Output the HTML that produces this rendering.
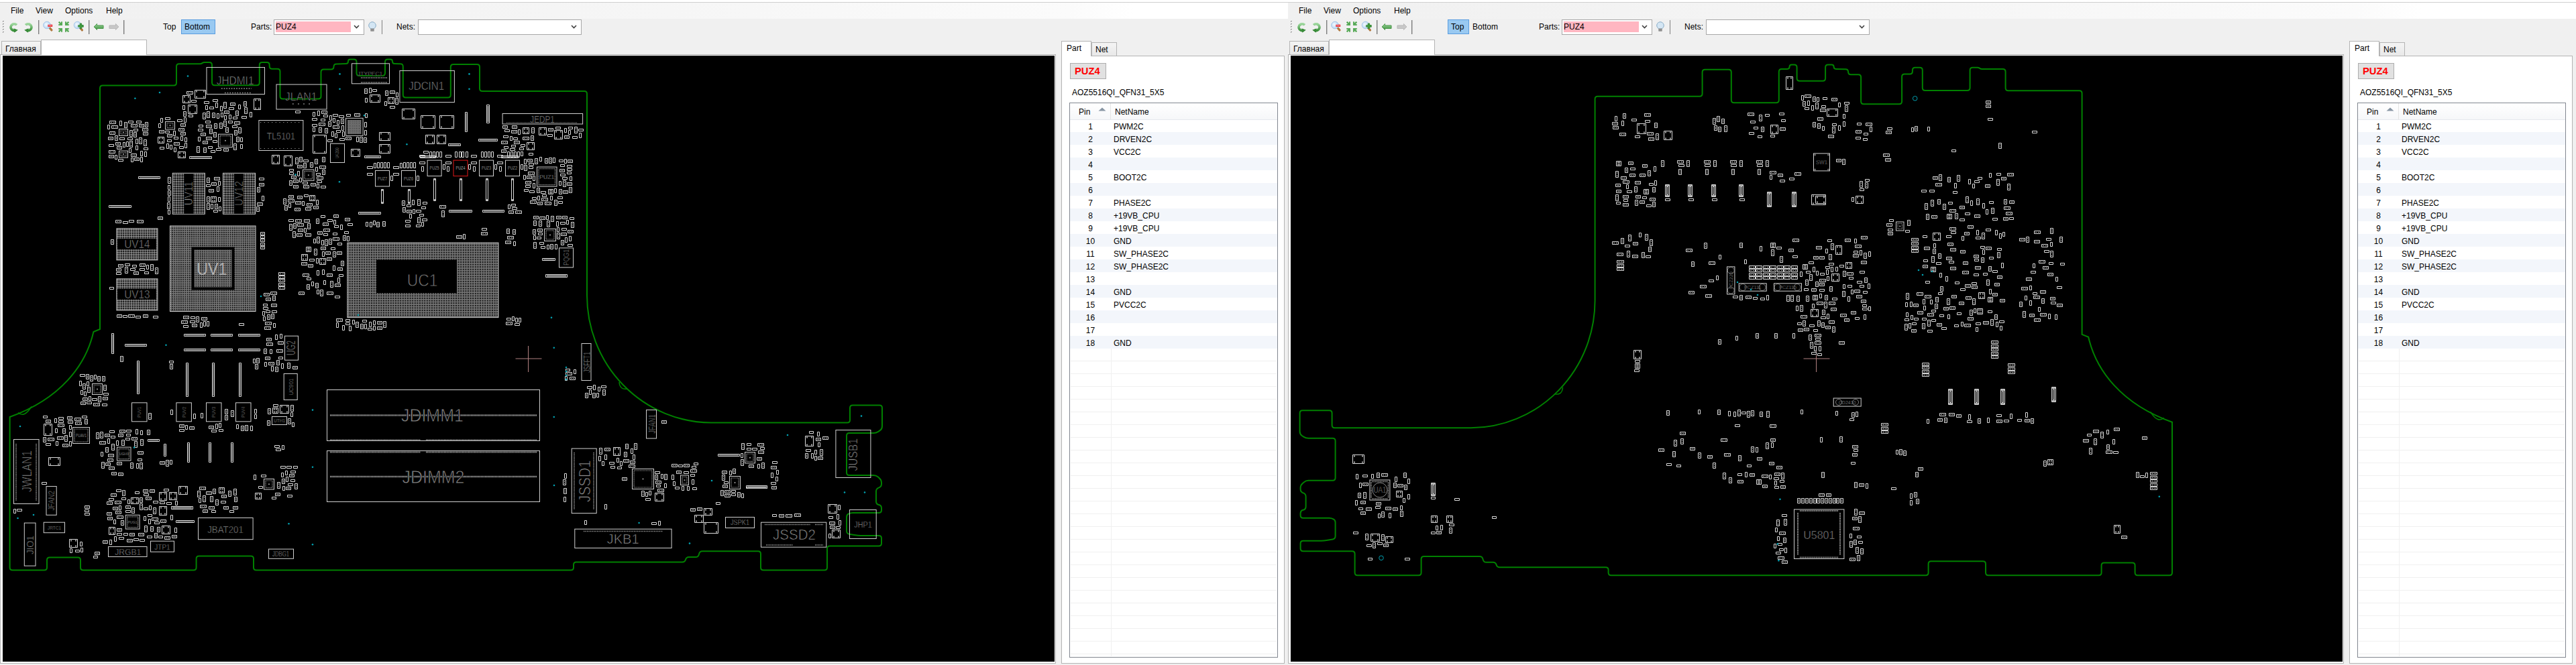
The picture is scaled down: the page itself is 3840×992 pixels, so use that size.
<!DOCTYPE html><html><head><meta charset="utf-8"><style>
html,body{margin:0;padding:0}
body{width:3840px;height:992px;overflow:hidden;background:#f0f0f0;font-family:"Liberation Sans",sans-serif;font-size:12px;color:#000;position:relative}
.win{position:absolute;top:0;width:1920px;height:992px;overflow:hidden;background:#f0f0f0}
.abs{position:absolute}
.lbl{position:absolute;white-space:nowrap;line-height:14px}
.num{text-align:center}
.topstrip{position:absolute;left:0;top:0;width:1920px;height:3px;background:#fff;border-bottom:1px solid #cfcfcf}
.menubar{position:absolute;left:0;top:4px;width:1920px;height:24px;background:linear-gradient(90deg,#f0f0f0 0,#f6f6f6 52%,#fbfbfb 83%,#fff 88%,#fff 100%)}
.menubar span{position:absolute;top:5px;line-height:14px}
.toolbar{position:absolute;left:0;top:28px;width:1920px;height:25px;background:#f0f0f0}
.btnact{background:#99c9f1;border:1px solid #5a9de0;box-sizing:border-box}
.combo{background:#fff;border:1px solid #a8a8a8;box-sizing:border-box}
.tab{background:linear-gradient(#f4f4f4,#e8e8e8);border:1px solid #b4b4b4;border-bottom:none;box-sizing:border-box}
.tabsel{background:#fff;border:1px solid #b4b4b4;border-bottom:none;box-sizing:border-box}
.tabsel2{background:#fff;border:1px solid #b4b4b4;border-bottom:none;box-sizing:border-box}
.panel{background:#fff;border:1px solid #b4b4b4;box-sizing:border-box}
.pbtn{background:#e1e1e1;border:1px solid #adadad;box-sizing:border-box}
.tbl{background:#fff;border:1px solid #828790;box-sizing:border-box}
.thead{background:linear-gradient(#fff,#f6f7f9);border-bottom:1px solid #e5e8ee}
</style></head><body><div class="win" style="left:0"><div class="topstrip"></div><div class="menubar"><span style="left:16px">File</span><span style="left:53px">View</span><span style="left:97px">Options</span><span style="left:158px">Help</span></div><div class="toolbar"></div><svg class="abs" style="left:0;top:0" width="900" height="60"><rect x="4" y="31" width="2" height="2" fill="#9a9a9a"/><rect x="5" y="32" width="1" height="1" fill="#fff"/><rect x="4" y="35" width="2" height="2" fill="#9a9a9a"/><rect x="5" y="36" width="1" height="1" fill="#fff"/><rect x="4" y="39" width="2" height="2" fill="#9a9a9a"/><rect x="5" y="40" width="1" height="1" fill="#fff"/><rect x="4" y="43" width="2" height="2" fill="#9a9a9a"/><rect x="5" y="44" width="1" height="1" fill="#fff"/><rect x="4" y="47" width="2" height="2" fill="#9a9a9a"/><rect x="5" y="48" width="1" height="1" fill="#fff"/><defs><linearGradient id="gg" x1="0" y1="0" x2="0" y2="1"><stop offset="0" stop-color="#9fd89f"/><stop offset="1" stop-color="#3c913c"/></linearGradient><radialGradient id="lens" cx="0.4" cy="0.4" r="0.6"><stop offset="0" stop-color="#f4f9ff"/><stop offset="1" stop-color="#b9d6f2"/></radialGradient></defs><path d="M24.8,37.2 A5,5 0 1 0 23.2,45.2" fill="none" stroke="url(#gg)" stroke-width="3.4"/><path d="M20.5,42.5 L26.5,44.8 L21.5,48.5 Z" fill="#3a8a3a"/><path d="M38.2,37.2 A5,5 0 1 1 39.8,45.2" fill="none" stroke="url(#gg)" stroke-width="3.4"/><path d="M42.5,42.5 L36.5,44.8 L41.5,48.5 Z" fill="#3a8a3a"/><rect x="57.0" y="30" width="1.2" height="21" fill="#7a7a7a"/><rect x="132.0" y="30" width="1.2" height="21" fill="#7a7a7a"/><rect x="184.0" y="30" width="1.2" height="21" fill="#7a7a7a"/><path d="M74,41.5 L77,45" stroke="#b07a40" stroke-width="2.8" stroke-linecap="round"/><circle cx="70" cy="37.5" r="5.2" fill="url(#lens)" stroke="#a9c9ea" stroke-width="1"/><rect x="71.3" y="36.8" width="6.8" height="3.2" fill="#e8303a"/><rect x="72.3" y="37.8" width="4.8" height="1" fill="#ff9a9a"/><g fill="#58aa58"><path d="M87,33.5 L88.5,32 L91,34.5 L91,32.5 L93,32.5 L93,38 L87.5,38 L87.5,36 L89.5,36 Z"/><path d="M103,33.5 L101.5,32 L99,34.5 L99,32.5 L97,32.5 L97,38 L102.5,38 L102.5,36 L100.5,36 Z"/><path d="M87,46.5 L88.5,48 L91,45.5 L91,47.5 L93,47.5 L93,42 L87.5,42 L87.5,44 L89.5,44 Z"/><path d="M103,46.5 L101.5,48 L99,45.5 L99,47.5 L97,47.5 L97,42 L102.5,42 L102.5,44 L100.5,44 Z"/></g><path d="M119.5,41.5 L122.5,45" stroke="#b07a40" stroke-width="2.8" stroke-linecap="round"/><circle cx="115.5" cy="37.5" r="5.2" fill="url(#lens)" stroke="#a9c9ea" stroke-width="1"/><path d="M119,35 h2.6 v2.6 h2.6 v2.6 h-2.6 v2.6 h-2.6 v-2.6 h-2.6 v-2.6 h2.6 z" fill="#3f9a3f" stroke="#2f7f2f" stroke-width="0.5"/><path d="M140,40 L144.5,35.5 L144.5,38 L154,38 L154,42.5 L144.5,42.5 L144.5,44.5 Z" fill="url(#gg)" stroke="#3e8e3e" stroke-width="0.6"/><path d="M177,40 L172.5,35.5 L172.5,38 L163,38 L163,42.5 L172.5,42.5 L172.5,44.5 Z" fill="#c8c8c8" stroke="#b4b4b4" stroke-width="0.6"/><circle cx="555" cy="38" r="5.2" fill="#d4e6f4" stroke="#9ab8cf" stroke-width="1"/><rect x="552.5" y="42.5" width="5" height="4" fill="#909090"/><rect x="569" y="30" width="1" height="21" fill="#808080"/><path d="M528,38 L531.5,41.5 L535,38" fill="none" stroke="#404040" stroke-width="1.6"/><path d="M852,38 L855.5,41.5 L859,38" fill="none" stroke="#404040" stroke-width="1.6"/></svg><div class="abs lbl" style="left:243px;top:33px">Top</div><div class="abs btnact" style="left:270px;top:29px;width:51px;height:22px"></div><div class="abs lbl" style="left:275px;top:33px">Bottom</div><div class="abs lbl" style="left:374px;top:33px">Parts:</div><div class="abs combo" style="left:408px;top:29px;width:135px;height:23px"></div><div class="abs" style="left:411px;top:32px;width:112px;height:16px;background:#ffb6c1"></div><div class="abs lbl" style="left:411px;top:33px">PUZ4</div><div class="abs lbl" style="left:591px;top:33px">Nets:</div><div class="abs combo" style="left:623px;top:29px;width:244px;height:23px"></div><svg class="abs" style="left:0;top:0" width="900" height="60"><rect x="4" y="31" width="2" height="2" fill="#9a9a9a"/><rect x="5" y="32" width="1" height="1" fill="#fff"/><rect x="4" y="35" width="2" height="2" fill="#9a9a9a"/><rect x="5" y="36" width="1" height="1" fill="#fff"/><rect x="4" y="39" width="2" height="2" fill="#9a9a9a"/><rect x="5" y="40" width="1" height="1" fill="#fff"/><rect x="4" y="43" width="2" height="2" fill="#9a9a9a"/><rect x="5" y="44" width="1" height="1" fill="#fff"/><rect x="4" y="47" width="2" height="2" fill="#9a9a9a"/><rect x="5" y="48" width="1" height="1" fill="#fff"/><defs><linearGradient id="gg" x1="0" y1="0" x2="0" y2="1"><stop offset="0" stop-color="#9fd89f"/><stop offset="1" stop-color="#3c913c"/></linearGradient><radialGradient id="lens" cx="0.4" cy="0.4" r="0.6"><stop offset="0" stop-color="#f4f9ff"/><stop offset="1" stop-color="#b9d6f2"/></radialGradient></defs><path d="M24.8,37.2 A5,5 0 1 0 23.2,45.2" fill="none" stroke="url(#gg)" stroke-width="3.4"/><path d="M20.5,42.5 L26.5,44.8 L21.5,48.5 Z" fill="#3a8a3a"/><path d="M38.2,37.2 A5,5 0 1 1 39.8,45.2" fill="none" stroke="url(#gg)" stroke-width="3.4"/><path d="M42.5,42.5 L36.5,44.8 L41.5,48.5 Z" fill="#3a8a3a"/><rect x="57.0" y="30" width="1.2" height="21" fill="#7a7a7a"/><rect x="132.0" y="30" width="1.2" height="21" fill="#7a7a7a"/><rect x="184.0" y="30" width="1.2" height="21" fill="#7a7a7a"/><path d="M74,41.5 L77,45" stroke="#b07a40" stroke-width="2.8" stroke-linecap="round"/><circle cx="70" cy="37.5" r="5.2" fill="url(#lens)" stroke="#a9c9ea" stroke-width="1"/><rect x="71.3" y="36.8" width="6.8" height="3.2" fill="#e8303a"/><rect x="72.3" y="37.8" width="4.8" height="1" fill="#ff9a9a"/><g fill="#58aa58"><path d="M87,33.5 L88.5,32 L91,34.5 L91,32.5 L93,32.5 L93,38 L87.5,38 L87.5,36 L89.5,36 Z"/><path d="M103,33.5 L101.5,32 L99,34.5 L99,32.5 L97,32.5 L97,38 L102.5,38 L102.5,36 L100.5,36 Z"/><path d="M87,46.5 L88.5,48 L91,45.5 L91,47.5 L93,47.5 L93,42 L87.5,42 L87.5,44 L89.5,44 Z"/><path d="M103,46.5 L101.5,48 L99,45.5 L99,47.5 L97,47.5 L97,42 L102.5,42 L102.5,44 L100.5,44 Z"/></g><path d="M119.5,41.5 L122.5,45" stroke="#b07a40" stroke-width="2.8" stroke-linecap="round"/><circle cx="115.5" cy="37.5" r="5.2" fill="url(#lens)" stroke="#a9c9ea" stroke-width="1"/><path d="M119,35 h2.6 v2.6 h2.6 v2.6 h-2.6 v2.6 h-2.6 v-2.6 h-2.6 v-2.6 h2.6 z" fill="#3f9a3f" stroke="#2f7f2f" stroke-width="0.5"/><path d="M140,40 L144.5,35.5 L144.5,38 L154,38 L154,42.5 L144.5,42.5 L144.5,44.5 Z" fill="url(#gg)" stroke="#3e8e3e" stroke-width="0.6"/><path d="M177,40 L172.5,35.5 L172.5,38 L163,38 L163,42.5 L172.5,42.5 L172.5,44.5 Z" fill="#c8c8c8" stroke="#b4b4b4" stroke-width="0.6"/><circle cx="555" cy="38" r="5.2" fill="#d4e6f4" stroke="#9ab8cf" stroke-width="1"/><rect x="552.5" y="42.5" width="5" height="4" fill="#909090"/><rect x="569" y="30" width="1" height="21" fill="#808080"/><path d="M528,38 L531.5,41.5 L535,38" fill="none" stroke="#404040" stroke-width="1.6"/><path d="M852,38 L855.5,41.5 L859,38" fill="none" stroke="#404040" stroke-width="1.6"/></svg><div class="abs tab" style="left:2px;top:61px;width:59px;height:20px"></div><div class="abs lbl" style="left:8px;top:66px">Главная</div><div class="abs" style="left:0;top:81px;width:1574px;height:1px;background:#b0b0b0"></div><div class="abs" style="left:0;top:82px;width:1574px;height:908px;background:#fff;border-right:1px solid #b4b4b4;border-bottom:1px solid #b4b4b4;box-sizing:border-box"></div><div class="abs" style="left:0;top:82px;width:1px;height:908px;background:#b4b4b4"></div><div class="abs tabsel" style="left:61px;top:59px;width:158px;height:23px"></div><svg class="abs" style="left:4px;top:83px;background:#000" width="1568" height="904" viewBox="4 83 1568 904"><path d="M149.0,300.0 L149.0,131.5 Q149.0,127.5 153.0,127.5 L259.0,127.5 Q263.0,127.5 263.0,123.5 L263.0,99.3 Q263.0,95.3 267.0,95.3 L298.1,95.3 Q300.0,95.3 301.5,94.1 L301.5,94.1 Q303.0,92.9 304.9,92.9 L312.0,92.9 Q316.0,92.9 316.0,96.9 L316.0,123.3 Q316.0,127.3 320.0,127.3 L382.8,127.3 Q386.8,127.3 386.8,123.3 L386.8,96.9 Q386.8,92.9 390.8,92.9 L397.7,92.9 Q401.7,92.9 401.7,96.9 L401.7,98.8 Q401.7,102.8 405.7,102.8 L413.5,102.8 Q417.5,102.8 417.5,106.8 L417.5,143.5 Q417.5,147.5 421.5,147.5 L474.5,147.5 Q478.5,147.5 478.5,143.5 L478.5,107.5 Q478.5,103.5 482.5,103.5 L493.5,103.5 Q497.5,103.5 497.5,99.5 L497.5,99.5 Q497.5,95.5 501.5,95.4 L515.8,95.1 Q519.0,95.0 519.0,91.8 L519.0,91.8 Q519.0,88.6 522.2,88.6 L527.5,88.6 Q531.5,88.6 531.5,92.6 L531.5,108.9 Q531.5,112.9 535.5,112.9 L570.0,112.9 Q574.0,112.9 574.0,108.9 L574.0,92.6 Q574.0,88.6 578.0,88.6 L581.8,88.6 Q585.0,88.6 585.0,91.8 L585.0,91.8 Q585.0,95.0 588.2,95.1 L596.8,95.3 Q600.8,95.4 600.8,99.4 L600.8,141.5 Q600.8,145.5 604.8,145.5 L667.8,145.5 Q671.8,145.5 671.8,141.5 L671.8,100.0 Q671.8,96.0 675.8,96.0 L711.0,96.0 Q715.0,96.0 715.0,100.0 L715.0,132.0 Q715.0,136.0 719.0,136.0 L871.0,136.0 Q875.0,136.0 875.0,140.0 L875.0,440.0  A186,190 0 0 0 1060,630.5 L1060.0,630.5 L1263.0,630.5 Q1267.0,630.5 1267.0,626.5 L1267.0,608.5 Q1267.0,604.5 1271.0,604.5 L1311.0,604.5 Q1315.0,604.5 1315.0,608.5 L1315.0,636.0 Q1315.0,640.0 1311.7,642.2 L1309.3,643.8 Q1306.0,646.0 1302.0,646.0 L1266.0,646.0 Q1262.0,646.0 1262.0,650.0 L1262.0,705.0 Q1262.0,709.0 1266.0,709.0 L1302.0,709.0 Q1306.0,709.0 1309.0,711.6 L1311.0,713.4 Q1314.0,716.0 1314.0,720.0 L1314.0,722.0 Q1314.0,726.0 1310.3,727.4 L1309.7,727.6 Q1306.0,729.0 1306.0,733.0 L1306.0,748.0 Q1306.0,752.0 1309.9,753.0 L1310.1,753.0 Q1314.0,754.0 1314.0,758.0 L1314.0,761.0 Q1314.0,765.0 1310.0,765.0 L1271.4,765.0 Q1268.0,765.0 1265.0,766.5 L1265.0,766.5 Q1262.0,768.0 1262.0,771.4 L1262.0,792.0 Q1262.0,796.0 1265.9,796.7 L1275.1,798.3 Q1279.0,799.0 1283.0,799.0 L1310.0,799.0 Q1314.0,799.0 1314.0,803.0 L1314.0,810.5 Q1314.0,814.5 1310.0,814.5 L1237.0,814.5 Q1233.0,814.5 1233.0,818.5 L1233.0,846.5 Q1233.0,850.5 1229.0,850.5 L1138.0,850.5 Q1134.0,850.5 1134.0,846.5 L1134.0,826.3 Q1134.0,822.3 1130.0,822.3 L1047.0,822.3 Q1043.0,822.3 1042.1,826.2 L1041.9,827.1 Q1041.0,831.0 1037.0,831.0 L1026.9,831.0 Q1023.0,831.0 1022.0,834.8 L1022.0,834.8 Q1021.0,838.5 1017.1,838.5 L859.0,838.5 Q855.0,838.5 855.0,842.5 L855.0,846.5 Q855.0,850.5 851.0,850.5 L382.0,850.5 Q378.0,850.5 378.0,846.5 L378.0,833.5 Q378.0,829.5 374.0,829.5 L296.6,829.5 Q292.6,829.5 292.6,833.5 L292.6,846.5 Q292.6,850.5 288.6,850.5 L124.0,850.5 Q120.0,850.5 120.0,846.5 L120.0,835.6 Q120.0,831.6 116.0,831.6 L74.0,831.6 Q70.0,831.6 70.0,835.6 L70.0,846.5 Q70.0,850.5 66.0,850.5 L18.6,850.5 Q14.6,850.5 14.6,846.5 L14.6,622.0  C90,595 128,545 139.4,495 L149,491 Z" fill="none" stroke="#008000" stroke-width="2"/><path d="M27,615.5 Q36,624 47,606.5" fill="none" stroke="#008000" stroke-width="1.5"/><path d="M923,570 Q924,582 935,580" fill="none" stroke="#008000" stroke-width="1.5"/><path d="M768.5,535H807.5M787.5,516V555" stroke="#b08080" stroke-width="1"/><rect x="308" y="100.5" width="86.5" height="40" fill="none" stroke="#cfcfcf" stroke-width="1"/><text x="350.6" y="125.8" font-size="16.3" fill="#8e8e8e" stroke="#000" stroke-width="0.52" text-anchor="middle" textLength="55.8" lengthAdjust="spacingAndGlyphs">JHDMI1</text><path d="M330,132h45M335,138.5h40" stroke="#9a9a9a" stroke-width="1.6" stroke-dasharray="1.6 2.1"/><rect x="412" y="126" width="75" height="37" fill="none" stroke="#cfcfcf" stroke-width="1"/><text x="448.8" y="149.8" font-size="16.5" fill="#8e8e8e" stroke="#000" stroke-width="0.53" text-anchor="middle" textLength="47.9" lengthAdjust="spacingAndGlyphs">JLAN1</text><path d="M436,155h32" stroke="#9a9a9a" stroke-width="1.6" stroke-dasharray="1.6 6.5"/><rect x="524.5" y="94.8" width="56" height="30" fill="none" stroke="#cfcfcf" stroke-width="1"/><text x="551.7" y="112.9" font-size="9.5" fill="#8e8e8e" stroke="#000" stroke-width="0.30" text-anchor="middle" textLength="37.2" lengthAdjust="spacingAndGlyphs">JTYPEC1</text><path d="M538,116h40M538,123h40" stroke="#9a9a9a" stroke-width="1.5" stroke-dasharray="1.5 1"/><rect x="595.9" y="105.5" width="81.5" height="47" fill="none" stroke="#cfcfcf" stroke-width="1"/><text x="635.7" y="134.3" font-size="17.3" fill="#8e8e8e" stroke="#000" stroke-width="0.55" text-anchor="middle" textLength="53" lengthAdjust="spacingAndGlyphs">JDCIN1</text><rect x="385.9" y="179.5" width="66" height="45" fill="none" stroke="#cfcfcf" stroke-width="1"/><text x="418.8" y="207.5" font-size="14.4" fill="#8e8e8e" stroke="#000" stroke-width="0.46" text-anchor="middle" textLength="42" lengthAdjust="spacingAndGlyphs">TL5101</text><path d="M388,182.5h62M388,221.5h62" stroke="#9a9a9a" stroke-width="1.2" stroke-dasharray="1.2 4.5"/><rect x="749.1" y="169.5" width="119.5" height="15.5" fill="none" stroke="#cfcfcf" stroke-width="1"/><text x="808.5" y="182.6" font-size="14.0" fill="#8e8e8e" stroke="#000" stroke-width="0.45" text-anchor="middle" textLength="36.4" lengthAdjust="spacingAndGlyphs">JEDP1</text><path d="M755,183h105" stroke="#9a9a9a" stroke-width="1.2" stroke-dasharray="1 1"/><pattern id="uv1" x="254" y="337.2" width="3.2" height="3.2" patternUnits="userSpaceOnUse"><circle cx="1.6" cy="1.6" r="0.95" fill="none" stroke="#b4b4b4" stroke-width="0.9"/></pattern><rect x="254" y="337.2" width="126.5" height="126.5" fill="url(#uv1)"/><rect x="253.5" y="337" width="127.5" height="127.5" fill="none" stroke="#cfcfcf" stroke-width="1"/><rect x="287.5" y="370.5" width="60" height="60" fill="none" stroke="#000" stroke-width="4"/><text x="315.8" y="410" font-size="26.5" fill="#b0b0b0" stroke="#000" stroke-width="0.00" text-anchor="middle" textLength="45" lengthAdjust="spacingAndGlyphs">UV1</text><pattern id="pUV14" x="174" y="341" width="3.4" height="3.4" patternUnits="userSpaceOnUse"><circle cx="1.7" cy="1.7" r="0.95" fill="none" stroke="#b4b4b4" stroke-width="0.9"/></pattern><rect x="174" y="341" width="60.5" height="46.5" fill="url(#pUV14)"/><rect x="173.9" y="340.9" width="61" height="47" fill="none" stroke="#cfcfcf" stroke-width="1"/><rect x="175" y="356.1" width="58" height="16" fill="#000"/><text x="204.4" y="370.3" font-size="17.3" fill="#8e8e8e" stroke="#000" stroke-width="0.55" text-anchor="middle" textLength="38.3" lengthAdjust="spacingAndGlyphs">UV14</text><pattern id="pUV13" x="174" y="416" width="3.4" height="3.4" patternUnits="userSpaceOnUse"><circle cx="1.7" cy="1.7" r="0.95" fill="none" stroke="#b4b4b4" stroke-width="0.9"/></pattern><rect x="174" y="416" width="60.5" height="46.5" fill="url(#pUV13)"/><rect x="173.9" y="415.9" width="61" height="47" fill="none" stroke="#cfcfcf" stroke-width="1"/><rect x="175" y="430.8" width="58" height="16" fill="#000"/><text x="204.4" y="445" font-size="17.3" fill="#8e8e8e" stroke="#000" stroke-width="0.55" text-anchor="middle" textLength="38.3" lengthAdjust="spacingAndGlyphs">UV13</text><pattern id="pUV11" x="257.8" y="258.8" width="3.5" height="3.5" patternUnits="userSpaceOnUse"><circle cx="1.75" cy="1.75" r="0.95" fill="none" stroke="#b4b4b4" stroke-width="0.9"/></pattern><rect x="257.8" y="258.8" width="47" height="60" fill="url(#pUV11)"/><rect x="257.3" y="258.3" width="48" height="61" fill="none" stroke="#cfcfcf" stroke-width="1"/><rect x="274.3" y="259" width="14" height="60" fill="#000"/><text x="281.3" y="294.5" font-size="16.8" fill="#8e8e8e" stroke="#000" stroke-width="0.54" text-anchor="middle" textLength="35.5" lengthAdjust="spacingAndGlyphs" transform="rotate(-90 281.3 288.5)">UV11</text><pattern id="pUV12" x="333" y="258.8" width="3.5" height="3.5" patternUnits="userSpaceOnUse"><circle cx="1.75" cy="1.75" r="0.95" fill="none" stroke="#b4b4b4" stroke-width="0.9"/></pattern><rect x="333" y="258.8" width="47" height="60" fill="url(#pUV12)"/><rect x="332.5" y="258.3" width="48" height="61" fill="none" stroke="#cfcfcf" stroke-width="1"/><rect x="348.9" y="259" width="14" height="60" fill="#000"/><text x="355.9" y="294.5" font-size="16.8" fill="#8e8e8e" stroke="#000" stroke-width="0.54" text-anchor="middle" textLength="37" lengthAdjust="spacingAndGlyphs" transform="rotate(-90 355.9 288.5)">UV12</text><pattern id="uc1" x="518" y="362.2" width="3.6" height="3.6" patternUnits="userSpaceOnUse"><circle cx="1.8" cy="1.8" r="1.1" fill="none" stroke="#b4b4b4" stroke-width="1.0"/></pattern><rect x="518" y="362.2" width="225" height="111" fill="url(#uc1)"/><rect x="517.9" y="362.1" width="225" height="111.5" fill="none" stroke="#cfcfcf" stroke-width="1"/><path d="M561,387.5 H681 V437 H561 Z" fill="#000"/><text x="629.6" y="427.1" font-size="26.7" fill="#7a7a7a" stroke="#000" stroke-width="0.80" text-anchor="middle" textLength="45.6" lengthAdjust="spacingAndGlyphs">UC1</text><rect x="637.1" y="239.1" width="21" height="23.5" fill="none" stroke="#cfcfcf" stroke-width="1"/><text x="647.6" y="253.3" font-size="6.3" fill="#b8b8b8" stroke="#000" stroke-width="0.20" text-anchor="middle" textLength="14" lengthAdjust="spacingAndGlyphs">PUZ5</text><rect x="714.5" y="239.1" width="21" height="23.5" fill="none" stroke="#cfcfcf" stroke-width="1"/><text x="725" y="253.3" font-size="6.3" fill="#b8b8b8" stroke="#000" stroke-width="0.20" text-anchor="middle" textLength="14" lengthAdjust="spacingAndGlyphs">PUZ3</text><rect x="753.5" y="239.1" width="21" height="23.5" fill="none" stroke="#cfcfcf" stroke-width="1"/><text x="764" y="253.3" font-size="6.3" fill="#b8b8b8" stroke="#000" stroke-width="0.20" text-anchor="middle" textLength="14" lengthAdjust="spacingAndGlyphs">PUZ2</text><rect x="559.5" y="254.5" width="21" height="23.5" fill="none" stroke="#cfcfcf" stroke-width="1"/><text x="570" y="268.8" font-size="6.3" fill="#b8b8b8" stroke="#000" stroke-width="0.20" text-anchor="middle" textLength="14" lengthAdjust="spacingAndGlyphs">PUZ7</text><rect x="598.5" y="254.5" width="21" height="23.5" fill="none" stroke="#cfcfcf" stroke-width="1"/><text x="609" y="268.8" font-size="6.3" fill="#b8b8b8" stroke="#000" stroke-width="0.20" text-anchor="middle" textLength="14" lengthAdjust="spacingAndGlyphs">PUZ6</text><rect x="676" y="239.1" width="21" height="23.5" fill="none" stroke="#e01818" stroke-width="1"/><text x="686.5" y="253.2" font-size="6.3" fill="#d0d0d0" stroke="#000" stroke-width="0.20" text-anchor="middle" textLength="14" lengthAdjust="spacingAndGlyphs">PUZ4</text><rect x="800.5" y="249.1" width="29.5" height="29" fill="none" stroke="#cfcfcf" stroke-width="1"/><rect x="803" y="251.6" width="24.5" height="24" fill="none" stroke="#a0a0a0" stroke-width="1.2" stroke-dasharray="1 0.8"/><text x="815.2" y="267.1" font-size="9.8" fill="#a8a8a8" stroke="#000" stroke-width="0.31" text-anchor="middle" textLength="22" lengthAdjust="spacingAndGlyphs">PUZ1</text><rect x="492.5" y="214.2" width="21" height="28.3" fill="none" stroke="#cfcfcf" stroke-width="1"/><text x="503" y="230.6" font-size="6.3" fill="#8e8e8e" stroke="#000" stroke-width="0.20" text-anchor="middle" textLength="16" lengthAdjust="spacingAndGlyphs" transform="rotate(-90 503 228.3)">U4200</text><rect x="833.5" y="369.9" width="21" height="29" fill="none" stroke="#cfcfcf" stroke-width="1"/><text x="844" y="388" font-size="11.2" fill="#8e8e8e" stroke="#000" stroke-width="0.36" text-anchor="middle" textLength="24" lengthAdjust="spacingAndGlyphs" transform="rotate(-90 844 384)">PQG1</text><rect x="487.5" y="581.5" width="317" height="76" fill="none" stroke="#cfcfcf" stroke-width="1"/><path d="M492,619.5h308" stroke="#9a9a9a" stroke-width="2.4" stroke-dasharray="1.4 0.7"/><text x="644.4" y="629.4" font-size="27.7" fill="#8a8a8a" stroke="#000" stroke-width="0.80" text-anchor="middle" textLength="93" lengthAdjust="spacingAndGlyphs">JDIMM1</text><rect x="487.5" y="672.5" width="317" height="76" fill="none" stroke="#cfcfcf" stroke-width="1"/><path d="M492,711h308" stroke="#9a9a9a" stroke-width="2.4" stroke-dasharray="1.4 0.7"/><text x="646" y="720.9" font-size="27.7" fill="#8a8a8a" stroke="#000" stroke-width="0.80" text-anchor="middle" textLength="93" lengthAdjust="spacingAndGlyphs">JDIMM2</text><path d="M492,656.5h135M635,656.5h165M492,674.5h135M635,674.5h165" stroke="#a0a0a0" stroke-width="2" stroke-dasharray="1.2 0.6"/><rect x="852.2" y="669.1" width="37" height="96.5" fill="none" stroke="#cfcfcf" stroke-width="1"/><text x="871.3" y="726" font-size="23.0" fill="#8e8e8e" stroke="#000" stroke-width="0.74" text-anchor="middle" textLength="62.3" lengthAdjust="spacingAndGlyphs" transform="rotate(-90 871.3 717.8)">JSSD1</text><path d="M856,675v85M885,675v85" stroke="#a0a0a0" stroke-width="1.5" stroke-dasharray="1 0.8"/><rect x="856.8" y="789.2" width="144.3" height="28.3" fill="none" stroke="#cfcfcf" stroke-width="1"/><text x="928.7" y="811.4" font-size="19.6" fill="#8e8e8e" stroke="#000" stroke-width="0.63" text-anchor="middle" textLength="48.3" lengthAdjust="spacingAndGlyphs">JKB1</text><path d="M870,792.5h118" stroke="#a0a0a0" stroke-width="1.5" stroke-dasharray="1.3 1.2"/><rect x="1134.5" y="779.2" width="97.3" height="37" fill="none" stroke="#cfcfcf" stroke-width="1"/><text x="1184" y="805.2" font-size="21.8" fill="#8e8e8e" stroke="#000" stroke-width="0.70" text-anchor="middle" textLength="63.8" lengthAdjust="spacingAndGlyphs">JSSD2</text><path d="M1140,782.5h68M1215,782.5h12M1142,813h40M1215,813h12" stroke="#a0a0a0" stroke-width="1.5" stroke-dasharray="1 0.8"/><rect x="1081.5" y="771.5" width="43" height="16" fill="none" stroke="#cfcfcf" stroke-width="1"/><text x="1103" y="783.4" font-size="10.1" fill="#8e8e8e" stroke="#000" stroke-width="0.32" text-anchor="middle" textLength="28" lengthAdjust="spacingAndGlyphs">JSPK1</text><rect x="1266.5" y="760.5" width="39.7" height="43" fill="none" stroke="#cfcfcf" stroke-width="1"/><text x="1286.6" y="786.5" font-size="13.0" fill="#8e8e8e" stroke="#000" stroke-width="0.42" text-anchor="middle" textLength="26.5" lengthAdjust="spacingAndGlyphs">JHP1</text><rect x="1245.9" y="641.5" width="52" height="71" fill="none" stroke="#cfcfcf" stroke-width="1"/><text x="1272" y="684.5" font-size="17.5" fill="#8e8e8e" stroke="#000" stroke-width="0.56" text-anchor="middle" textLength="48.5" lengthAdjust="spacingAndGlyphs" transform="rotate(-90 1272 678.3)">JUSB1</text><rect x="963.5" y="611.5" width="15" height="42.5" fill="none" stroke="#cfcfcf" stroke-width="1"/><text x="972" y="637.9" font-size="15.4" fill="#8e8e8e" stroke="#000" stroke-width="0.49" text-anchor="middle" textLength="28" lengthAdjust="spacingAndGlyphs" transform="rotate(-90 972 632.4)">JFAN1</text><rect x="867" y="512.5" width="14" height="55" fill="none" stroke="#cfcfcf" stroke-width="1"/><text x="874.5" y="545.5" font-size="14.0" fill="#8e8e8e" stroke="#000" stroke-width="0.45" text-anchor="middle" textLength="31" lengthAdjust="spacingAndGlyphs" transform="rotate(-90 874.5 540.5)">JSFFT1</text><rect x="295.5" y="772.5" width="81.6" height="32.2" fill="none" stroke="#cfcfcf" stroke-width="1"/><text x="336" y="795" font-size="15.4" fill="#8e8e8e" stroke="#000" stroke-width="0.49" text-anchor="middle" textLength="53.6" lengthAdjust="spacingAndGlyphs">JBAT201</text><rect x="161.5" y="815.5" width="57.5" height="15" fill="none" stroke="#cfcfcf" stroke-width="1"/><text x="190.7" y="827.7" font-size="13.1" fill="#8e8e8e" stroke="#000" stroke-width="0.42" text-anchor="middle" textLength="39" lengthAdjust="spacingAndGlyphs">JRGB1</text><rect x="224.5" y="807.2" width="35" height="16" fill="none" stroke="#cfcfcf" stroke-width="1"/><text x="242" y="819.8" font-size="11.7" fill="#8e8e8e" stroke="#000" stroke-width="0.38" text-anchor="middle" textLength="23.3" lengthAdjust="spacingAndGlyphs">JTP1</text><rect x="36.3" y="780.1" width="16.7" height="64" fill="none" stroke="#cfcfcf" stroke-width="1"/><text x="44.4" y="818.5" font-size="15.4" fill="#8e8e8e" stroke="#000" stroke-width="0.49" text-anchor="middle" textLength="28" lengthAdjust="spacingAndGlyphs" transform="rotate(-90 44.4 813)">JIO1</text><rect x="65.2" y="779.2" width="31.3" height="15.5" fill="none" stroke="#cfcfcf" stroke-width="1"/><text x="81" y="790.2" font-size="7.4" fill="#8e8e8e" stroke="#000" stroke-width="0.24" text-anchor="middle" textLength="20" lengthAdjust="spacingAndGlyphs">JRTC1</text><rect x="69" y="725.5" width="15.2" height="42.8" fill="none" stroke="#cfcfcf" stroke-width="1"/><text x="76.7" y="751.4" font-size="13.0" fill="#8e8e8e" stroke="#000" stroke-width="0.42" text-anchor="middle" textLength="29.6" lengthAdjust="spacingAndGlyphs" transform="rotate(-90 76.7 746.8)">JFAN2</text><rect x="400.5" y="819.1" width="37" height="14.2" fill="none" stroke="#cfcfcf" stroke-width="1"/><text x="418.6" y="829.6" font-size="10.1" fill="#8e8e8e" stroke="#000" stroke-width="0.32" text-anchor="middle" textLength="25" lengthAdjust="spacingAndGlyphs">JDBG1</text><rect x="20.5" y="655.5" width="37.5" height="96" fill="none" stroke="#cfcfcf" stroke-width="1"/><text x="39.5" y="710" font-size="19.6" fill="#8e8e8e" stroke="#000" stroke-width="0.63" text-anchor="middle" textLength="62" lengthAdjust="spacingAndGlyphs" transform="rotate(-90 39.5 703)">JWLAN1</text><path d="M24,662v85M54,662v85" stroke="#a0a0a0" stroke-width="1.5" stroke-dasharray="1 0.8"/><rect x="424.5" y="501.2" width="20" height="36" fill="none" stroke="#cfcfcf" stroke-width="1"/><text x="434" y="525.2" font-size="17.5" fill="#8e8e8e" stroke="#000" stroke-width="0.56" text-anchor="middle" textLength="21.8" lengthAdjust="spacingAndGlyphs" transform="rotate(-90 434 519)">UG2</text><rect x="423.2" y="557.5" width="20" height="39" fill="none" stroke="#cfcfcf" stroke-width="1"/><text x="433" y="580.5" font-size="9.8" fill="#8e8e8e" stroke="#000" stroke-width="0.31" text-anchor="middle" textLength="25" lengthAdjust="spacingAndGlyphs" transform="rotate(-90 433 577)">UC901</text><rect x="405.5" y="621.5" width="22" height="12" fill="none" stroke="#cfcfcf" stroke-width="1"/><text x="416.5" y="630" font-size="7.0" fill="#8e8e8e" stroke="#000" stroke-width="0.22" text-anchor="middle" textLength="17" lengthAdjust="spacingAndGlyphs">UTH1</text><rect x="196.5" y="600.8" width="22.5" height="28" fill="none" stroke="#cfcfcf" stroke-width="1"/><text x="207.7" y="617.5" font-size="7.7" fill="#8e8e8e" stroke="#000" stroke-width="0.25" text-anchor="middle" textLength="16" lengthAdjust="spacingAndGlyphs" transform="rotate(-90 207.7 614.8)">PUV1</text><rect x="262.9" y="600.8" width="22.5" height="28" fill="none" stroke="#cfcfcf" stroke-width="1"/><text x="274.1" y="617.5" font-size="7.7" fill="#8e8e8e" stroke="#000" stroke-width="0.25" text-anchor="middle" textLength="16" lengthAdjust="spacingAndGlyphs" transform="rotate(-90 274.1 614.8)">PUV2</text><rect x="307.5" y="600.8" width="22.5" height="28" fill="none" stroke="#cfcfcf" stroke-width="1"/><text x="318.7" y="617.5" font-size="7.7" fill="#8e8e8e" stroke="#000" stroke-width="0.25" text-anchor="middle" textLength="16" lengthAdjust="spacingAndGlyphs" transform="rotate(-90 318.7 614.8)">PUV3</text><rect x="351.5" y="600.8" width="22.5" height="28" fill="none" stroke="#cfcfcf" stroke-width="1"/><text x="362.7" y="617.5" font-size="7.7" fill="#8e8e8e" stroke="#000" stroke-width="0.25" text-anchor="middle" textLength="16" lengthAdjust="spacingAndGlyphs" transform="rotate(-90 362.7 614.8)">PUV4</text><rect x="108.5" y="637.5" width="25" height="24" fill="none" stroke="#cfcfcf" stroke-width="1"/><rect x="111" y="640" width="20" height="19" fill="none" stroke="#a0a0a0" stroke-width="1.2" stroke-dasharray="1 0.8"/><text x="121" y="651.8" font-size="6.3" fill="#a8a8a8" stroke="#000" stroke-width="0.20" text-anchor="middle" textLength="16" lengthAdjust="spacingAndGlyphs">PUAV1</text><rect x="174.5" y="667.1" width="20.5" height="20" fill="none" stroke="#cfcfcf" stroke-width="1"/><rect x="177" y="669.6" width="15.5" height="15" fill="none" stroke="#a0a0a0" stroke-width="1.2" stroke-dasharray="1 0.8"/><text x="184.8" y="679.1" font-size="5.6" fill="#a8a8a8" stroke="#000" stroke-width="0.18" text-anchor="middle" textLength="14" lengthAdjust="spacingAndGlyphs">UGH9</text><rect x="187.3" y="768.3" width="20.8" height="20.8" fill="none" stroke="#cfcfcf" stroke-width="1"/><rect x="189.8" y="770.8" width="15.8" height="15.8" fill="none" stroke="#a0a0a0" stroke-width="1.2" stroke-dasharray="1 0.8"/><text x="197.7" y="780.7" font-size="5.6" fill="#a8a8a8" stroke="#000" stroke-width="0.18" text-anchor="middle" textLength="14" lengthAdjust="spacingAndGlyphs">PUG1</text><rect x="137.5" y="572.5" width="15" height="16" fill="none" stroke="#cfcfcf" stroke-width="1"/><rect x="140" y="575" width="10" height="11" fill="none" stroke="#a0a0a0" stroke-width="1.2" stroke-dasharray="1 0.8"/><circle cx="145" cy="580.5" r="1" fill="#aaa"/><rect x="325.5" y="200.2" width="21" height="19.3" fill="none" stroke="#cfcfcf" stroke-width="1"/><rect x="328" y="202.7" width="16" height="14.3" fill="none" stroke="#a0a0a0" stroke-width="1.2" stroke-dasharray="1 0.8"/><circle cx="336" cy="209.8" r="1" fill="#aaa"/><rect x="451.5" y="253.1" width="16.5" height="16.2" fill="none" stroke="#cfcfcf" stroke-width="1"/><rect x="454" y="255.6" width="11.5" height="11.2" fill="none" stroke="#a0a0a0" stroke-width="1.2" stroke-dasharray="1 0.8"/><circle cx="459.8" cy="261.2" r="1" fill="#aaa"/><rect x="515.5" y="176.3" width="25.6" height="26" fill="none" stroke="#cfcfcf" stroke-width="1"/><pattern id="u41" x="518" y="179" width="2.6" height="2.6" patternUnits="userSpaceOnUse"><circle cx="1.3" cy="1.3" r="0.8" fill="none" stroke="#9a9a9a" stroke-width="0.9"/></pattern><rect x="518" y="179" width="20.5" height="21" fill="url(#u41)"/><rect x="942.5" y="699.5" width="32" height="30" fill="none" stroke="#cfcfcf" stroke-width="1"/><rect x="945" y="702" width="27" height="25" fill="none" stroke="#a0a0a0" stroke-width="1.2" stroke-dasharray="1 0.8"/><circle cx="958.5" cy="714.5" r="1" fill="#aaa"/><rect x="1014.5" y="709" width="12" height="14.5" fill="none" stroke="#cfcfcf" stroke-width="1"/><rect x="1017" y="711.5" width="7" height="9.5" fill="none" stroke="#a0a0a0" stroke-width="1.2" stroke-dasharray="1 0.8"/><circle cx="1020.5" cy="716.2" r="1" fill="#aaa"/><rect x="1087.5" y="710.5" width="16" height="19" fill="none" stroke="#cfcfcf" stroke-width="1"/><rect x="1090" y="713" width="11" height="14" fill="none" stroke="#a0a0a0" stroke-width="1.2" stroke-dasharray="1 0.8"/><circle cx="1095.5" cy="720" r="1" fill="#aaa"/><rect x="1110.5" y="674.5" width="15" height="16.4" fill="none" stroke="#cfcfcf" stroke-width="1"/><rect x="1113" y="677" width="10" height="11.4" fill="none" stroke="#a0a0a0" stroke-width="1.2" stroke-dasharray="1 0.8"/><circle cx="1118" cy="682.7" r="1" fill="#aaa"/><rect x="811.5" y="341.5" width="17" height="18" fill="none" stroke="#cfcfcf" stroke-width="1"/><rect x="814" y="344" width="12" height="13" fill="none" stroke="#a0a0a0" stroke-width="1.2" stroke-dasharray="1 0.8"/><circle cx="820" cy="350.5" r="1" fill="#aaa"/><rect x="246.5" y="181.5" width="14" height="11.5" fill="none" stroke="#cfcfcf" stroke-width="1"/><rect x="249" y="184" width="9" height="6.5" fill="none" stroke="#a0a0a0" stroke-width="1.2" stroke-dasharray="1 0.8"/><circle cx="253.5" cy="187.2" r="1" fill="#aaa"/><rect x="393.5" y="714.5" width="15" height="15.5" fill="none" stroke="#cfcfcf" stroke-width="1"/><rect x="396" y="717" width="10" height="10.5" fill="none" stroke="#a0a0a0" stroke-width="1.2" stroke-dasharray="1 0.8"/><circle cx="401" cy="722.2" r="1" fill="#aaa"/><rect x="177.5" y="192.5" width="13" height="10" fill="none" stroke="#cfcfcf" stroke-width="1"/><rect x="180" y="195" width="8" height="5" fill="none" stroke="#a0a0a0" stroke-width="1.2" stroke-dasharray="1 0.8"/><circle cx="184" cy="197.5" r="1" fill="#aaa"/><rect x="177.5" y="225.1" width="13" height="10" fill="none" stroke="#cfcfcf" stroke-width="1"/><rect x="180" y="227.6" width="8" height="5" fill="none" stroke="#a0a0a0" stroke-width="1.2" stroke-dasharray="1 0.8"/><circle cx="184" cy="230.1" r="1" fill="#aaa"/><path d="M405.5,231.5h11v13h-11zM423.5,232.5h12v15h-12zM466.5,201.5h20v27h-20zM523.5,222.5h13v11h-13zM551.5,141.5h15v11h-15zM565.5,197.5h16v12h-16zM565.5,215.5h16v13h-16zM599.5,162.5h19v15h-19zM627.5,172.5h21v19h-21zM655.5,172.5h21v19h-21zM634.5,201.5h13v13h-13zM651.5,201.5h13v13h-13zM826.5,194.5h12v13h-12zM280.5,156.5h13v13h-13zM290.5,134.5h16v12h-16zM265.5,226.5h11v9h-11zM378.5,147.5h10v16h-10zM417.5,604.5h13v12h-13zM65.5,632.5h12v17h-12zM72.5,682.5h17v12h-17zM103.5,804.5h12v12h-12zM195.5,742.5h11v9h-11zM237.5,734.5h11v12h-11zM237.5,755.5h11v13h-11zM162.5,786.5h9v11h-9zM241.5,784.5h12v12h-12zM266.5,725.5h13v12h-13zM914.5,667.5h10v12h-10zM976.5,735.5h13v12h-13zM1049.5,758.5h12v10h-12zM1035.5,768.5h13v11h-13zM1049.5,779.5h21v16h-21zM1200.5,650.5h12v15h-12zM1234.5,752.5h13v13h-13zM1240.5,790.5h12v12h-12zM204.5,538.5h3v49h-3zM277.5,541.5h3v50h-3zM316.5,541.5h3v50h-3zM356.5,541.5h3v50h-3zM279.5,660.5h3v29h-3zM311.5,660.5h3v29h-3zM344.5,660.5h3v29h-3zM274.5,498.5h32v3h-32zM314.5,498.5h32v3h-32zM355.5,498.5h32v3h-32zM274.5,520.5h32v3h-32zM314.5,520.5h32v3h-32zM355.5,520.5h32v3h-32zM186.5,513.5h32v3h-32zM166.5,497.5h3v30h-3zM244.5,662.5h3v18h-3zM220.5,655.5h17v3h-17zM282.5,233.5h33v3h-33zM206.5,263.5h32v3h-32zM162.5,306.5h33v3h-33zM543.5,232.5h24v3h-24zM713.5,207.5h28v3h-28zM668.5,214.5h18v3h-18zM693.5,167.5h3v29h-3zM725.5,156.5h4v27h-4zM534.5,316.5h33v3h-33zM669.5,313.5h34v3h-34zM719.5,313.5h32v3h-32zM808.5,385.5h19v3h-19zM813.5,409.5h32v4h-32zM255.5,755.5h32v4h-32zM262.5,776.5h27v3h-27zM1070.5,677.5h32v3h-32zM1113.5,726.5h30v2h-30zM1112.5,724.5h31v4h-31zM626.5,232.5h23v3h-23zM747.5,232.5h25v3h-25zM415.5,406.5h9v4h-9zM388.5,346.5h6v4h-6zM415.5,411.5h9v4h-9zM388.5,351.5h6v4h-6zM415.5,416.5h9v4h-9zM388.5,356.5h6v4h-6zM415.5,422.5h9v4h-9zM388.5,362.5h6v4h-6zM415.5,427.5h9v4h-9zM388.5,367.5h6v4h-6zM640.5,226.5h3v8h-3zM645.5,226.5h3v8h-3zM650.5,226.5h3v8h-3zM655.5,226.5h3v8h-3zM625.5,231.5h8v3h-8zM625.5,241.5h8v3h-8zM628.5,248.5h3v7h-3zM660.5,245.5h3v7h-3zM646.5,266.5h3v33h-3zM678.5,226.5h3v8h-3zM684.5,226.5h3v8h-3zM688.5,226.5h3v8h-3zM694.5,226.5h3v8h-3zM664.5,231.5h8v3h-8zM664.5,241.5h8v3h-8zM666.5,248.5h3v7h-3zM698.5,245.5h3v7h-3zM685.5,266.5h3v33h-3zM717.5,226.5h3v8h-3zM722.5,226.5h3v8h-3zM727.5,226.5h3v8h-3zM732.5,226.5h3v8h-3zM702.5,231.5h8v3h-8zM702.5,241.5h8v3h-8zM705.5,248.5h3v7h-3zM737.5,245.5h3v7h-3zM724.5,266.5h3v33h-3zM756.5,226.5h3v8h-3zM761.5,226.5h3v8h-3zM766.5,226.5h3v8h-3zM771.5,226.5h3v8h-3zM741.5,231.5h8v3h-8zM741.5,241.5h8v3h-8zM744.5,248.5h3v7h-3zM776.5,245.5h3v7h-3zM762.5,266.5h3v33h-3zM562.5,242.5h3v8h-3zM567.5,242.5h3v8h-3zM572.5,242.5h3v8h-3zM577.5,242.5h3v8h-3zM547.5,248.5h8v3h-8zM547.5,258.5h8v3h-8zM582.5,262.5h3v7h-3zM568.5,282.5h3v21h-3zM601.5,242.5h3v8h-3zM606.5,242.5h3v8h-3zM611.5,242.5h3v8h-3zM616.5,242.5h3v8h-3zM586.5,248.5h8v3h-8zM586.5,258.5h8v3h-8zM621.5,262.5h3v7h-3zM608.5,282.5h3v21h-3zM163.5,180.5h9v4h-9zM207.5,205.5h4v9h-4zM202.5,217.5h3v6h-3zM162.5,224.5h9v4h-9zM207.5,185.5h7v4h-7zM174.5,218.5h7v4h-7zM193.5,210.5h4v9h-4zM209.5,234.5h3v7h-3zM199.5,197.5h4v7h-4zM161.5,204.5h7v4h-7zM162.5,215.5h7v3h-7zM213.5,197.5h7v4h-7zM195.5,185.5h9v4h-9zM214.5,208.5h4v9h-4zM162.5,231.5h7v4h-7zM166.5,187.5h9v4h-9zM188.5,211.5h3v7h-3zM195.5,229.5h8v4h-8zM193.5,194.5h4v9h-4zM215.5,226.5h3v7h-3zM178.5,205.5h7v3h-7zM163.5,196.5h8v4h-8zM212.5,191.5h8v4h-8zM191.5,180.5h7v3h-7zM172.5,212.5h7v4h-7zM171.5,231.5h3v6h-3zM214.5,220.5h6v3h-6zM185.5,182.5h4v8h-4zM216.5,182.5h4v7h-4zM190.5,205.5h7v3h-7zM209.5,225.5h3v7h-3zM199.5,192.5h6v3h-6zM202.5,207.5h3v7h-3zM200.5,235.5h7v4h-7zM192.5,221.5h3v6h-3zM178.5,180.5h3v7h-3zM171.5,202.5h4v7h-4zM203.5,180.5h7v3h-7zM195.5,235.5h3v6h-3zM183.5,212.5h3v7h-3zM176.5,237.5h7v3h-7zM160.5,186.5h3v6h-3zM253.5,216.5h3v6h-3zM235.5,204.5h9v9h-9zM269.5,184.5h7v4h-7zM266.5,191.5h8v4h-8zM267.5,218.5h6v3h-6zM249.5,200.5h7v4h-7zM236.5,184.5h3v6h-3zM259.5,204.5h6v3h-6zM269.5,197.5h7v4h-7zM269.5,203.5h3v6h-3zM259.5,212.5h8v4h-8zM246.5,175.5h7v3h-7zM264.5,178.5h7v3h-7zM238.5,219.5h6v3h-6zM237.5,194.5h7v4h-7zM275.5,205.5h3v6h-3zM274.5,175.5h3v7h-3zM249.5,208.5h6v3h-6zM246.5,195.5h6v3h-6zM258.5,195.5h3v7h-3zM275.5,213.5h3v7h-3zM239.5,176.5h3v6h-3zM248.5,214.5h3v7h-3zM259.5,220.5h3v6h-3zM272.5,142.5h11v11h-11zM273.5,166.5h4v7h-4zM278.5,136.5h9v4h-9zM281.5,171.5h6v3h-6zM272.5,157.5h3v6h-3zM285.5,149.5h7v3h-7zM341.5,160.5h7v3h-7zM321.5,153.5h3v7h-3zM323.5,169.5h3v7h-3zM306.5,157.5h3v6h-3zM312.5,159.5h6v3h-6zM302.5,168.5h4v9h-4zM334.5,172.5h3v6h-3zM343.5,153.5h7v4h-7zM316.5,168.5h4v7h-4zM329.5,168.5h3v6h-3zM341.5,171.5h3v6h-3zM364.5,160.5h4v9h-4zM304.5,151.5h7v3h-7zM333.5,152.5h4v9h-4zM351.5,165.5h4v7h-4zM317.5,148.5h7v3h-7zM347.5,174.5h6v3h-6zM355.5,156.5h3v6h-3zM363.5,151.5h4v7h-4zM360.5,173.5h7v3h-7zM372.5,167.5h3v7h-3zM334.5,165.5h7v4h-7zM308.5,166.5h4v9h-4zM328.5,158.5h3v7h-3zM352.5,204.5h4v7h-4zM299.5,198.5h7v4h-7zM302.5,210.5h7v4h-7zM317.5,209.5h6v3h-6zM327.5,183.5h4v8h-4zM312.5,192.5h4v7h-4zM293.5,218.5h4v9h-4zM295.5,192.5h7v3h-7zM349.5,194.5h4v7h-4zM307.5,186.5h8v4h-8zM303.5,220.5h4v7h-4zM296.5,186.5h6v3h-6zM355.5,190.5h4v8h-4zM319.5,184.5h4v7h-4zM349.5,181.5h8v4h-8zM358.5,215.5h3v6h-3zM348.5,214.5h4v9h-4zM295.5,204.5h3v6h-3zM310.5,218.5h6v3h-6zM322.5,221.5h7v3h-7zM306.5,180.5h7v3h-7zM346.5,187.5h7v3h-7zM340.5,180.5h6v3h-6zM318.5,197.5h4v7h-4zM307.5,204.5h8v4h-8zM333.5,221.5h7v4h-7zM336.5,190.5h4v7h-4zM314.5,224.5h6v3h-6zM358.5,205.5h3v6h-3zM333.5,180.5h4v8h-4zM452.5,243.5h4v7h-4zM437.5,276.5h7v4h-7zM434.5,262.5h7v4h-7zM469.5,237.5h4v7h-4zM437.5,268.5h7v4h-7zM472.5,263.5h9v4h-9zM440.5,235.5h4v9h-4zM463.5,273.5h7v4h-7zM443.5,246.5h7v4h-7zM462.5,242.5h4v7h-4zM446.5,265.5h3v6h-3zM431.5,269.5h4v7h-4zM431.5,252.5h6v3h-6zM472.5,269.5h7v3h-7zM476.5,247.5h9v4h-9zM452.5,238.5h7v3h-7zM443.5,255.5h3v7h-3zM472.5,274.5h3v6h-3zM480.5,234.5h4v7h-4zM471.5,258.5h6v3h-6zM452.5,276.5h8v4h-8zM478.5,277.5h7v3h-7zM446.5,234.5h4v7h-4zM431.5,257.5h6v3h-6zM470.5,249.5h3v6h-3zM480.5,253.5h4v7h-4zM451.5,271.5h7v3h-7zM473.5,165.5h3v7h-3zM466.5,190.5h3v6h-3zM475.5,183.5h9v4h-9zM478.5,177.5h6v3h-6zM475.5,190.5h4v7h-4zM465.5,176.5h7v3h-7zM484.5,191.5h4v7h-4zM482.5,171.5h6v3h-6zM465.5,185.5h7v3h-7zM466.5,167.5h3v6h-3zM479.5,165.5h8v4h-8zM496.5,176.5h3v6h-3zM499.5,199.5h3v6h-3zM508.5,177.5h4v7h-4zM536.5,204.5h4v8h-4zM509.5,187.5h3v7h-3zM510.5,196.5h3v7h-3zM496.5,187.5h9v4h-9zM496.5,170.5h7v3h-7zM494.5,196.5h3v7h-3zM515.5,204.5h8v4h-8zM528.5,169.5h8v4h-8zM531.5,204.5h3v7h-3zM488.5,208.5h7v3h-7zM506.5,206.5h7v3h-7zM489.5,181.5h4v7h-4zM543.5,182.5h3v7h-3zM502.5,179.5h3v6h-3zM544.5,169.5h3v6h-3zM516.5,170.5h6v3h-6zM491.5,172.5h3v7h-3zM542.5,205.5h4v7h-4zM543.5,194.5h3v7h-3zM505.5,172.5h7v3h-7zM501.5,194.5h6v3h-6zM543.5,132.5h4v7h-4zM550.5,131.5h3v7h-3zM544.5,146.5h3v6h-3zM555.5,133.5h6v3h-6zM578.5,145.5h9v9h-9zM581.5,158.5h7v3h-7zM581.5,135.5h7v4h-7zM589.5,146.5h4v9h-4zM574.5,135.5h4v7h-4zM590.5,138.5h3v6h-3zM573.5,151.5h3v6h-3zM631.5,225.5h7v3h-7zM776.5,226.5h3v6h-3zM557.5,243.5h3v7h-3zM596.5,243.5h3v7h-3zM785.5,212.5h11v11h-11zM762.5,194.5h8v4h-8zM747.5,210.5h9v4h-9zM776.5,215.5h6v3h-6zM766.5,210.5h8v4h-8zM779.5,190.5h9v9h-9zM772.5,193.5h3v7h-3zM792.5,190.5h4v8h-4zM750.5,202.5h7v3h-7zM779.5,204.5h9v4h-9zM752.5,193.5h7v3h-7zM788.5,228.5h6v3h-6zM751.5,218.5h6v3h-6zM774.5,220.5h6v3h-6zM765.5,205.5h6v3h-6zM749.5,187.5h7v4h-7zM760.5,203.5h3v6h-3zM762.5,216.5h6v3h-6zM791.5,202.5h4v7h-4zM760.5,221.5h7v3h-7zM747.5,223.5h7v4h-7zM763.5,187.5h7v4h-7zM440.5,165.5h7v3h-7zM249.5,302.5h4v9h-4zM250.5,284.5h4v7h-4zM250.5,264.5h4v9h-4zM250.5,276.5h3v6h-3zM250.5,293.5h3v7h-3zM250.5,313.5h3v6h-3zM314.5,293.5h8v8h-8zM308.5,303.5h4v9h-4zM311.5,282.5h7v4h-7zM323.5,278.5h3v7h-3zM308.5,265.5h4v7h-4zM318.5,313.5h6v3h-6zM319.5,264.5h8v4h-8zM307.5,275.5h6v3h-6zM308.5,293.5h4v8h-4zM315.5,272.5h7v4h-7zM325.5,294.5h3v6h-3zM320.5,304.5h4v7h-4zM326.5,308.5h3v6h-3zM314.5,304.5h3v7h-3zM325.5,270.5h3v6h-3zM390.5,292.5h3v7h-3zM386.5,265.5h7v3h-7zM386.5,273.5h7v4h-7zM382.5,308.5h4v7h-4zM383.5,279.5h4v7h-4zM383.5,302.5h8v4h-8zM856.5,189.5h4v9h-4zM803.5,190.5h11v11h-11zM816.5,200.5h7v3h-7zM847.5,194.5h3v6h-3zM853.5,203.5h7v3h-7zM841.5,202.5h7v4h-7zM817.5,191.5h7v4h-7zM863.5,198.5h3v7h-3zM841.5,191.5h3v6h-3zM862.5,192.5h7v3h-7zM828.5,189.5h7v3h-7zM847.5,189.5h6v3h-6zM835.5,259.5h7v3h-7zM833.5,282.5h4v7h-4zM845.5,256.5h6v3h-6zM788.5,248.5h6v3h-6zM848.5,279.5h4v8h-4zM835.5,245.5h6v3h-6zM833.5,270.5h3v6h-3zM786.5,237.5h7v4h-7zM797.5,236.5h4v8h-4zM785.5,262.5h7v4h-7zM817.5,282.5h7v7h-7zM839.5,269.5h4v9h-4zM845.5,251.5h7v3h-7zM783.5,270.5h8v4h-8zM824.5,235.5h3v7h-3zM812.5,236.5h4v7h-4zM845.5,272.5h7v4h-7zM800.5,280.5h4v7h-4zM849.5,263.5h3v6h-3zM789.5,284.5h7v3h-7zM834.5,252.5h7v4h-7zM781.5,246.5h4v8h-4zM833.5,238.5h6v3h-6zM806.5,285.5h7v3h-7zM794.5,273.5h3v7h-3zM841.5,237.5h3v6h-3zM804.5,234.5h3v6h-3zM781.5,282.5h6v3h-6zM846.5,238.5h7v4h-7zM787.5,256.5h9v4h-9zM845.5,246.5h7v3h-7zM838.5,264.5h7v3h-7zM839.5,284.5h7v4h-7zM783.5,276.5h7v3h-7zM818.5,235.5h4v8h-4zM826.5,281.5h3v6h-3zM794.5,262.5h3v7h-3zM788.5,243.5h7v3h-7zM781.5,237.5h3v7h-3zM780.5,261.5h3v6h-3zM204.5,328.5h9v4h-9zM192.5,328.5h7v3h-7zM172.5,328.5h8v4h-8zM183.5,330.5h7v3h-7zM235.5,323.5h7v4h-7zM165.5,357.5h4v7h-4zM197.5,395.5h6v3h-6zM231.5,399.5h4v9h-4zM208.5,400.5h7v3h-7zM199.5,405.5h7v4h-7zM218.5,395.5h3v6h-3zM173.5,400.5h7v4h-7zM186.5,398.5h4v9h-4zM215.5,405.5h6v3h-6zM194.5,400.5h7v3h-7zM173.5,406.5h7v3h-7zM224.5,394.5h4v9h-4zM176.5,394.5h7v4h-7zM208.5,393.5h8v4h-8zM186.5,393.5h7v3h-7zM163.5,428.5h6v3h-6zM202.5,471.5h7v3h-7zM213.5,469.5h7v4h-7zM183.5,470.5h6v3h-6zM228.5,471.5h7v3h-7zM174.5,469.5h7v4h-7zM191.5,469.5h9v4h-9zM273.5,471.5h8v4h-8zM300.5,473.5h8v4h-8zM283.5,478.5h7v3h-7zM303.5,479.5h3v7h-3zM292.5,472.5h4v8h-4zM286.5,483.5h7v4h-7zM273.5,485.5h7v3h-7zM270.5,478.5h9v4h-9zM284.5,472.5h6v3h-6zM308.5,479.5h3v7h-3zM298.5,481.5h3v7h-3zM356.5,482.5h7v3h-7zM392.5,453.5h6v3h-6zM404.5,468.5h4v7h-4zM395.5,480.5h9v4h-9zM404.5,453.5h8v4h-8zM403.5,435.5h9v4h-9zM406.5,441.5h4v7h-4zM396.5,463.5h6v3h-6zM392.5,472.5h3v6h-3zM393.5,437.5h8v4h-8zM396.5,444.5h7v4h-7zM398.5,469.5h4v7h-4zM405.5,463.5h7v3h-7zM407.5,482.5h3v6h-3zM394.5,487.5h9v4h-9zM391.5,464.5h3v6h-3zM392.5,458.5h7v3h-7zM422.5,296.5h4v8h-4zM457.5,303.5h8v4h-8zM461.5,291.5h8v8h-8zM429.5,297.5h9v4h-9zM455.5,309.5h8v4h-8zM439.5,310.5h8v4h-8zM443.5,292.5h7v4h-7zM430.5,303.5h3v6h-3zM467.5,307.5h7v4h-7zM440.5,300.5h8v4h-8zM453.5,290.5h6v3h-6zM450.5,300.5h3v6h-3zM471.5,298.5h3v7h-3zM430.5,291.5h7v4h-7zM424.5,306.5h4v7h-4zM458.5,333.5h4v8h-4zM444.5,341.5h7v4h-7zM455.5,348.5h8v4h-8zM436.5,345.5h4v9h-4zM440.5,327.5h9v4h-9zM443.5,333.5h9v4h-9zM442.5,348.5h8v4h-8zM431.5,334.5h4v9h-4zM453.5,327.5h8v4h-8zM430.5,327.5h7v3h-7zM437.5,333.5h4v7h-4zM453.5,340.5h3v6h-3zM481.5,332.5h8v4h-8zM471.5,326.5h4v7h-4zM514.5,325.5h7v4h-7zM468.5,371.5h4v9h-4zM513.5,345.5h6v3h-6zM502.5,375.5h7v4h-7zM472.5,353.5h4v9h-4zM482.5,341.5h9v4h-9zM485.5,375.5h7v4h-7zM488.5,327.5h7v3h-7zM496.5,354.5h9v4h-9zM518.5,333.5h7v3h-7zM490.5,356.5h4v8h-4zM511.5,351.5h4v7h-4zM503.5,362.5h6v3h-6zM507.5,335.5h3v7h-3zM517.5,352.5h3v7h-3zM497.5,328.5h3v6h-3zM478.5,368.5h7v4h-7zM478.5,321.5h6v3h-6zM473.5,345.5h7v4h-7zM496.5,347.5h6v3h-6zM482.5,348.5h6v3h-6zM493.5,369.5h6v3h-6zM479.5,358.5h3v7h-3zM498.5,336.5h6v3h-6zM467.5,356.5h3v6h-3zM484.5,357.5h4v9h-4zM497.5,320.5h7v4h-7zM480.5,375.5h3v7h-3zM476.5,385.5h9v9h-9zM449.5,379.5h9v9h-9zM464.5,420.5h3v6h-3zM472.5,403.5h3v7h-3zM487.5,384.5h7v4h-7zM477.5,432.5h4v9h-4zM471.5,385.5h3v7h-3zM492.5,419.5h4v9h-4zM482.5,418.5h3v6h-3zM445.5,435.5h8v4h-8zM503.5,414.5h3v7h-3zM449.5,391.5h8v4h-8zM472.5,432.5h3v6h-3zM457.5,424.5h4v7h-4zM503.5,399.5h7v4h-7zM451.5,408.5h9v4h-9zM457.5,414.5h6v3h-6zM461.5,386.5h7v3h-7zM480.5,402.5h3v7h-3zM499.5,423.5h8v4h-8zM487.5,408.5h8v4h-8zM499.5,441.5h7v3h-7zM508.5,389.5h4v7h-4zM505.5,409.5h6v3h-6zM496.5,396.5h3v7h-3zM496.5,375.5h4v8h-4zM487.5,435.5h9v4h-9zM459.5,394.5h7v4h-7zM470.5,422.5h4v7h-4zM456.5,368.5h7v7h-7zM548.5,489.5h6v3h-6zM562.5,487.5h7v4h-7zM550.5,480.5h3v7h-3zM510.5,485.5h3v7h-3zM520.5,486.5h3v7h-3zM530.5,480.5h4v8h-4zM571.5,479.5h4v9h-4zM562.5,479.5h7v4h-7zM537.5,483.5h4v7h-4zM501.5,475.5h9v4h-9zM501.5,481.5h3v7h-3zM556.5,478.5h3v6h-3zM515.5,476.5h6v3h-6zM540.5,477.5h6v3h-6zM556.5,486.5h3v6h-3zM525.5,477.5h3v6h-3zM515.5,481.5h6v3h-6zM543.5,483.5h3v7h-3zM561.5,331.5h4v7h-4zM570.5,330.5h4v7h-4zM545.5,331.5h3v6h-3zM551.5,331.5h3v7h-3zM556.5,329.5h3v6h-3zM630.5,301.5h6v3h-6zM606.5,305.5h6v3h-6zM606.5,313.5h7v4h-7zM622.5,324.5h4v8h-4zM622.5,297.5h4v9h-4zM628.5,308.5h6v3h-6zM604.5,328.5h7v3h-7zM610.5,319.5h3v6h-3zM625.5,319.5h6v3h-6zM599.5,299.5h4v7h-4zM604.5,335.5h7v3h-7zM600.5,309.5h4v7h-4zM620.5,313.5h7v3h-7zM614.5,298.5h3v7h-3zM620.5,335.5h6v3h-6zM629.5,326.5h7v3h-7zM615.5,312.5h3v6h-3zM628.5,331.5h3v6h-3zM658.5,314.5h4v9h-4zM655.5,306.5h9v4h-9zM763.5,309.5h7v3h-7zM758.5,314.5h7v4h-7zM762.5,304.5h6v3h-6zM768.5,314.5h9v4h-9zM757.5,305.5h3v6h-3zM680.5,351.5h8v4h-8zM690.5,349.5h3v7h-3zM718.5,340.5h7v3h-7zM717.5,346.5h9v4h-9zM753.5,359.5h8v4h-8zM756.5,352.5h9v4h-9zM755.5,341.5h4v7h-4zM764.5,342.5h4v7h-4zM765.5,360.5h3v6h-3zM754.5,480.5h9v4h-9zM768.5,474.5h3v6h-3zM755.5,474.5h6v3h-6zM767.5,482.5h7v3h-7zM773.5,474.5h3v6h-3zM763.5,472.5h3v6h-3zM795.5,361.5h4v9h-4zM795.5,329.5h4v7h-4zM795.5,351.5h3v6h-3zM794.5,342.5h4v7h-4zM790.5,299.5h9v4h-9zM826.5,298.5h4v8h-4zM820.5,292.5h3v6h-3zM807.5,295.5h9v4h-9zM793.5,294.5h6v3h-6zM831.5,293.5h7v3h-7zM832.5,300.5h6v3h-6zM801.5,292.5h3v6h-3zM812.5,301.5h9v4h-9zM801.5,301.5h7v4h-7zM808.5,290.5h6v3h-6zM835.5,331.5h7v3h-7zM846.5,343.5h8v4h-8zM815.5,329.5h4v9h-4zM836.5,347.5h8v4h-8zM829.5,322.5h7v4h-7zM803.5,329.5h4v8h-4zM848.5,352.5h3v7h-3zM821.5,322.5h4v8h-4zM801.5,341.5h7v4h-7zM820.5,364.5h4v7h-4zM844.5,328.5h3v6h-3zM836.5,358.5h4v7h-4zM838.5,322.5h7v4h-7zM802.5,347.5h6v3h-6zM851.5,331.5h4v8h-4zM846.5,364.5h7v3h-7zM806.5,367.5h6v3h-6zM804.5,361.5h6v3h-6zM829.5,330.5h3v7h-3zM849.5,324.5h6v3h-6zM837.5,340.5h7v3h-7zM804.5,323.5h8v4h-8zM830.5,347.5h4v9h-4zM827.5,364.5h3v7h-3zM800.5,353.5h6v3h-6zM830.5,339.5h3v6h-3zM842.5,354.5h3v7h-3zM795.5,322.5h7v4h-7zM815.5,365.5h3v6h-3zM814.5,321.5h3v6h-3zM152.5,561.5h4v7h-4zM129.5,569.5h3v6h-3zM120.5,582.5h3v6h-3zM130.5,577.5h4v8h-4zM118.5,568.5h3v7h-3zM123.5,593.5h7v4h-7zM134.5,560.5h4v8h-4zM145.5,561.5h4v7h-4zM129.5,599.5h7v3h-7zM137.5,594.5h7v3h-7zM119.5,558.5h7v3h-7zM153.5,592.5h7v4h-7zM152.5,602.5h7v3h-7zM123.5,572.5h4v8h-4zM120.5,599.5h7v4h-7zM146.5,591.5h4v8h-4zM154.5,574.5h4v8h-4zM139.5,601.5h9v4h-9zM128.5,558.5h4v7h-4zM125.5,584.5h3v6h-3zM132.5,591.5h3v6h-3zM140.5,559.5h3v6h-3zM154.5,586.5h7v3h-7zM179.5,531.5h4v8h-4zM253.5,543.5h4v7h-4zM252.5,538.5h6v3h-6zM380.5,543.5h4v7h-4zM382.5,534.5h4v7h-4zM377.5,535.5h3v6h-3zM400.5,540.5h8v4h-8zM436.5,546.5h7v4h-7zM402.5,521.5h3v6h-3zM415.5,532.5h6v3h-6zM414.5,509.5h8v4h-8zM395.5,532.5h7v4h-7zM410.5,547.5h4v7h-4zM428.5,541.5h4v8h-4zM412.5,521.5h9v4h-9zM394.5,540.5h3v6h-3zM404.5,546.5h3v7h-3zM397.5,511.5h9v4h-9zM417.5,498.5h3v6h-3zM419.5,542.5h3v7h-3zM410.5,499.5h3v7h-3zM412.5,537.5h4v7h-4zM393.5,520.5h4v7h-4zM397.5,504.5h7v4h-7zM221.5,616.5h4v9h-4zM254.5,611.5h3v7h-3zM288.5,617.5h3v7h-3zM299.5,616.5h3v7h-3zM335.5,610.5h4v7h-4zM335.5,619.5h4v7h-4zM344.5,612.5h4v9h-4zM379.5,618.5h3v6h-3zM379.5,610.5h3v6h-3zM267.5,640.5h7v3h-7zM282.5,636.5h7v4h-7zM267.5,633.5h7v4h-7zM276.5,634.5h3v6h-3zM311.5,635.5h7v4h-7zM321.5,632.5h3v7h-3zM326.5,631.5h3v6h-3zM315.5,641.5h7v3h-7zM326.5,640.5h6v3h-6zM359.5,635.5h4v7h-4zM373.5,635.5h3v7h-3zM365.5,634.5h4v8h-4zM352.5,633.5h3v6h-3zM219.5,641.5h4v7h-4zM247.5,686.5h4v9h-4zM238.5,688.5h7v4h-7zM253.5,686.5h3v6h-3zM406.5,608.5h8v8h-8zM399.5,609.5h4v8h-4zM398.5,627.5h4v7h-4zM433.5,615.5h3v6h-3zM429.5,624.5h4v8h-4zM435.5,630.5h3v6h-3zM433.5,604.5h4v9h-4zM407.5,603.5h7v3h-7zM409.5,664.5h7v3h-7zM420.5,664.5h3v6h-3zM418.5,695.5h7v3h-7zM427.5,695.5h7v3h-7zM101.5,627.5h7v4h-7zM68.5,661.5h7v3h-7zM85.5,651.5h9v4h-9zM126.5,625.5h4v7h-4zM64.5,620.5h6v3h-6zM93.5,639.5h4v7h-4zM81.5,624.5h3v6h-3zM103.5,634.5h3v6h-3zM96.5,649.5h4v9h-4zM111.5,623.5h9v4h-9zM86.5,632.5h9v4h-9zM83.5,658.5h3v6h-3zM93.5,662.5h8v4h-8zM87.5,627.5h7v3h-7zM71.5,653.5h9v4h-9zM87.5,622.5h7v3h-7zM82.5,639.5h3v6h-3zM68.5,626.5h7v4h-7zM112.5,629.5h9v4h-9zM100.5,621.5h7v4h-7zM103.5,644.5h3v7h-3zM103.5,658.5h3v7h-3zM122.5,620.5h7v3h-7zM64.5,652.5h4v7h-4zM173.5,657.5h3v7h-3zM160.5,684.5h8v4h-8zM188.5,641.5h7v3h-7zM205.5,684.5h6v3h-6zM156.5,647.5h7v4h-7zM148.5,658.5h9v4h-9zM187.5,653.5h6v3h-6zM162.5,696.5h8v4h-8zM205.5,673.5h8v4h-8zM165.5,650.5h6v3h-6zM166.5,662.5h4v9h-4zM157.5,667.5h4v7h-4zM208.5,690.5h4v9h-4zM150.5,674.5h3v6h-3zM176.5,647.5h7v4h-7zM200.5,658.5h4v9h-4zM202.5,640.5h3v7h-3zM163.5,642.5h7v3h-7zM149.5,644.5h4v9h-4zM174.5,689.5h7v4h-7zM203.5,691.5h3v7h-3zM160.5,654.5h3v7h-3zM161.5,677.5h8v4h-8zM194.5,690.5h4v8h-4zM157.5,690.5h7v4h-7zM151.5,689.5h4v9h-4zM181.5,656.5h4v8h-4zM209.5,642.5h3v6h-3zM178.5,641.5h8v4h-8zM143.5,645.5h4v9h-4zM209.5,655.5h4v9h-4zM196.5,652.5h8v4h-8zM188.5,647.5h6v3h-6zM166.5,704.5h7v4h-7zM176.5,705.5h7v4h-7zM62.5,719.5h7v3h-7zM25.5,759.5h7v3h-7zM20.5,759.5h3v6h-3zM126.5,765.5h7v3h-7zM126.5,754.5h7v4h-7zM126.5,760.5h6v3h-6zM112.5,820.5h6v3h-6zM119.5,808.5h3v6h-3zM120.5,817.5h3v6h-3zM104.5,818.5h3v6h-3zM141.5,823.5h7v4h-7zM139.5,829.5h6v3h-6zM153.5,806.5h7v4h-7zM163.5,805.5h3v7h-3zM196.5,757.5h4v8h-4zM206.5,795.5h8v4h-8zM177.5,754.5h3v6h-3zM217.5,741.5h8v4h-8zM201.5,733.5h6v3h-6zM215.5,784.5h4v9h-4zM226.5,772.5h9v4h-9zM180.5,776.5h4v7h-4zM182.5,731.5h4v8h-4zM230.5,795.5h4v7h-4zM187.5,761.5h7v3h-7zM173.5,730.5h7v3h-7zM177.5,801.5h7v3h-7zM230.5,778.5h7v3h-7zM252.5,734.5h11v11h-11zM199.5,803.5h7v3h-7zM223.5,730.5h7v4h-7zM184.5,795.5h6v3h-6zM159.5,748.5h8v4h-8zM254.5,768.5h3v7h-3zM208.5,751.5h4v9h-4zM159.5,764.5h7v4h-7zM169.5,775.5h3v6h-3zM219.5,799.5h7v3h-7zM171.5,747.5h9v4h-9zM174.5,769.5h9v4h-9zM234.5,786.5h4v7h-4zM168.5,756.5h7v4h-7zM239.5,775.5h8v4h-8zM214.5,736.5h7v3h-7zM228.5,757.5h4v9h-4zM214.5,770.5h3v6h-3zM187.5,754.5h7v4h-7zM189.5,804.5h8v4h-8zM193.5,795.5h7v4h-7zM190.5,745.5h3v6h-3zM170.5,800.5h3v7h-3zM181.5,742.5h6v3h-6zM165.5,736.5h8v4h-8zM260.5,787.5h3v7h-3zM160.5,771.5h7v4h-7zM174.5,788.5h7v4h-7zM238.5,748.5h7v3h-7zM214.5,757.5h6v3h-6zM245.5,800.5h8v4h-8zM248.5,749.5h7v3h-7zM244.5,729.5h7v3h-7zM256.5,798.5h7v4h-7zM221.5,774.5h3v7h-3zM208.5,804.5h7v3h-7zM261.5,747.5h3v6h-3zM228.5,747.5h7v3h-7zM224.5,785.5h4v7h-4zM236.5,799.5h6v3h-6zM222.5,754.5h3v6h-3zM174.5,795.5h7v3h-7zM220.5,767.5h6v3h-6zM172.5,762.5h8v4h-8zM208.5,742.5h4v7h-4zM162.5,743.5h7v3h-7zM213.5,730.5h7v4h-7zM296.5,743.5h3v6h-3zM329.5,747.5h7v3h-7zM313.5,740.5h4v8h-4zM311.5,755.5h8v4h-8zM294.5,732.5h4v9h-4zM347.5,755.5h7v4h-7zM321.5,745.5h4v8h-4zM333.5,755.5h7v4h-7zM302.5,739.5h4v9h-4zM330.5,738.5h7v4h-7zM302.5,760.5h7v4h-7zM340.5,732.5h4v8h-4zM348.5,729.5h4v9h-4zM298.5,753.5h9v4h-9zM326.5,727.5h8v8h-8zM307.5,733.5h8v4h-8zM349.5,741.5h4v7h-4zM317.5,729.5h4v7h-4zM342.5,761.5h6v3h-6zM315.5,761.5h6v3h-6zM297.5,726.5h9v4h-9zM428.5,738.5h7v3h-7zM378.5,708.5h3v7h-3zM413.5,719.5h4v9h-4zM420.5,714.5h4v7h-4zM405.5,741.5h6v3h-6zM380.5,735.5h9v9h-9zM426.5,726.5h7v4h-7zM389.5,708.5h7v3h-7zM419.5,705.5h3v6h-3zM439.5,721.5h4v8h-4zM410.5,735.5h7v4h-7zM385.5,725.5h6v3h-6zM411.5,669.5h7v3h-7zM433.5,702.5h7v3h-7zM425.5,702.5h3v6h-3zM433.5,715.5h6v3h-6zM431.5,707.5h7v4h-7zM429.5,721.5h7v3h-7zM437.5,695.5h6v3h-6zM421.5,725.5h3v6h-3zM426.5,711.5h3v7h-3zM840.5,728.5h4v8h-4zM841.5,706.5h3v7h-3zM840.5,741.5h3v7h-3zM839.5,715.5h4v8h-4zM901.5,752.5h3v7h-3zM871.5,776.5h3v6h-3zM940.5,669.5h3v7h-3zM897.5,688.5h3v6h-3zM943.5,678.5h3v7h-3zM924.5,688.5h3v6h-3zM901.5,668.5h8v4h-8zM932.5,662.5h4v7h-4zM910.5,695.5h6v3h-6zM908.5,689.5h7v3h-7zM930.5,674.5h4v7h-4zM893.5,668.5h4v9h-4zM929.5,685.5h8v4h-8zM937.5,693.5h9v4h-9zM901.5,678.5h3v7h-3zM892.5,680.5h3v7h-3zM920.5,696.5h6v3h-6zM945.5,661.5h4v9h-4zM919.5,683.5h3v6h-3zM939.5,687.5h7v4h-7zM977.5,717.5h8v4h-8zM962.5,743.5h7v3h-7zM990.5,721.5h3v6h-3zM967.5,732.5h3v6h-3zM978.5,723.5h6v3h-6zM956.5,732.5h4v8h-4zM985.5,707.5h3v6h-3zM962.5,734.5h3v6h-3zM990.5,707.5h4v8h-4zM980.5,729.5h9v4h-9zM976.5,703.5h7v3h-7zM976.5,708.5h4v7h-4zM1011.5,693.5h6v3h-6zM1031.5,695.5h6v3h-6zM1008.5,702.5h7v4h-7zM1029.5,707.5h6v3h-6zM1032.5,727.5h6v3h-6zM1001.5,708.5h3v7h-3zM1019.5,692.5h8v4h-8zM1031.5,715.5h3v7h-3zM1001.5,692.5h8v4h-8zM1006.5,726.5h6v3h-6zM1003.5,718.5h3v6h-3zM1019.5,703.5h7v3h-7zM1016.5,725.5h3v6h-3zM1029.5,700.5h9v4h-9zM1024.5,725.5h3v6h-3zM1034.5,690.5h6v3h-6zM1076.5,708.5h4v8h-4zM1087.5,702.5h3v6h-3zM1077.5,723.5h7v4h-7zM1080.5,731.5h8v4h-8zM1074.5,731.5h4v8h-4zM1092.5,699.5h4v7h-4zM1076.5,702.5h7v4h-7zM1079.5,718.5h6v3h-6zM1090.5,736.5h6v3h-6zM1090.5,731.5h6v3h-6zM1130.5,672.5h8v4h-8zM1113.5,661.5h6v3h-6zM1129.5,661.5h9v4h-9zM1105.5,661.5h4v9h-4zM1116.5,693.5h7v4h-7zM1104.5,685.5h4v9h-4zM1128.5,682.5h7v4h-7zM1121.5,668.5h7v3h-7zM1129.5,692.5h3v6h-3zM1135.5,690.5h4v8h-4zM1113.5,668.5h6v3h-6zM1133.5,667.5h6v3h-6zM1104.5,676.5h3v6h-3zM1156.5,711.5h3v6h-3zM1150.5,725.5h7v4h-7zM1149.5,695.5h8v4h-8zM1149.5,705.5h3v7h-3zM1157.5,701.5h3v6h-3zM1151.5,688.5h7v3h-7zM1149.5,719.5h7v3h-7zM1039.5,757.5h7v4h-7zM1029.5,758.5h7v4h-7zM971.5,779.5h7v3h-7zM981.5,777.5h3v6h-3zM1171.5,767.5h9v4h-9zM1151.5,767.5h6v3h-6zM1184.5,766.5h9v4h-9zM1161.5,767.5h7v4h-7zM855.5,551.5h3v6h-3zM849.5,562.5h8v4h-8zM843.5,550.5h6v3h-6zM843.5,555.5h9v4h-9zM842.5,561.5h3v6h-3zM891.5,577.5h3v6h-3zM889.5,586.5h3v6h-3zM875.5,576.5h7v3h-7zM898.5,581.5h4v8h-4zM872.5,586.5h4v7h-4zM878.5,581.5h3v7h-3zM883.5,586.5h4v7h-4zM884.5,574.5h3v7h-3zM896.5,575.5h7v3h-7zM986.5,627.5h7v4h-7zM1222.5,670.5h4v9h-4zM1214.5,680.5h3v6h-3zM1201.5,670.5h7v3h-7zM1218.5,644.5h3v6h-3zM1226.5,651.5h8v4h-8zM1206.5,643.5h6v3h-6zM1209.5,676.5h3v7h-3zM1214.5,671.5h3v6h-3zM1219.5,660.5h3v6h-3zM1219.5,681.5h7v4h-7zM1200.5,676.5h4v7h-4zM1216.5,653.5h7v4h-7zM927.5,712.5h7v4h-7zM1105.5,736.5h3v6h-3zM1080.5,737.5h8v4h-8zM1099.5,734.5h4v7h-4zM1237.5,784.5h7v4h-7zM1236.5,778.5h8v4h-8zM1235.5,770.5h6v3h-6zM1247.5,767.5h3v7h-3zM1250.5,776.5h3v7h-3zM1235.5,796.5h3v6h-3zM1249.5,753.5h3v7h-3zM1246.5,785.5h6v3h-6zM1067.5,749.5h6v3h-6z" fill="none" stroke="#dadada" stroke-width="1"/><path d="M407,232.5h2v2h-2zM413,232.5h2v2h-2zM407,241.5h2v2h-2zM413,241.5h2v2h-2zM425,233.5h2v2h-2zM432,233.5h2v2h-2zM425,244.5h2v2h-2zM432,244.5h2v2h-2zM468,202.5h2v2h-2zM483,202.5h2v2h-2zM468,225.5h2v2h-2zM483,225.5h2v2h-2zM525,223.5h2v2h-2zM533,223.5h2v2h-2zM525,230.5h2v2h-2zM533,230.5h2v2h-2zM553,142.5h2v2h-2zM563,142.5h2v2h-2zM553,149.5h2v2h-2zM563,149.5h2v2h-2zM567,198.5h2v2h-2zM578,198.5h2v2h-2zM567,206.5h2v2h-2zM578,206.5h2v2h-2zM567,216.5h2v2h-2zM578,216.5h2v2h-2zM567,225.5h2v2h-2zM578,225.5h2v2h-2zM601,163.5h2v2h-2zM615,163.5h2v2h-2zM601,174.5h2v2h-2zM615,174.5h2v2h-2zM629,173.5h2v2h-2zM645,173.5h2v2h-2zM629,188.5h2v2h-2zM645,188.5h2v2h-2zM657,173.5h2v2h-2zM673,173.5h2v2h-2zM657,188.5h2v2h-2zM673,188.5h2v2h-2zM636,202.5h2v2h-2zM644,202.5h2v2h-2zM636,211.5h2v2h-2zM644,211.5h2v2h-2zM653,202.5h2v2h-2zM661,202.5h2v2h-2zM653,211.5h2v2h-2zM661,211.5h2v2h-2zM828,195.5h2v2h-2zM835,195.5h2v2h-2zM828,204.5h2v2h-2zM835,204.5h2v2h-2zM282,157.5h2v2h-2zM290,157.5h2v2h-2zM282,166.5h2v2h-2zM290,166.5h2v2h-2zM292,135.5h2v2h-2zM303,135.5h2v2h-2zM292,143.5h2v2h-2zM303,143.5h2v2h-2zM267,227.5h2v2h-2zM273,227.5h2v2h-2zM267,232.5h2v2h-2zM273,232.5h2v2h-2zM380,148.5h2v2h-2zM385,148.5h2v2h-2zM380,160.5h2v2h-2zM385,160.5h2v2h-2zM419,605.5h2v2h-2zM427,605.5h2v2h-2zM419,613.5h2v2h-2zM427,613.5h2v2h-2zM67,633.5h2v2h-2zM74,633.5h2v2h-2zM67,646.5h2v2h-2zM74,646.5h2v2h-2zM74,683.5h2v2h-2zM86,683.5h2v2h-2zM74,691.5h2v2h-2zM86,691.5h2v2h-2zM105,805.5h2v2h-2zM112,805.5h2v2h-2zM105,813.5h2v2h-2zM112,813.5h2v2h-2zM197,743.5h2v2h-2zM203,743.5h2v2h-2zM197,748.5h2v2h-2zM203,748.5h2v2h-2zM239,735.5h2v2h-2zM245,735.5h2v2h-2zM239,743.5h2v2h-2zM245,743.5h2v2h-2zM239,756.5h2v2h-2zM245,756.5h2v2h-2zM239,765.5h2v2h-2zM245,765.5h2v2h-2zM164,787.5h2v2h-2zM168,787.5h2v2h-2zM164,794.5h2v2h-2zM168,794.5h2v2h-2zM243,785.5h2v2h-2zM250,785.5h2v2h-2zM243,793.5h2v2h-2zM250,793.5h2v2h-2zM268,726.5h2v2h-2zM276,726.5h2v2h-2zM268,734.5h2v2h-2zM276,734.5h2v2h-2zM916,668.5h2v2h-2zM921,668.5h2v2h-2zM916,676.5h2v2h-2zM921,676.5h2v2h-2zM978,736.5h2v2h-2zM986,736.5h2v2h-2zM978,744.5h2v2h-2zM986,744.5h2v2h-2zM1051,759.5h2v2h-2zM1058,759.5h2v2h-2zM1051,765.5h2v2h-2zM1058,765.5h2v2h-2zM1037,769.5h2v2h-2zM1045,769.5h2v2h-2zM1037,776.5h2v2h-2zM1045,776.5h2v2h-2zM1051,780.5h2v2h-2zM1067,780.5h2v2h-2zM1051,792.5h2v2h-2zM1067,792.5h2v2h-2zM1202,651.5h2v2h-2zM1209,651.5h2v2h-2zM1202,662.5h2v2h-2zM1209,662.5h2v2h-2zM1236,753.5h2v2h-2zM1244,753.5h2v2h-2zM1236,762.5h2v2h-2zM1244,762.5h2v2h-2zM1242,791.5h2v2h-2zM1249,791.5h2v2h-2zM1242,799.5h2v2h-2zM1249,799.5h2v2h-2zM205.5,540h1v46h-1zM278.5,543h1v47h-1zM317.5,543h1v47h-1zM357.5,543h1v47h-1zM280.5,662h1v26h-1zM312.5,662h1v26h-1zM345.5,662h1v26h-1zM276,499.5h29v1h-29zM316,499.5h29v1h-29zM357,499.5h29v1h-29zM276,521.5h29v1h-29zM316,521.5h29v1h-29zM357,521.5h29v1h-29zM188,514.5h29v1h-29zM167.5,499h1v27h-1zM245.5,664h1v15h-1zM222,656.5h14v1h-14zM284,234.5h30v1h-30zM208,264.5h29v1h-29zM164,307.5h30v1h-30zM545,233.5h21v1h-21zM715,208.5h25v1h-25zM670,215.5h15v1h-15zM694.5,169h1v26h-1zM726.5,158h2v24h-2zM536,317.5h30v1h-30zM671,314.5h31v1h-31zM721,314.5h29v1h-29zM810,386.5h16v1h-16zM815,410.5h29v2h-29zM257,756.5h29v2h-29zM264,777.5h24v1h-24zM1072,678.5h29v1h-29zM1115,727.5h27v1h-27zM1114,725.5h28v2h-28zM628,233.5h20v1h-20zM749,233.5h22v1h-22zM417,408h2v1h-2zM421,408h2v1h-2zM390,348h2v1h-2zM391,348h2v1h-2zM417,413h2v1h-2zM421,413h2v1h-2zM390,353h2v1h-2zM391,353h2v1h-2zM417,418h2v1h-2zM421,418h2v1h-2zM390,358h2v1h-2zM391,358h2v1h-2zM417,424h2v1h-2zM421,424h2v1h-2zM390,364h2v1h-2zM391,364h2v1h-2zM417,429h2v1h-2zM421,429h2v1h-2zM390,369h2v1h-2zM391,369h2v1h-2zM642,228h0v2h0zM642,231h0v2h0zM647,228h0v2h0zM647,231h0v2h0zM652,228h0v2h0zM652,231h0v2h0zM657,228h0v2h0zM657,231h0v2h0zM627,233h2v0h-2zM630,233h2v0h-2zM627,243h2v0h-2zM630,243h2v0h-2zM630,250h0v2h0zM630,252h0v2h0zM662,247h0v2h0zM662,249h0v2h0zM647,267h2v2h-2zM647,297h2v2h-2zM680,228h0v2h0zM680,231h0v2h0zM686,228h0v2h0zM686,231h0v2h0zM690,228h0v2h0zM690,231h0v2h0zM696,228h0v2h0zM696,231h0v2h0zM666,233h2v0h-2zM669,233h2v0h-2zM666,243h2v0h-2zM669,243h2v0h-2zM668,250h0v2h0zM668,252h0v2h0zM700,247h0v2h0zM700,249h0v2h0zM686,267h2v2h-2zM686,297h2v2h-2zM719,228h0v2h0zM719,231h0v2h0zM724,228h0v2h0zM724,231h0v2h0zM729,228h0v2h0zM729,231h0v2h0zM734,228h0v2h0zM734,231h0v2h0zM704,233h2v0h-2zM707,233h2v0h-2zM704,243h2v0h-2zM707,243h2v0h-2zM707,250h0v2h0zM707,252h0v2h0zM739,247h0v2h0zM739,249h0v2h0zM725,267h2v2h-2zM725,297h2v2h-2zM758,228h0v2h0zM758,231h0v2h0zM763,228h0v2h0zM763,231h0v2h0zM768,228h0v2h0zM768,231h0v2h0zM773,228h0v2h0zM773,231h0v2h0zM743,233h2v0h-2zM746,233h2v0h-2zM743,243h2v0h-2zM746,243h2v0h-2zM746,250h0v2h0zM746,252h0v2h0zM778,247h0v2h0zM778,249h0v2h0zM763,267h2v2h-2zM763,297h2v2h-2zM564,244h0v2h0zM564,247h0v2h0zM569,244h0v2h0zM569,247h0v2h0zM574,244h0v2h0zM574,247h0v2h0zM579,244h0v2h0zM579,247h0v2h0zM549,250h2v0h-2zM552,250h2v0h-2zM549,260h2v0h-2zM552,260h2v0h-2zM584,264h0v2h0zM584,266h0v2h0zM569,283h2v2h-2zM569,301h2v2h-2zM603,244h0v2h0zM603,247h0v2h0zM608,244h0v2h0zM608,247h0v2h0zM613,244h0v2h0zM613,247h0v2h0zM618,244h0v2h0zM618,247h0v2h0zM588,250h2v0h-2zM591,250h2v0h-2zM588,260h2v0h-2zM591,260h2v0h-2zM623,264h0v2h0zM623,266h0v2h0zM609,283h2v2h-2zM609,301h2v2h-2zM165,182h2v1h-2zM169,182h2v1h-2zM209,207h1v2h-1zM209,211h1v2h-1zM204,219h0v2h0zM204,220h0v2h0zM164,226h2v1h-2zM168,226h2v1h-2zM209,187h2v1h-2zM211,187h2v1h-2zM176,220h2v1h-2zM178,220h2v1h-2zM195,212h1v2h-1zM195,216h1v2h-1zM211,236h0v2h0zM211,238h0v2h0zM201,199h1v2h-1zM201,201h1v2h-1zM163,206h2v1h-2zM165,206h2v1h-2zM164,217h2v0h-2zM166,217h2v0h-2zM215,199h2v1h-2zM217,199h2v1h-2zM197,187h2v1h-2zM201,187h2v1h-2zM216,210h1v2h-1zM216,214h1v2h-1zM164,233h2v1h-2zM166,233h2v1h-2zM168,189h2v1h-2zM172,189h2v1h-2zM190,213h0v2h0zM190,215h0v2h0zM197,231h2v1h-2zM200,231h2v1h-2zM195,196h1v2h-1zM195,200h1v2h-1zM217,228h0v2h0zM217,230h0v2h0zM180,207h2v0h-2zM182,207h2v0h-2zM165,198h2v1h-2zM168,198h2v1h-2zM214,193h2v1h-2zM217,193h2v1h-2zM193,182h2v0h-2zM195,182h2v0h-2zM174,214h2v1h-2zM176,214h2v1h-2zM173,233h0v2h0zM173,234h0v2h0zM216,222h2v0h-2zM217,222h2v0h-2zM187,184h1v2h-1zM187,187h1v2h-1zM218,184h1v2h-1zM218,186h1v2h-1zM192,207h2v0h-2zM194,207h2v0h-2zM211,227h0v2h0zM211,229h0v2h0zM201,194h2v0h-2zM202,194h2v0h-2zM204,209h0v2h0zM204,211h0v2h0zM202,237h2v1h-2zM204,237h2v1h-2zM194,223h0v2h0zM194,224h0v2h0zM180,182h0v2h0zM180,184h0v2h0zM173,204h1v2h-1zM173,206h1v2h-1zM205,182h2v0h-2zM207,182h2v0h-2zM197,237h0v2h0zM197,238h0v2h0zM185,214h0v2h0zM185,216h0v2h0zM178,239h2v0h-2zM180,239h2v0h-2zM162,188h0v2h0zM162,189h0v2h0zM255,218h0v2h0zM255,219h0v2h0zM237,205.5h2v2h-2zM241,205.5h2v2h-2zM237,210.5h2v2h-2zM241,210.5h2v2h-2zM271,186h2v1h-2zM273,186h2v1h-2zM268,193h2v1h-2zM271,193h2v1h-2zM269,220h2v0h-2zM270,220h2v0h-2zM251,202h2v1h-2zM253,202h2v1h-2zM238,186h0v2h0zM238,187h0v2h0zM261,206h2v0h-2zM262,206h2v0h-2zM271,199h2v1h-2zM273,199h2v1h-2zM271,205h0v2h0zM271,206h0v2h0zM261,214h2v1h-2zM264,214h2v1h-2zM248,177h2v0h-2zM250,177h2v0h-2zM266,180h2v0h-2zM268,180h2v0h-2zM240,221h2v0h-2zM241,221h2v0h-2zM239,196h2v1h-2zM241,196h2v1h-2zM277,207h0v2h0zM277,208h0v2h0zM276,177h0v2h0zM276,179h0v2h0zM251,210h2v0h-2zM252,210h2v0h-2zM248,197h2v0h-2zM249,197h2v0h-2zM260,197h0v2h0zM260,199h0v2h0zM277,215h0v2h0zM277,217h0v2h0zM241,178h0v2h0zM241,179h0v2h0zM250,216h0v2h0zM250,218h0v2h0zM261,222h0v2h0zM261,223h0v2h0zM274,143.5h2v2h-2zM280,143.5h2v2h-2zM274,150.5h2v2h-2zM280,150.5h2v2h-2zM275,168h1v2h-1zM275,170h1v2h-1zM280,138h2v1h-2zM284,138h2v1h-2zM283,173h2v0h-2zM284,173h2v0h-2zM274,159h0v2h0zM274,160h0v2h0zM287,151h2v0h-2zM289,151h2v0h-2zM343,162h2v0h-2zM345,162h2v0h-2zM323,155h0v2h0zM323,157h0v2h0zM325,171h0v2h0zM325,173h0v2h0zM308,159h0v2h0zM308,160h0v2h0zM314,161h2v0h-2zM315,161h2v0h-2zM304,170h1v2h-1zM304,174h1v2h-1zM336,174h0v2h0zM336,175h0v2h0zM345,155h2v1h-2zM347,155h2v1h-2zM318,170h1v2h-1zM318,172h1v2h-1zM331,170h0v2h0zM331,171h0v2h0zM343,173h0v2h0zM343,174h0v2h0zM366,162h1v2h-1zM366,166h1v2h-1zM306,153h2v0h-2zM308,153h2v0h-2zM335,154h1v2h-1zM335,158h1v2h-1zM353,167h1v2h-1zM353,169h1v2h-1zM319,150h2v0h-2zM321,150h2v0h-2zM349,176h2v0h-2zM350,176h2v0h-2zM357,158h0v2h0zM357,159h0v2h0zM365,153h1v2h-1zM365,155h1v2h-1zM362,175h2v0h-2zM364,175h2v0h-2zM374,169h0v2h0zM374,171h0v2h0zM336,167h2v1h-2zM338,167h2v1h-2zM310,168h1v2h-1zM310,172h1v2h-1zM330,160h0v2h0zM330,162h0v2h0zM354,206h1v2h-1zM354,208h1v2h-1zM301,200h2v1h-2zM303,200h2v1h-2zM304,212h2v1h-2zM306,212h2v1h-2zM319,211h2v0h-2zM320,211h2v0h-2zM329,185h1v2h-1zM329,188h1v2h-1zM314,194h1v2h-1zM314,196h1v2h-1zM295,220h1v2h-1zM295,224h1v2h-1zM297,194h2v0h-2zM299,194h2v0h-2zM351,196h1v2h-1zM351,198h1v2h-1zM309,188h2v1h-2zM312,188h2v1h-2zM305,222h1v2h-1zM305,224h1v2h-1zM298,188h2v0h-2zM299,188h2v0h-2zM357,192h1v2h-1zM357,195h1v2h-1zM321,186h1v2h-1zM321,188h1v2h-1zM351,183h2v1h-2zM354,183h2v1h-2zM360,217h0v2h0zM360,218h0v2h0zM350,216h1v2h-1zM350,220h1v2h-1zM297,206h0v2h0zM297,207h0v2h0zM312,220h2v0h-2zM313,220h2v0h-2zM324,223h2v0h-2zM326,223h2v0h-2zM308,182h2v0h-2zM310,182h2v0h-2zM348,189h2v0h-2zM350,189h2v0h-2zM342,182h2v0h-2zM343,182h2v0h-2zM320,199h1v2h-1zM320,201h1v2h-1zM309,206h2v1h-2zM312,206h2v1h-2zM335,223h2v1h-2zM337,223h2v1h-2zM338,192h1v2h-1zM338,194h1v2h-1zM316,226h2v0h-2zM317,226h2v0h-2zM360,207h0v2h0zM360,208h0v2h0zM335,182h1v2h-1zM335,185h1v2h-1zM454,245h1v2h-1zM454,247h1v2h-1zM439,278h2v1h-2zM441,278h2v1h-2zM436,264h2v1h-2zM438,264h2v1h-2zM471,239h1v2h-1zM471,241h1v2h-1zM439,270h2v1h-2zM441,270h2v1h-2zM474,265h2v1h-2zM478,265h2v1h-2zM442,237h1v2h-1zM442,241h1v2h-1zM465,275h2v1h-2zM467,275h2v1h-2zM445,248h2v1h-2zM447,248h2v1h-2zM464,244h1v2h-1zM464,246h1v2h-1zM448,267h0v2h0zM448,268h0v2h0zM433,271h1v2h-1zM433,273h1v2h-1zM433,254h2v0h-2zM434,254h2v0h-2zM474,271h2v0h-2zM476,271h2v0h-2zM478,249h2v1h-2zM482,249h2v1h-2zM454,240h2v0h-2zM456,240h2v0h-2zM445,257h0v2h0zM445,259h0v2h0zM474,276h0v2h0zM474,277h0v2h0zM482,236h1v2h-1zM482,238h1v2h-1zM473,260h2v0h-2zM474,260h2v0h-2zM454,278h2v1h-2zM457,278h2v1h-2zM480,279h2v0h-2zM482,279h2v0h-2zM448,236h1v2h-1zM448,238h1v2h-1zM433,259h2v0h-2zM434,259h2v0h-2zM472,251h0v2h0zM472,252h0v2h0zM482,255h1v2h-1zM482,257h1v2h-1zM453,273h2v0h-2zM455,273h2v0h-2zM475,167h0v2h0zM475,169h0v2h0zM468,192h0v2h0zM468,193h0v2h0zM477,185h2v1h-2zM481,185h2v1h-2zM480,179h2v0h-2zM481,179h2v0h-2zM477,192h1v2h-1zM477,194h1v2h-1zM467,178h2v0h-2zM469,178h2v0h-2zM486,193h1v2h-1zM486,195h1v2h-1zM484,173h2v0h-2zM485,173h2v0h-2zM467,187h2v0h-2zM469,187h2v0h-2zM468,169h0v2h0zM468,170h0v2h0zM481,167h2v1h-2zM484,167h2v1h-2zM498,178h0v2h0zM498,179h0v2h0zM501,201h0v2h0zM501,202h0v2h0zM510,179h1v2h-1zM510,181h1v2h-1zM538,206h1v2h-1zM538,209h1v2h-1zM511,189h0v2h0zM511,191h0v2h0zM512,198h0v2h0zM512,200h0v2h0zM498,189h2v1h-2zM502,189h2v1h-2zM498,172h2v0h-2zM500,172h2v0h-2zM496,198h0v2h0zM496,200h0v2h0zM517,206h2v1h-2zM520,206h2v1h-2zM530,171h2v1h-2zM533,171h2v1h-2zM533,206h0v2h0zM533,208h0v2h0zM490,210h2v0h-2zM492,210h2v0h-2zM508,208h2v0h-2zM510,208h2v0h-2zM491,183h1v2h-1zM491,185h1v2h-1zM545,184h0v2h0zM545,186h0v2h0zM504,181h0v2h0zM504,182h0v2h0zM546,171h0v2h0zM546,172h0v2h0zM518,172h2v0h-2zM519,172h2v0h-2zM493,174h0v2h0zM493,176h0v2h0zM544,207h1v2h-1zM544,209h1v2h-1zM545,196h0v2h0zM545,198h0v2h0zM507,174h2v0h-2zM509,174h2v0h-2zM503,196h2v0h-2zM504,196h2v0h-2zM545,134h1v2h-1zM545,136h1v2h-1zM552,133h0v2h0zM552,135h0v2h0zM546,148h0v2h0zM546,149h0v2h0zM557,135h2v0h-2zM558,135h2v0h-2zM580,146.5h2v2h-2zM584,146.5h2v2h-2zM580,151.5h2v2h-2zM584,151.5h2v2h-2zM583,160h2v0h-2zM585,160h2v0h-2zM583,137h2v1h-2zM585,137h2v1h-2zM591,148h1v2h-1zM591,152h1v2h-1zM576,137h1v2h-1zM576,139h1v2h-1zM592,140h0v2h0zM592,141h0v2h0zM575,153h0v2h0zM575,154h0v2h0zM633,227h2v0h-2zM635,227h2v0h-2zM778,228h0v2h0zM778,229h0v2h0zM559,245h0v2h0zM559,247h0v2h0zM598,245h0v2h0zM598,247h0v2h0zM787,213.5h2v2h-2zM793,213.5h2v2h-2zM787,220.5h2v2h-2zM793,220.5h2v2h-2zM764,196h2v1h-2zM767,196h2v1h-2zM749,212h2v1h-2zM753,212h2v1h-2zM778,217h2v0h-2zM779,217h2v0h-2zM768,212h2v1h-2zM771,212h2v1h-2zM781,191.5h2v2h-2zM785,191.5h2v2h-2zM781,196.5h2v2h-2zM785,196.5h2v2h-2zM774,195h0v2h0zM774,197h0v2h0zM794,192h1v2h-1zM794,195h1v2h-1zM752,204h2v0h-2zM754,204h2v0h-2zM781,206h2v1h-2zM785,206h2v1h-2zM754,195h2v0h-2zM756,195h2v0h-2zM790,230h2v0h-2zM791,230h2v0h-2zM753,220h2v0h-2zM754,220h2v0h-2zM776,222h2v0h-2zM777,222h2v0h-2zM767,207h2v0h-2zM768,207h2v0h-2zM751,189h2v1h-2zM753,189h2v1h-2zM762,205h0v2h0zM762,206h0v2h0zM764,218h2v0h-2zM765,218h2v0h-2zM793,204h1v2h-1zM793,206h1v2h-1zM762,223h2v0h-2zM764,223h2v0h-2zM749,225h2v1h-2zM751,225h2v1h-2zM765,189h2v1h-2zM767,189h2v1h-2zM442,167h2v0h-2zM444,167h2v0h-2zM251,304h1v2h-1zM251,308h1v2h-1zM252,286h1v2h-1zM252,288h1v2h-1zM252,266h1v2h-1zM252,270h1v2h-1zM252,278h0v2h0zM252,279h0v2h0zM252,295h0v2h0zM252,297h0v2h0zM252,315h0v2h0zM252,316h0v2h0zM316,294.5h2v2h-2zM319,294.5h2v2h-2zM316,298.5h2v2h-2zM319,298.5h2v2h-2zM310,305h1v2h-1zM310,309h1v2h-1zM313,284h2v1h-2zM315,284h2v1h-2zM325,280h0v2h0zM325,282h0v2h0zM310,267h1v2h-1zM310,269h1v2h-1zM320,315h2v0h-2zM321,315h2v0h-2zM321,266h2v1h-2zM324,266h2v1h-2zM309,277h2v0h-2zM310,277h2v0h-2zM310,295h1v2h-1zM310,298h1v2h-1zM317,274h2v1h-2zM319,274h2v1h-2zM327,296h0v2h0zM327,297h0v2h0zM322,306h1v2h-1zM322,308h1v2h-1zM328,310h0v2h0zM328,311h0v2h0zM316,306h0v2h0zM316,308h0v2h0zM327,272h0v2h0zM327,273h0v2h0zM392,294h0v2h0zM392,296h0v2h0zM388,267h2v0h-2zM390,267h2v0h-2zM388,275h2v1h-2zM390,275h2v1h-2zM384,310h1v2h-1zM384,312h1v2h-1zM385,281h1v2h-1zM385,283h1v2h-1zM385,304h2v1h-2zM388,304h2v1h-2zM858,191h1v2h-1zM858,195h1v2h-1zM805,191.5h2v2h-2zM811,191.5h2v2h-2zM805,198.5h2v2h-2zM811,198.5h2v2h-2zM818,202h2v0h-2zM820,202h2v0h-2zM849,196h0v2h0zM849,197h0v2h0zM855,205h2v0h-2zM857,205h2v0h-2zM843,204h2v1h-2zM845,204h2v1h-2zM819,193h2v1h-2zM821,193h2v1h-2zM865,200h0v2h0zM865,202h0v2h0zM843,193h0v2h0zM843,194h0v2h0zM864,194h2v0h-2zM866,194h2v0h-2zM830,191h2v0h-2zM832,191h2v0h-2zM849,191h2v0h-2zM850,191h2v0h-2zM837,261h2v0h-2zM839,261h2v0h-2zM835,284h1v2h-1zM835,286h1v2h-1zM847,258h2v0h-2zM848,258h2v0h-2zM790,250h2v0h-2zM791,250h2v0h-2zM850,281h1v2h-1zM850,284h1v2h-1zM837,247h2v0h-2zM838,247h2v0h-2zM835,272h0v2h0zM835,273h0v2h0zM788,239h2v1h-2zM790,239h2v1h-2zM799,238h1v2h-1zM799,241h1v2h-1zM787,264h2v1h-2zM789,264h2v1h-2zM819,283.5h2v2h-2zM821,283.5h2v2h-2zM819,286.5h2v2h-2zM821,286.5h2v2h-2zM841,271h1v2h-1zM841,275h1v2h-1zM847,253h2v0h-2zM849,253h2v0h-2zM785,272h2v1h-2zM788,272h2v1h-2zM826,237h0v2h0zM826,239h0v2h0zM814,238h1v2h-1zM814,240h1v2h-1zM847,274h2v1h-2zM849,274h2v1h-2zM802,282h1v2h-1zM802,284h1v2h-1zM851,265h0v2h0zM851,266h0v2h0zM791,286h2v0h-2zM793,286h2v0h-2zM836,254h2v1h-2zM838,254h2v1h-2zM783,248h1v2h-1zM783,251h1v2h-1zM835,240h2v0h-2zM836,240h2v0h-2zM808,287h2v0h-2zM810,287h2v0h-2zM796,275h0v2h0zM796,277h0v2h0zM843,239h0v2h0zM843,240h0v2h0zM806,236h0v2h0zM806,237h0v2h0zM783,284h2v0h-2zM784,284h2v0h-2zM848,240h2v1h-2zM850,240h2v1h-2zM789,258h2v1h-2zM793,258h2v1h-2zM847,248h2v0h-2zM849,248h2v0h-2zM840,266h2v0h-2zM842,266h2v0h-2zM841,286h2v1h-2zM843,286h2v1h-2zM785,278h2v0h-2zM787,278h2v0h-2zM820,237h1v2h-1zM820,240h1v2h-1zM828,283h0v2h0zM828,284h0v2h0zM796,264h0v2h0zM796,266h0v2h0zM790,245h2v0h-2zM792,245h2v0h-2zM783,239h0v2h0zM783,241h0v2h0zM782,263h0v2h0zM782,264h0v2h0zM206,330h2v1h-2zM210,330h2v1h-2zM194,330h2v0h-2zM196,330h2v0h-2zM174,330h2v1h-2zM177,330h2v1h-2zM185,332h2v0h-2zM187,332h2v0h-2zM237,325h2v1h-2zM239,325h2v1h-2zM167,359h1v2h-1zM167,361h1v2h-1zM199,397h2v0h-2zM200,397h2v0h-2zM233,401h1v2h-1zM233,405h1v2h-1zM210,402h2v0h-2zM212,402h2v0h-2zM201,407h2v1h-2zM203,407h2v1h-2zM220,397h0v2h0zM220,398h0v2h0zM175,402h2v1h-2zM177,402h2v1h-2zM188,400h1v2h-1zM188,404h1v2h-1zM217,407h2v0h-2zM218,407h2v0h-2zM196,402h2v0h-2zM198,402h2v0h-2zM175,408h2v0h-2zM177,408h2v0h-2zM226,396h1v2h-1zM226,400h1v2h-1zM178,396h2v1h-2zM180,396h2v1h-2zM210,395h2v1h-2zM213,395h2v1h-2zM188,395h2v0h-2zM190,395h2v0h-2zM165,430h2v0h-2zM166,430h2v0h-2zM204,473h2v0h-2zM206,473h2v0h-2zM215,471h2v1h-2zM217,471h2v1h-2zM185,472h2v0h-2zM186,472h2v0h-2zM230,473h2v0h-2zM232,473h2v0h-2zM176,471h2v1h-2zM178,471h2v1h-2zM193,471h2v1h-2zM197,471h2v1h-2zM275,473h2v1h-2zM278,473h2v1h-2zM302,475h2v1h-2zM305,475h2v1h-2zM285,480h2v0h-2zM287,480h2v0h-2zM305,481h0v2h0zM305,483h0v2h0zM294,474h1v2h-1zM294,477h1v2h-1zM288,485h2v1h-2zM290,485h2v1h-2zM275,487h2v0h-2zM277,487h2v0h-2zM272,480h2v1h-2zM276,480h2v1h-2zM286,474h2v0h-2zM287,474h2v0h-2zM310,481h0v2h0zM310,483h0v2h0zM300,483h0v2h0zM300,485h0v2h0zM358,484h2v0h-2zM360,484h2v0h-2zM394,455h2v0h-2zM395,455h2v0h-2zM406,470h1v2h-1zM406,472h1v2h-1zM397,482h2v1h-2zM401,482h2v1h-2zM406,455h2v1h-2zM409,455h2v1h-2zM405,437h2v1h-2zM409,437h2v1h-2zM408,443h1v2h-1zM408,445h1v2h-1zM398,465h2v0h-2zM399,465h2v0h-2zM394,474h0v2h0zM394,475h0v2h0zM395,439h2v1h-2zM398,439h2v1h-2zM398,446h2v1h-2zM400,446h2v1h-2zM400,471h1v2h-1zM400,473h1v2h-1zM407,465h2v0h-2zM409,465h2v0h-2zM409,484h0v2h0zM409,485h0v2h0zM396,489h2v1h-2zM400,489h2v1h-2zM393,466h0v2h0zM393,467h0v2h0zM394,460h2v0h-2zM396,460h2v0h-2zM424,298h1v2h-1zM424,301h1v2h-1zM459,305h2v1h-2zM462,305h2v1h-2zM463,292.5h2v2h-2zM466,292.5h2v2h-2zM463,296.5h2v2h-2zM466,296.5h2v2h-2zM431,299h2v1h-2zM435,299h2v1h-2zM457,311h2v1h-2zM460,311h2v1h-2zM441,312h2v1h-2zM444,312h2v1h-2zM445,294h2v1h-2zM447,294h2v1h-2zM432,305h0v2h0zM432,306h0v2h0zM469,309h2v1h-2zM471,309h2v1h-2zM442,302h2v1h-2zM445,302h2v1h-2zM455,292h2v0h-2zM456,292h2v0h-2zM452,302h0v2h0zM452,303h0v2h0zM473,300h0v2h0zM473,302h0v2h0zM432,293h2v1h-2zM434,293h2v1h-2zM426,308h1v2h-1zM426,310h1v2h-1zM460,335h1v2h-1zM460,338h1v2h-1zM446,343h2v1h-2zM448,343h2v1h-2zM457,350h2v1h-2zM460,350h2v1h-2zM438,347h1v2h-1zM438,351h1v2h-1zM442,329h2v1h-2zM446,329h2v1h-2zM445,335h2v1h-2zM449,335h2v1h-2zM444,350h2v1h-2zM447,350h2v1h-2zM433,336h1v2h-1zM433,340h1v2h-1zM455,329h2v1h-2zM458,329h2v1h-2zM432,329h2v0h-2zM434,329h2v0h-2zM439,335h1v2h-1zM439,337h1v2h-1zM455,342h0v2h0zM455,343h0v2h0zM483,334h2v1h-2zM486,334h2v1h-2zM473,328h1v2h-1zM473,330h1v2h-1zM516,327h2v1h-2zM518,327h2v1h-2zM470,373h1v2h-1zM470,377h1v2h-1zM515,347h2v0h-2zM516,347h2v0h-2zM504,377h2v1h-2zM506,377h2v1h-2zM474,355h1v2h-1zM474,359h1v2h-1zM484,343h2v1h-2zM488,343h2v1h-2zM487,377h2v1h-2zM489,377h2v1h-2zM490,329h2v0h-2zM492,329h2v0h-2zM498,356h2v1h-2zM502,356h2v1h-2zM520,335h2v0h-2zM522,335h2v0h-2zM492,358h1v2h-1zM492,361h1v2h-1zM513,353h1v2h-1zM513,355h1v2h-1zM505,364h2v0h-2zM506,364h2v0h-2zM509,337h0v2h0zM509,339h0v2h0zM519,354h0v2h0zM519,356h0v2h0zM499,330h0v2h0zM499,331h0v2h0zM480,370h2v1h-2zM482,370h2v1h-2zM480,323h2v0h-2zM481,323h2v0h-2zM475,347h2v1h-2zM477,347h2v1h-2zM498,349h2v0h-2zM499,349h2v0h-2zM484,350h2v0h-2zM485,350h2v0h-2zM495,371h2v0h-2zM496,371h2v0h-2zM481,360h0v2h0zM481,362h0v2h0zM500,338h2v0h-2zM501,338h2v0h-2zM469,358h0v2h0zM469,359h0v2h0zM486,359h1v2h-1zM486,363h1v2h-1zM499,322h2v1h-2zM501,322h2v1h-2zM482,377h0v2h0zM482,379h0v2h0zM478,386.5h2v2h-2zM482,386.5h2v2h-2zM478,391.5h2v2h-2zM482,391.5h2v2h-2zM451,380.5h2v2h-2zM455,380.5h2v2h-2zM451,385.5h2v2h-2zM455,385.5h2v2h-2zM466,422h0v2h0zM466,423h0v2h0zM474,405h0v2h0zM474,407h0v2h0zM489,386h2v1h-2zM491,386h2v1h-2zM479,434h1v2h-1zM479,438h1v2h-1zM473,387h0v2h0zM473,389h0v2h0zM494,421h1v2h-1zM494,425h1v2h-1zM484,420h0v2h0zM484,421h0v2h0zM447,437h2v1h-2zM450,437h2v1h-2zM505,416h0v2h0zM505,418h0v2h0zM451,393h2v1h-2zM454,393h2v1h-2zM474,434h0v2h0zM474,435h0v2h0zM459,426h1v2h-1zM459,428h1v2h-1zM505,401h2v1h-2zM507,401h2v1h-2zM453,410h2v1h-2zM457,410h2v1h-2zM459,416h2v0h-2zM460,416h2v0h-2zM463,388h2v0h-2zM465,388h2v0h-2zM482,404h0v2h0zM482,406h0v2h0zM501,425h2v1h-2zM504,425h2v1h-2zM489,410h2v1h-2zM492,410h2v1h-2zM501,443h2v0h-2zM503,443h2v0h-2zM510,391h1v2h-1zM510,393h1v2h-1zM507,411h2v0h-2zM508,411h2v0h-2zM498,398h0v2h0zM498,400h0v2h0zM498,377h1v2h-1zM498,380h1v2h-1zM489,437h2v1h-2zM493,437h2v1h-2zM461,396h2v1h-2zM463,396h2v1h-2zM472,424h1v2h-1zM472,426h1v2h-1zM458,369.5h2v2h-2zM460,369.5h2v2h-2zM458,372.5h2v2h-2zM460,372.5h2v2h-2zM550,491h2v0h-2zM551,491h2v0h-2zM564,489h2v1h-2zM566,489h2v1h-2zM552,482h0v2h0zM552,484h0v2h0zM512,487h0v2h0zM512,489h0v2h0zM522,488h0v2h0zM522,490h0v2h0zM532,482h1v2h-1zM532,485h1v2h-1zM573,481h1v2h-1zM573,485h1v2h-1zM564,481h2v1h-2zM566,481h2v1h-2zM539,485h1v2h-1zM539,487h1v2h-1zM503,477h2v1h-2zM507,477h2v1h-2zM503,483h0v2h0zM503,485h0v2h0zM558,480h0v2h0zM558,481h0v2h0zM517,478h2v0h-2zM518,478h2v0h-2zM542,479h2v0h-2zM543,479h2v0h-2zM558,488h0v2h0zM558,489h0v2h0zM527,479h0v2h0zM527,480h0v2h0zM517,483h2v0h-2zM518,483h2v0h-2zM545,485h0v2h0zM545,487h0v2h0zM563,333h1v2h-1zM563,335h1v2h-1zM572,332h1v2h-1zM572,334h1v2h-1zM547,333h0v2h0zM547,334h0v2h0zM553,333h0v2h0zM553,335h0v2h0zM558,331h0v2h0zM558,332h0v2h0zM632,303h2v0h-2zM633,303h2v0h-2zM608,307h2v0h-2zM609,307h2v0h-2zM608,315h2v1h-2zM610,315h2v1h-2zM624,326h1v2h-1zM624,329h1v2h-1zM624,299h1v2h-1zM624,303h1v2h-1zM630,310h2v0h-2zM631,310h2v0h-2zM606,330h2v0h-2zM608,330h2v0h-2zM612,321h0v2h0zM612,322h0v2h0zM627,321h2v0h-2zM628,321h2v0h-2zM601,301h1v2h-1zM601,303h1v2h-1zM606,337h2v0h-2zM608,337h2v0h-2zM602,311h1v2h-1zM602,313h1v2h-1zM622,315h2v0h-2zM624,315h2v0h-2zM616,300h0v2h0zM616,302h0v2h0zM622,337h2v0h-2zM623,337h2v0h-2zM631,328h2v0h-2zM633,328h2v0h-2zM617,314h0v2h0zM617,315h0v2h0zM630,333h0v2h0zM630,334h0v2h0zM660,316h1v2h-1zM660,320h1v2h-1zM657,308h2v1h-2zM661,308h2v1h-2zM765,311h2v0h-2zM767,311h2v0h-2zM760,316h2v1h-2zM762,316h2v1h-2zM764,306h2v0h-2zM765,306h2v0h-2zM770,316h2v1h-2zM774,316h2v1h-2zM759,307h0v2h0zM759,308h0v2h0zM682,353h2v1h-2zM685,353h2v1h-2zM692,351h0v2h0zM692,353h0v2h0zM720,342h2v0h-2zM722,342h2v0h-2zM719,348h2v1h-2zM723,348h2v1h-2zM755,361h2v1h-2zM758,361h2v1h-2zM758,354h2v1h-2zM762,354h2v1h-2zM757,343h1v2h-1zM757,345h1v2h-1zM766,344h1v2h-1zM766,346h1v2h-1zM767,362h0v2h0zM767,363h0v2h0zM756,482h2v1h-2zM760,482h2v1h-2zM770,476h0v2h0zM770,477h0v2h0zM757,476h2v0h-2zM758,476h2v0h-2zM769,484h2v0h-2zM771,484h2v0h-2zM775,476h0v2h0zM775,477h0v2h0zM765,474h0v2h0zM765,475h0v2h0zM797,363h1v2h-1zM797,367h1v2h-1zM797,331h1v2h-1zM797,333h1v2h-1zM797,353h0v2h0zM797,354h0v2h0zM796,344h1v2h-1zM796,346h1v2h-1zM792,301h2v1h-2zM796,301h2v1h-2zM828,300h1v2h-1zM828,303h1v2h-1zM822,294h0v2h0zM822,295h0v2h0zM809,297h2v1h-2zM813,297h2v1h-2zM795,296h2v0h-2zM796,296h2v0h-2zM833,295h2v0h-2zM835,295h2v0h-2zM834,302h2v0h-2zM835,302h2v0h-2zM803,294h0v2h0zM803,295h0v2h0zM814,303h2v1h-2zM818,303h2v1h-2zM803,303h2v1h-2zM805,303h2v1h-2zM810,292h2v0h-2zM811,292h2v0h-2zM837,333h2v0h-2zM839,333h2v0h-2zM848,345h2v1h-2zM851,345h2v1h-2zM817,331h1v2h-1zM817,335h1v2h-1zM838,349h2v1h-2zM841,349h2v1h-2zM831,324h2v1h-2zM833,324h2v1h-2zM805,331h1v2h-1zM805,334h1v2h-1zM850,354h0v2h0zM850,356h0v2h0zM823,324h1v2h-1zM823,327h1v2h-1zM803,343h2v1h-2zM805,343h2v1h-2zM822,366h1v2h-1zM822,368h1v2h-1zM846,330h0v2h0zM846,331h0v2h0zM838,360h1v2h-1zM838,362h1v2h-1zM840,324h2v1h-2zM842,324h2v1h-2zM804,349h2v0h-2zM805,349h2v0h-2zM853,333h1v2h-1zM853,336h1v2h-1zM848,366h2v0h-2zM850,366h2v0h-2zM808,369h2v0h-2zM809,369h2v0h-2zM806,363h2v0h-2zM807,363h2v0h-2zM831,332h0v2h0zM831,334h0v2h0zM851,326h2v0h-2zM852,326h2v0h-2zM839,342h2v0h-2zM841,342h2v0h-2zM806,325h2v1h-2zM809,325h2v1h-2zM832,349h1v2h-1zM832,353h1v2h-1zM829,366h0v2h0zM829,368h0v2h0zM802,355h2v0h-2zM803,355h2v0h-2zM832,341h0v2h0zM832,342h0v2h0zM844,356h0v2h0zM844,358h0v2h0zM797,324h2v1h-2zM799,324h2v1h-2zM817,367h0v2h0zM817,368h0v2h0zM816,323h0v2h0zM816,324h0v2h0zM154,563h1v2h-1zM154,565h1v2h-1zM131,571h0v2h0zM131,572h0v2h0zM122,584h0v2h0zM122,585h0v2h0zM132,579h1v2h-1zM132,582h1v2h-1zM120,570h0v2h0zM120,572h0v2h0zM125,595h2v1h-2zM127,595h2v1h-2zM136,562h1v2h-1zM136,565h1v2h-1zM147,563h1v2h-1zM147,565h1v2h-1zM131,601h2v0h-2zM133,601h2v0h-2zM139,596h2v0h-2zM141,596h2v0h-2zM121,560h2v0h-2zM123,560h2v0h-2zM155,594h2v1h-2zM157,594h2v1h-2zM154,604h2v0h-2zM156,604h2v0h-2zM125,574h1v2h-1zM125,577h1v2h-1zM122,601h2v1h-2zM124,601h2v1h-2zM148,593h1v2h-1zM148,596h1v2h-1zM156,576h1v2h-1zM156,579h1v2h-1zM141,603h2v1h-2zM145,603h2v1h-2zM130,560h1v2h-1zM130,562h1v2h-1zM127,586h0v2h0zM127,587h0v2h0zM134,593h0v2h0zM134,594h0v2h0zM142,561h0v2h0zM142,562h0v2h0zM156,588h2v0h-2zM158,588h2v0h-2zM181,533h1v2h-1zM181,536h1v2h-1zM255,545h1v2h-1zM255,547h1v2h-1zM254,540h2v0h-2zM255,540h2v0h-2zM382,545h1v2h-1zM382,547h1v2h-1zM384,536h1v2h-1zM384,538h1v2h-1zM379,537h0v2h0zM379,538h0v2h0zM402,542h2v1h-2zM405,542h2v1h-2zM438,548h2v1h-2zM440,548h2v1h-2zM404,523h0v2h0zM404,524h0v2h0zM417,534h2v0h-2zM418,534h2v0h-2zM416,511h2v1h-2zM419,511h2v1h-2zM397,534h2v1h-2zM399,534h2v1h-2zM412,549h1v2h-1zM412,551h1v2h-1zM430,543h1v2h-1zM430,546h1v2h-1zM414,523h2v1h-2zM418,523h2v1h-2zM396,542h0v2h0zM396,543h0v2h0zM406,548h0v2h0zM406,550h0v2h0zM399,513h2v1h-2zM403,513h2v1h-2zM419,500h0v2h0zM419,501h0v2h0zM421,544h0v2h0zM421,546h0v2h0zM412,501h0v2h0zM412,503h0v2h0zM414,539h1v2h-1zM414,541h1v2h-1zM395,522h1v2h-1zM395,524h1v2h-1zM399,506h2v1h-2zM401,506h2v1h-2zM223,618h1v2h-1zM223,622h1v2h-1zM256,613h0v2h0zM256,615h0v2h0zM290,619h0v2h0zM290,621h0v2h0zM301,618h0v2h0zM301,620h0v2h0zM337,612h1v2h-1zM337,614h1v2h-1zM337,621h1v2h-1zM337,623h1v2h-1zM346,614h1v2h-1zM346,618h1v2h-1zM381,620h0v2h0zM381,621h0v2h0zM381,612h0v2h0zM381,613h0v2h0zM269,642h2v0h-2zM271,642h2v0h-2zM284,638h2v1h-2zM286,638h2v1h-2zM269,635h2v1h-2zM271,635h2v1h-2zM278,636h0v2h0zM278,637h0v2h0zM313,637h2v1h-2zM315,637h2v1h-2zM323,634h0v2h0zM323,636h0v2h0zM328,633h0v2h0zM328,634h0v2h0zM317,643h2v0h-2zM319,643h2v0h-2zM328,642h2v0h-2zM329,642h2v0h-2zM361,637h1v2h-1zM361,639h1v2h-1zM375,637h0v2h0zM375,639h0v2h0zM367,636h1v2h-1zM367,639h1v2h-1zM354,635h0v2h0zM354,636h0v2h0zM221,643h1v2h-1zM221,645h1v2h-1zM249,688h1v2h-1zM249,692h1v2h-1zM240,690h2v1h-2zM242,690h2v1h-2zM255,688h0v2h0zM255,689h0v2h0zM408,609.5h2v2h-2zM411,609.5h2v2h-2zM408,613.5h2v2h-2zM411,613.5h2v2h-2zM401,611h1v2h-1zM401,614h1v2h-1zM400,629h1v2h-1zM400,631h1v2h-1zM435,617h0v2h0zM435,618h0v2h0zM431,626h1v2h-1zM431,629h1v2h-1zM437,632h0v2h0zM437,633h0v2h0zM435,606h1v2h-1zM435,610h1v2h-1zM409,605h2v0h-2zM411,605h2v0h-2zM411,666h2v0h-2zM413,666h2v0h-2zM422,666h0v2h0zM422,667h0v2h0zM420,697h2v0h-2zM422,697h2v0h-2zM429,697h2v0h-2zM431,697h2v0h-2zM103,629h2v1h-2zM105,629h2v1h-2zM70,663h2v0h-2zM72,663h2v0h-2zM87,653h2v1h-2zM91,653h2v1h-2zM128,627h1v2h-1zM128,629h1v2h-1zM66,622h2v0h-2zM67,622h2v0h-2zM95,641h1v2h-1zM95,643h1v2h-1zM83,626h0v2h0zM83,627h0v2h0zM105,636h0v2h0zM105,637h0v2h0zM98,651h1v2h-1zM98,655h1v2h-1zM113,625h2v1h-2zM117,625h2v1h-2zM88,634h2v1h-2zM92,634h2v1h-2zM85,660h0v2h0zM85,661h0v2h0zM95,664h2v1h-2zM98,664h2v1h-2zM89,629h2v0h-2zM91,629h2v0h-2zM73,655h2v1h-2zM77,655h2v1h-2zM89,624h2v0h-2zM91,624h2v0h-2zM84,641h0v2h0zM84,642h0v2h0zM70,628h2v1h-2zM72,628h2v1h-2zM114,631h2v1h-2zM118,631h2v1h-2zM102,623h2v1h-2zM104,623h2v1h-2zM105,646h0v2h0zM105,648h0v2h0zM105,660h0v2h0zM105,662h0v2h0zM124,622h2v0h-2zM126,622h2v0h-2zM66,654h1v2h-1zM66,656h1v2h-1zM175,659h0v2h0zM175,661h0v2h0zM162,686h2v1h-2zM165,686h2v1h-2zM190,643h2v0h-2zM192,643h2v0h-2zM207,686h2v0h-2zM208,686h2v0h-2zM158,649h2v1h-2zM160,649h2v1h-2zM150,660h2v1h-2zM154,660h2v1h-2zM189,655h2v0h-2zM190,655h2v0h-2zM164,698h2v1h-2zM167,698h2v1h-2zM207,675h2v1h-2zM210,675h2v1h-2zM167,652h2v0h-2zM168,652h2v0h-2zM168,664h1v2h-1zM168,668h1v2h-1zM159,669h1v2h-1zM159,671h1v2h-1zM210,692h1v2h-1zM210,696h1v2h-1zM152,676h0v2h0zM152,677h0v2h0zM178,649h2v1h-2zM180,649h2v1h-2zM202,660h1v2h-1zM202,664h1v2h-1zM204,642h0v2h0zM204,644h0v2h0zM165,644h2v0h-2zM167,644h2v0h-2zM151,646h1v2h-1zM151,650h1v2h-1zM176,691h2v1h-2zM178,691h2v1h-2zM205,693h0v2h0zM205,695h0v2h0zM162,656h0v2h0zM162,658h0v2h0zM163,679h2v1h-2zM166,679h2v1h-2zM196,692h1v2h-1zM196,695h1v2h-1zM159,692h2v1h-2zM161,692h2v1h-2zM153,691h1v2h-1zM153,695h1v2h-1zM183,658h1v2h-1zM183,661h1v2h-1zM211,644h0v2h0zM211,645h0v2h0zM180,643h2v1h-2zM183,643h2v1h-2zM145,647h1v2h-1zM145,651h1v2h-1zM211,657h1v2h-1zM211,661h1v2h-1zM198,654h2v1h-2zM201,654h2v1h-2zM190,649h2v0h-2zM191,649h2v0h-2zM168,706h2v1h-2zM170,706h2v1h-2zM178,707h2v1h-2zM180,707h2v1h-2zM64,721h2v0h-2zM66,721h2v0h-2zM27,761h2v0h-2zM29,761h2v0h-2zM22,761h0v2h0zM22,762h0v2h0zM128,767h2v0h-2zM130,767h2v0h-2zM128,756h2v1h-2zM130,756h2v1h-2zM128,762h2v0h-2zM129,762h2v0h-2zM114,822h2v0h-2zM115,822h2v0h-2zM121,810h0v2h0zM121,811h0v2h0zM122,819h0v2h0zM122,820h0v2h0zM106,820h0v2h0zM106,821h0v2h0zM143,825h2v1h-2zM145,825h2v1h-2zM141,831h2v0h-2zM142,831h2v0h-2zM155,808h2v1h-2zM157,808h2v1h-2zM165,807h0v2h0zM165,809h0v2h0zM198,759h1v2h-1zM198,762h1v2h-1zM208,797h2v1h-2zM211,797h2v1h-2zM179,756h0v2h0zM179,757h0v2h0zM219,743h2v1h-2zM222,743h2v1h-2zM203,735h2v0h-2zM204,735h2v0h-2zM217,786h1v2h-1zM217,790h1v2h-1zM228,774h2v1h-2zM232,774h2v1h-2zM182,778h1v2h-1zM182,780h1v2h-1zM184,733h1v2h-1zM184,736h1v2h-1zM232,797h1v2h-1zM232,799h1v2h-1zM189,763h2v0h-2zM191,763h2v0h-2zM175,732h2v0h-2zM177,732h2v0h-2zM179,803h2v0h-2zM181,803h2v0h-2zM232,780h2v0h-2zM234,780h2v0h-2zM254,735.5h2v2h-2zM260,735.5h2v2h-2zM254,742.5h2v2h-2zM260,742.5h2v2h-2zM201,805h2v0h-2zM203,805h2v0h-2zM225,732h2v1h-2zM227,732h2v1h-2zM186,797h2v0h-2zM187,797h2v0h-2zM161,750h2v1h-2zM164,750h2v1h-2zM256,770h0v2h0zM256,772h0v2h0zM210,753h1v2h-1zM210,757h1v2h-1zM161,766h2v1h-2zM163,766h2v1h-2zM171,777h0v2h0zM171,778h0v2h0zM221,801h2v0h-2zM223,801h2v0h-2zM173,749h2v1h-2zM177,749h2v1h-2zM176,771h2v1h-2zM180,771h2v1h-2zM236,788h1v2h-1zM236,790h1v2h-1zM170,758h2v1h-2zM172,758h2v1h-2zM241,777h2v1h-2zM244,777h2v1h-2zM216,738h2v0h-2zM218,738h2v0h-2zM230,759h1v2h-1zM230,763h1v2h-1zM216,772h0v2h0zM216,773h0v2h0zM189,756h2v1h-2zM191,756h2v1h-2zM191,806h2v1h-2zM194,806h2v1h-2zM195,797h2v1h-2zM197,797h2v1h-2zM192,747h0v2h0zM192,748h0v2h0zM172,802h0v2h0zM172,804h0v2h0zM183,744h2v0h-2zM184,744h2v0h-2zM167,738h2v1h-2zM170,738h2v1h-2zM262,789h0v2h0zM262,791h0v2h0zM162,773h2v1h-2zM164,773h2v1h-2zM176,790h2v1h-2zM178,790h2v1h-2zM240,750h2v0h-2zM242,750h2v0h-2zM216,759h2v0h-2zM217,759h2v0h-2zM247,802h2v1h-2zM250,802h2v1h-2zM250,751h2v0h-2zM252,751h2v0h-2zM246,731h2v0h-2zM248,731h2v0h-2zM258,800h2v1h-2zM260,800h2v1h-2zM223,776h0v2h0zM223,778h0v2h0zM210,806h2v0h-2zM212,806h2v0h-2zM263,749h0v2h0zM263,750h0v2h0zM230,749h2v0h-2zM232,749h2v0h-2zM226,787h1v2h-1zM226,789h1v2h-1zM238,801h2v0h-2zM239,801h2v0h-2zM224,756h0v2h0zM224,757h0v2h0zM176,797h2v0h-2zM178,797h2v0h-2zM222,769h2v0h-2zM223,769h2v0h-2zM174,764h2v1h-2zM177,764h2v1h-2zM210,744h1v2h-1zM210,746h1v2h-1zM164,745h2v0h-2zM166,745h2v0h-2zM215,732h2v1h-2zM217,732h2v1h-2zM298,745h0v2h0zM298,746h0v2h0zM331,749h2v0h-2zM333,749h2v0h-2zM315,742h1v2h-1zM315,745h1v2h-1zM313,757h2v1h-2zM316,757h2v1h-2zM296,734h1v2h-1zM296,738h1v2h-1zM349,757h2v1h-2zM351,757h2v1h-2zM323,747h1v2h-1zM323,750h1v2h-1zM335,757h2v1h-2zM337,757h2v1h-2zM304,741h1v2h-1zM304,745h1v2h-1zM332,740h2v1h-2zM334,740h2v1h-2zM304,762h2v1h-2zM306,762h2v1h-2zM342,734h1v2h-1zM342,737h1v2h-1zM350,731h1v2h-1zM350,735h1v2h-1zM300,755h2v1h-2zM304,755h2v1h-2zM328,728.5h2v2h-2zM331,728.5h2v2h-2zM328,732.5h2v2h-2zM331,732.5h2v2h-2zM309,735h2v1h-2zM312,735h2v1h-2zM351,743h1v2h-1zM351,745h1v2h-1zM319,731h1v2h-1zM319,733h1v2h-1zM344,763h2v0h-2zM345,763h2v0h-2zM317,763h2v0h-2zM318,763h2v0h-2zM299,728h2v1h-2zM303,728h2v1h-2zM430,740h2v0h-2zM432,740h2v0h-2zM380,710h0v2h0zM380,712h0v2h0zM415,721h1v2h-1zM415,725h1v2h-1zM422,716h1v2h-1zM422,718h1v2h-1zM407,743h2v0h-2zM408,743h2v0h-2zM382,736.5h2v2h-2zM386,736.5h2v2h-2zM382,741.5h2v2h-2zM386,741.5h2v2h-2zM428,728h2v1h-2zM430,728h2v1h-2zM391,710h2v0h-2zM393,710h2v0h-2zM421,707h0v2h0zM421,708h0v2h0zM441,723h1v2h-1zM441,726h1v2h-1zM412,737h2v1h-2zM414,737h2v1h-2zM387,727h2v0h-2zM388,727h2v0h-2zM413,671h2v0h-2zM415,671h2v0h-2zM435,704h2v0h-2zM437,704h2v0h-2zM427,704h0v2h0zM427,705h0v2h0zM435,717h2v0h-2zM436,717h2v0h-2zM433,709h2v1h-2zM435,709h2v1h-2zM431,723h2v0h-2zM433,723h2v0h-2zM439,697h2v0h-2zM440,697h2v0h-2zM423,727h0v2h0zM423,728h0v2h0zM428,713h0v2h0zM428,715h0v2h0zM842,730h1v2h-1zM842,733h1v2h-1zM843,708h0v2h0zM843,710h0v2h0zM842,743h0v2h0zM842,745h0v2h0zM841,717h1v2h-1zM841,720h1v2h-1zM903,754h0v2h0zM903,756h0v2h0zM873,778h0v2h0zM873,779h0v2h0zM942,671h0v2h0zM942,673h0v2h0zM899,690h0v2h0zM899,691h0v2h0zM945,680h0v2h0zM945,682h0v2h0zM926,690h0v2h0zM926,691h0v2h0zM903,670h2v1h-2zM906,670h2v1h-2zM934,664h1v2h-1zM934,666h1v2h-1zM912,697h2v0h-2zM913,697h2v0h-2zM910,691h2v0h-2zM912,691h2v0h-2zM932,676h1v2h-1zM932,678h1v2h-1zM895,670h1v2h-1zM895,674h1v2h-1zM931,687h2v1h-2zM934,687h2v1h-2zM939,695h2v1h-2zM943,695h2v1h-2zM903,680h0v2h0zM903,682h0v2h0zM894,682h0v2h0zM894,684h0v2h0zM922,698h2v0h-2zM923,698h2v0h-2zM947,663h1v2h-1zM947,667h1v2h-1zM921,685h0v2h0zM921,686h0v2h0zM941,689h2v1h-2zM943,689h2v1h-2zM979,719h2v1h-2zM982,719h2v1h-2zM964,745h2v0h-2zM966,745h2v0h-2zM992,723h0v2h0zM992,724h0v2h0zM969,734h0v2h0zM969,735h0v2h0zM980,725h2v0h-2zM981,725h2v0h-2zM958,734h1v2h-1zM958,737h1v2h-1zM987,709h0v2h0zM987,710h0v2h0zM964,736h0v2h0zM964,737h0v2h0zM992,709h1v2h-1zM992,712h1v2h-1zM982,731h2v1h-2zM986,731h2v1h-2zM978,705h2v0h-2zM980,705h2v0h-2zM978,710h1v2h-1zM978,712h1v2h-1zM1013,695h2v0h-2zM1014,695h2v0h-2zM1033,697h2v0h-2zM1034,697h2v0h-2zM1010,704h2v1h-2zM1012,704h2v1h-2zM1031,709h2v0h-2zM1032,709h2v0h-2zM1034,729h2v0h-2zM1035,729h2v0h-2zM1003,710h0v2h0zM1003,712h0v2h0zM1021,694h2v1h-2zM1024,694h2v1h-2zM1033,717h0v2h0zM1033,719h0v2h0zM1003,694h2v1h-2zM1006,694h2v1h-2zM1008,728h2v0h-2zM1009,728h2v0h-2zM1005,720h0v2h0zM1005,721h0v2h0zM1021,705h2v0h-2zM1023,705h2v0h-2zM1018,727h0v2h0zM1018,728h0v2h0zM1031,702h2v1h-2zM1035,702h2v1h-2zM1026,727h0v2h0zM1026,728h0v2h0zM1036,692h2v0h-2zM1037,692h2v0h-2zM1078,710h1v2h-1zM1078,713h1v2h-1zM1089,704h0v2h0zM1089,705h0v2h0zM1079,725h2v1h-2zM1081,725h2v1h-2zM1082,733h2v1h-2zM1085,733h2v1h-2zM1076,733h1v2h-1zM1076,736h1v2h-1zM1094,701h1v2h-1zM1094,703h1v2h-1zM1078,704h2v1h-2zM1080,704h2v1h-2zM1081,720h2v0h-2zM1082,720h2v0h-2zM1092,738h2v0h-2zM1093,738h2v0h-2zM1092,733h2v0h-2zM1093,733h2v0h-2zM1132,674h2v1h-2zM1135,674h2v1h-2zM1115,663h2v0h-2zM1116,663h2v0h-2zM1131,663h2v1h-2zM1135,663h2v1h-2zM1107,663h1v2h-1zM1107,667h1v2h-1zM1118,695h2v1h-2zM1120,695h2v1h-2zM1106,687h1v2h-1zM1106,691h1v2h-1zM1130,684h2v1h-2zM1132,684h2v1h-2zM1123,670h2v0h-2zM1125,670h2v0h-2zM1131,694h0v2h0zM1131,695h0v2h0zM1137,692h1v2h-1zM1137,695h1v2h-1zM1115,670h2v0h-2zM1116,670h2v0h-2zM1135,669h2v0h-2zM1136,669h2v0h-2zM1106,678h0v2h0zM1106,679h0v2h0zM1158,713h0v2h0zM1158,714h0v2h0zM1152,727h2v1h-2zM1154,727h2v1h-2zM1151,697h2v1h-2zM1154,697h2v1h-2zM1151,707h0v2h0zM1151,709h0v2h0zM1159,703h0v2h0zM1159,704h0v2h0zM1153,690h2v0h-2zM1155,690h2v0h-2zM1151,721h2v0h-2zM1153,721h2v0h-2zM1041,759h2v1h-2zM1043,759h2v1h-2zM1031,760h2v1h-2zM1033,760h2v1h-2zM973,781h2v0h-2zM975,781h2v0h-2zM983,779h0v2h0zM983,780h0v2h0zM1173,769h2v1h-2zM1177,769h2v1h-2zM1153,769h2v0h-2zM1154,769h2v0h-2zM1186,768h2v1h-2zM1190,768h2v1h-2zM1163,769h2v1h-2zM1165,769h2v1h-2zM857,553h0v2h0zM857,554h0v2h0zM851,564h2v1h-2zM854,564h2v1h-2zM845,552h2v0h-2zM846,552h2v0h-2zM845,557h2v1h-2zM849,557h2v1h-2zM844,563h0v2h0zM844,564h0v2h0zM893,579h0v2h0zM893,580h0v2h0zM891,588h0v2h0zM891,589h0v2h0zM877,578h2v0h-2zM879,578h2v0h-2zM900,583h1v2h-1zM900,586h1v2h-1zM874,588h1v2h-1zM874,590h1v2h-1zM880,583h0v2h0zM880,585h0v2h0zM885,588h1v2h-1zM885,590h1v2h-1zM886,576h0v2h0zM886,578h0v2h0zM898,577h2v0h-2zM900,577h2v0h-2zM988,629h2v1h-2zM990,629h2v1h-2zM1224,672h1v2h-1zM1224,676h1v2h-1zM1216,682h0v2h0zM1216,683h0v2h0zM1203,672h2v0h-2zM1205,672h2v0h-2zM1220,646h0v2h0zM1220,647h0v2h0zM1228,653h2v1h-2zM1231,653h2v1h-2zM1208,645h2v0h-2zM1209,645h2v0h-2zM1211,678h0v2h0zM1211,680h0v2h0zM1216,673h0v2h0zM1216,674h0v2h0zM1221,662h0v2h0zM1221,663h0v2h0zM1221,683h2v1h-2zM1223,683h2v1h-2zM1202,678h1v2h-1zM1202,680h1v2h-1zM1218,655h2v1h-2zM1220,655h2v1h-2zM929,714h2v1h-2zM931,714h2v1h-2zM1107,738h0v2h0zM1107,739h0v2h0zM1082,739h2v1h-2zM1085,739h2v1h-2zM1101,736h1v2h-1zM1101,738h1v2h-1zM1239,786h2v1h-2zM1241,786h2v1h-2zM1238,780h2v1h-2zM1241,780h2v1h-2zM1237,772h2v0h-2zM1238,772h2v0h-2zM1249,769h0v2h0zM1249,771h0v2h0zM1252,778h0v2h0zM1252,780h0v2h0zM1237,798h0v2h0zM1237,799h0v2h0zM1251,755h0v2h0zM1251,757h0v2h0zM1248,787h2v0h-2zM1249,787h2v0h-2zM1069,751h2v0h-2zM1070,751h2v0h-2z" fill="#a8a8a8"/><circle cx="280" cy="113.5" r="1.3" fill="#00a0b0"/><circle cx="238" cy="138" r="1.3" fill="#00a0b0"/><circle cx="201.4" cy="146.8" r="1.3" fill="#00a0b0"/><circle cx="506.5" cy="110.4" r="1.3" fill="#00a0b0"/><circle cx="506.5" cy="132.8" r="1.3" fill="#00a0b0"/><circle cx="699.5" cy="110.4" r="1.3" fill="#00a0b0"/><circle cx="699.5" cy="132.8" r="1.3" fill="#00a0b0"/><circle cx="543" cy="172.3" r="1.3" fill="#00a0b0"/><circle cx="606.4" cy="215.3" r="1.3" fill="#00a0b0"/><circle cx="506" cy="271.3" r="1.3" fill="#00a0b0"/><circle cx="440.5" cy="260.4" r="1.3" fill="#00a0b0"/><circle cx="822" cy="473.7" r="1.3" fill="#00a0b0"/><circle cx="247.5" cy="514.7" r="1.3" fill="#00a0b0"/><circle cx="30" cy="636" r="1.3" fill="#00a0b0"/><circle cx="200" cy="667.6" r="1.3" fill="#00a0b0"/><circle cx="466" cy="611.6" r="1.3" fill="#00a0b0"/><circle cx="466" cy="696.8" r="1.3" fill="#00a0b0"/><circle cx="26.5" cy="773" r="1.3" fill="#00a0b0"/><circle cx="50" cy="768" r="1.3" fill="#00a0b0"/><circle cx="430.5" cy="781.2" r="1.3" fill="#00a0b0"/><circle cx="466" cy="812.3" r="1.3" fill="#00a0b0"/><circle cx="826" cy="724" r="1.3" fill="#00a0b0"/><circle cx="952.6" cy="780" r="1.3" fill="#00a0b0"/><circle cx="1028" cy="810.6" r="1.3" fill="#00a0b0"/><circle cx="1061" cy="717" r="1.3" fill="#00a0b0"/><circle cx="825.8" cy="518.8" r="1.3" fill="#00a0b0"/><circle cx="825.8" cy="622" r="1.3" fill="#00a0b0"/><circle cx="1174" cy="649" r="1.3" fill="#00a0b0"/><circle cx="1284" cy="620.6" r="1.3" fill="#00a0b0"/><circle cx="1259" cy="734.5" r="1.3" fill="#00a0b0"/><circle cx="1289" cy="734.5" r="1.3" fill="#00a0b0"/><circle cx="844" cy="548" r="1.3" fill="#00a0b0"/><circle cx="844" cy="554" r="1.3" fill="#00a0b0"/><circle cx="844" cy="560" r="1.3" fill="#00a0b0"/><circle cx="844" cy="566" r="1.3" fill="#00a0b0"/><circle cx="389" cy="442" r="1.3" fill="#00a0b0"/><circle cx="534" cy="470" r="1.3" fill="#00a0b0"/></svg><div class="abs tab" style="left:1627px;top:63px;width:38px;height:20px"></div><div class="abs lbl" style="left:1633px;top:67px">Net</div><div class="abs panel" style="left:1582px;top:83px;width:333px;height:907px"></div><div class="abs tabsel2" style="left:1582px;top:61px;width:45px;height:23px"></div><div class="abs lbl" style="left:1590px;top:65px">Part</div><div class="abs pbtn" style="left:1595px;top:94px;width:54px;height:24px"></div><div class="abs" style="left:1602px;top:99px;color:#ff0000;font-weight:bold;font-size:14.8px;top:98px">PUZ4</div><div class="abs lbl" style="left:1598px;top:131px">AOZ5516QI_QFN31_5X5</div><div class="abs tbl" style="left:1594px;top:153px;width:311px;height:828px"></div><div class="abs thead" style="left:1595px;top:154px;width:309px;height:24px"></div><div class="abs" style="left:1655px;top:154px;width:1px;height:24px;background:#e5e5e5"></div><div class="abs lbl" style="left:1608px;top:160px">Pin</div><svg class="abs" style="left:1637px;top:160px" width="12" height="6"><path d="M0.5,5.5 L6,0.5 L11.5,5.5 Z" fill="#8896a4"/></svg><div class="abs lbl" style="left:1662px;top:160px">NetName</div><div class="abs lbl num" style="left:1595px;top:182px;width:61px">1</div><div class="abs lbl" style="left:1660px;top:182px">PWM2C</div><div class="abs" style="left:1595px;top:197px;width:309px;height:19px;background:#f3f6fb"></div><div class="abs lbl num" style="left:1595px;top:201px;width:61px">2</div><div class="abs lbl" style="left:1660px;top:201px">DRVEN2C</div><div class="abs lbl num" style="left:1595px;top:220px;width:61px">3</div><div class="abs lbl" style="left:1660px;top:220px">VCC2C</div><div class="abs" style="left:1595px;top:235px;width:309px;height:19px;background:#f3f6fb"></div><div class="abs lbl num" style="left:1595px;top:239px;width:61px">4</div><div class="abs lbl num" style="left:1595px;top:258px;width:61px">5</div><div class="abs lbl" style="left:1660px;top:258px">BOOT2C</div><div class="abs" style="left:1595px;top:273px;width:309px;height:19px;background:#f3f6fb"></div><div class="abs lbl num" style="left:1595px;top:277px;width:61px">6</div><div class="abs lbl num" style="left:1595px;top:296px;width:61px">7</div><div class="abs lbl" style="left:1660px;top:296px">PHASE2C</div><div class="abs" style="left:1595px;top:311px;width:309px;height:19px;background:#f3f6fb"></div><div class="abs lbl num" style="left:1595px;top:315px;width:61px">8</div><div class="abs lbl" style="left:1660px;top:315px">+19VB_CPU</div><div class="abs lbl num" style="left:1595px;top:334px;width:61px">9</div><div class="abs lbl" style="left:1660px;top:334px">+19VB_CPU</div><div class="abs" style="left:1595px;top:349px;width:309px;height:19px;background:#f3f6fb"></div><div class="abs lbl num" style="left:1595px;top:353px;width:61px">10</div><div class="abs lbl" style="left:1660px;top:353px">GND</div><div class="abs lbl num" style="left:1595px;top:372px;width:61px">11</div><div class="abs lbl" style="left:1660px;top:372px">SW_PHASE2C</div><div class="abs" style="left:1595px;top:387px;width:309px;height:19px;background:#f3f6fb"></div><div class="abs lbl num" style="left:1595px;top:391px;width:61px">12</div><div class="abs lbl" style="left:1660px;top:391px">SW_PHASE2C</div><div class="abs lbl num" style="left:1595px;top:410px;width:61px">13</div><div class="abs" style="left:1595px;top:425px;width:309px;height:19px;background:#f3f6fb"></div><div class="abs lbl num" style="left:1595px;top:429px;width:61px">14</div><div class="abs lbl" style="left:1660px;top:429px">GND</div><div class="abs lbl num" style="left:1595px;top:448px;width:61px">15</div><div class="abs lbl" style="left:1660px;top:448px">PVCC2C</div><div class="abs" style="left:1595px;top:463px;width:309px;height:19px;background:#f3f6fb"></div><div class="abs lbl num" style="left:1595px;top:467px;width:61px">16</div><div class="abs lbl num" style="left:1595px;top:486px;width:61px">17</div><div class="abs" style="left:1595px;top:501px;width:309px;height:19px;background:#f3f6fb"></div><div class="abs lbl num" style="left:1595px;top:505px;width:61px">18</div><div class="abs lbl" style="left:1660px;top:505px">GND</div><div class="abs" style="left:1596px;top:538px;width:307px;height:1px;background:#f0f0f0"></div><div class="abs" style="left:1596px;top:557px;width:307px;height:1px;background:#f0f0f0"></div><div class="abs" style="left:1596px;top:576px;width:307px;height:1px;background:#f0f0f0"></div><div class="abs" style="left:1596px;top:595px;width:307px;height:1px;background:#f0f0f0"></div><div class="abs" style="left:1596px;top:614px;width:307px;height:1px;background:#f0f0f0"></div><div class="abs" style="left:1596px;top:633px;width:307px;height:1px;background:#f0f0f0"></div><div class="abs" style="left:1596px;top:652px;width:307px;height:1px;background:#f0f0f0"></div><div class="abs" style="left:1596px;top:671px;width:307px;height:1px;background:#f0f0f0"></div><div class="abs" style="left:1596px;top:690px;width:307px;height:1px;background:#f0f0f0"></div><div class="abs" style="left:1596px;top:709px;width:307px;height:1px;background:#f0f0f0"></div><div class="abs" style="left:1596px;top:728px;width:307px;height:1px;background:#f0f0f0"></div><div class="abs" style="left:1596px;top:747px;width:307px;height:1px;background:#f0f0f0"></div><div class="abs" style="left:1596px;top:766px;width:307px;height:1px;background:#f0f0f0"></div><div class="abs" style="left:1596px;top:785px;width:307px;height:1px;background:#f0f0f0"></div><div class="abs" style="left:1596px;top:804px;width:307px;height:1px;background:#f0f0f0"></div><div class="abs" style="left:1596px;top:823px;width:307px;height:1px;background:#f0f0f0"></div><div class="abs" style="left:1596px;top:842px;width:307px;height:1px;background:#f0f0f0"></div><div class="abs" style="left:1596px;top:861px;width:307px;height:1px;background:#f0f0f0"></div><div class="abs" style="left:1596px;top:880px;width:307px;height:1px;background:#f0f0f0"></div><div class="abs" style="left:1596px;top:899px;width:307px;height:1px;background:#f0f0f0"></div><div class="abs" style="left:1596px;top:918px;width:307px;height:1px;background:#f0f0f0"></div><div class="abs" style="left:1596px;top:937px;width:307px;height:1px;background:#f0f0f0"></div><div class="abs" style="left:1596px;top:956px;width:307px;height:1px;background:#f0f0f0"></div><div class="abs" style="left:1596px;top:975px;width:307px;height:1px;background:#f0f0f0"></div><div class="abs" style="left:1656px;top:520px;width:1px;height:459px;background:#f0f0f0"></div></div><div class="win" style="left:1920px"><div class="topstrip"></div><div class="menubar"><span style="left:16px">File</span><span style="left:53px">View</span><span style="left:97px">Options</span><span style="left:158px">Help</span></div><div class="toolbar"></div><svg class="abs" style="left:0;top:0" width="900" height="60"><rect x="4" y="31" width="2" height="2" fill="#9a9a9a"/><rect x="5" y="32" width="1" height="1" fill="#fff"/><rect x="4" y="35" width="2" height="2" fill="#9a9a9a"/><rect x="5" y="36" width="1" height="1" fill="#fff"/><rect x="4" y="39" width="2" height="2" fill="#9a9a9a"/><rect x="5" y="40" width="1" height="1" fill="#fff"/><rect x="4" y="43" width="2" height="2" fill="#9a9a9a"/><rect x="5" y="44" width="1" height="1" fill="#fff"/><rect x="4" y="47" width="2" height="2" fill="#9a9a9a"/><rect x="5" y="48" width="1" height="1" fill="#fff"/><defs><linearGradient id="gg" x1="0" y1="0" x2="0" y2="1"><stop offset="0" stop-color="#9fd89f"/><stop offset="1" stop-color="#3c913c"/></linearGradient><radialGradient id="lens" cx="0.4" cy="0.4" r="0.6"><stop offset="0" stop-color="#f4f9ff"/><stop offset="1" stop-color="#b9d6f2"/></radialGradient></defs><path d="M24.8,37.2 A5,5 0 1 0 23.2,45.2" fill="none" stroke="url(#gg)" stroke-width="3.4"/><path d="M20.5,42.5 L26.5,44.8 L21.5,48.5 Z" fill="#3a8a3a"/><path d="M38.2,37.2 A5,5 0 1 1 39.8,45.2" fill="none" stroke="url(#gg)" stroke-width="3.4"/><path d="M42.5,42.5 L36.5,44.8 L41.5,48.5 Z" fill="#3a8a3a"/><rect x="57.0" y="30" width="1.2" height="21" fill="#7a7a7a"/><rect x="132.0" y="30" width="1.2" height="21" fill="#7a7a7a"/><rect x="184.0" y="30" width="1.2" height="21" fill="#7a7a7a"/><path d="M74,41.5 L77,45" stroke="#b07a40" stroke-width="2.8" stroke-linecap="round"/><circle cx="70" cy="37.5" r="5.2" fill="url(#lens)" stroke="#a9c9ea" stroke-width="1"/><rect x="71.3" y="36.8" width="6.8" height="3.2" fill="#e8303a"/><rect x="72.3" y="37.8" width="4.8" height="1" fill="#ff9a9a"/><g fill="#58aa58"><path d="M87,33.5 L88.5,32 L91,34.5 L91,32.5 L93,32.5 L93,38 L87.5,38 L87.5,36 L89.5,36 Z"/><path d="M103,33.5 L101.5,32 L99,34.5 L99,32.5 L97,32.5 L97,38 L102.5,38 L102.5,36 L100.5,36 Z"/><path d="M87,46.5 L88.5,48 L91,45.5 L91,47.5 L93,47.5 L93,42 L87.5,42 L87.5,44 L89.5,44 Z"/><path d="M103,46.5 L101.5,48 L99,45.5 L99,47.5 L97,47.5 L97,42 L102.5,42 L102.5,44 L100.5,44 Z"/></g><path d="M119.5,41.5 L122.5,45" stroke="#b07a40" stroke-width="2.8" stroke-linecap="round"/><circle cx="115.5" cy="37.5" r="5.2" fill="url(#lens)" stroke="#a9c9ea" stroke-width="1"/><path d="M119,35 h2.6 v2.6 h2.6 v2.6 h-2.6 v2.6 h-2.6 v-2.6 h-2.6 v-2.6 h2.6 z" fill="#3f9a3f" stroke="#2f7f2f" stroke-width="0.5"/><path d="M140,40 L144.5,35.5 L144.5,38 L154,38 L154,42.5 L144.5,42.5 L144.5,44.5 Z" fill="url(#gg)" stroke="#3e8e3e" stroke-width="0.6"/><path d="M177,40 L172.5,35.5 L172.5,38 L163,38 L163,42.5 L172.5,42.5 L172.5,44.5 Z" fill="#c8c8c8" stroke="#b4b4b4" stroke-width="0.6"/><circle cx="555" cy="38" r="5.2" fill="#d4e6f4" stroke="#9ab8cf" stroke-width="1"/><rect x="552.5" y="42.5" width="5" height="4" fill="#909090"/><rect x="569" y="30" width="1" height="21" fill="#808080"/><path d="M528,38 L531.5,41.5 L535,38" fill="none" stroke="#404040" stroke-width="1.6"/><path d="M852,38 L855.5,41.5 L859,38" fill="none" stroke="#404040" stroke-width="1.6"/></svg><div class="abs btnact" style="left:238px;top:29px;width:32px;height:22px"></div><div class="abs lbl" style="left:243px;top:33px">Top</div><div class="abs lbl" style="left:275px;top:33px">Bottom</div><div class="abs lbl" style="left:374px;top:33px">Parts:</div><div class="abs combo" style="left:408px;top:29px;width:135px;height:23px"></div><div class="abs" style="left:411px;top:32px;width:112px;height:16px;background:#ffb6c1"></div><div class="abs lbl" style="left:411px;top:33px">PUZ4</div><div class="abs lbl" style="left:591px;top:33px">Nets:</div><div class="abs combo" style="left:623px;top:29px;width:244px;height:23px"></div><svg class="abs" style="left:0;top:0" width="900" height="60"><rect x="4" y="31" width="2" height="2" fill="#9a9a9a"/><rect x="5" y="32" width="1" height="1" fill="#fff"/><rect x="4" y="35" width="2" height="2" fill="#9a9a9a"/><rect x="5" y="36" width="1" height="1" fill="#fff"/><rect x="4" y="39" width="2" height="2" fill="#9a9a9a"/><rect x="5" y="40" width="1" height="1" fill="#fff"/><rect x="4" y="43" width="2" height="2" fill="#9a9a9a"/><rect x="5" y="44" width="1" height="1" fill="#fff"/><rect x="4" y="47" width="2" height="2" fill="#9a9a9a"/><rect x="5" y="48" width="1" height="1" fill="#fff"/><defs><linearGradient id="gg" x1="0" y1="0" x2="0" y2="1"><stop offset="0" stop-color="#9fd89f"/><stop offset="1" stop-color="#3c913c"/></linearGradient><radialGradient id="lens" cx="0.4" cy="0.4" r="0.6"><stop offset="0" stop-color="#f4f9ff"/><stop offset="1" stop-color="#b9d6f2"/></radialGradient></defs><path d="M24.8,37.2 A5,5 0 1 0 23.2,45.2" fill="none" stroke="url(#gg)" stroke-width="3.4"/><path d="M20.5,42.5 L26.5,44.8 L21.5,48.5 Z" fill="#3a8a3a"/><path d="M38.2,37.2 A5,5 0 1 1 39.8,45.2" fill="none" stroke="url(#gg)" stroke-width="3.4"/><path d="M42.5,42.5 L36.5,44.8 L41.5,48.5 Z" fill="#3a8a3a"/><rect x="57.0" y="30" width="1.2" height="21" fill="#7a7a7a"/><rect x="132.0" y="30" width="1.2" height="21" fill="#7a7a7a"/><rect x="184.0" y="30" width="1.2" height="21" fill="#7a7a7a"/><path d="M74,41.5 L77,45" stroke="#b07a40" stroke-width="2.8" stroke-linecap="round"/><circle cx="70" cy="37.5" r="5.2" fill="url(#lens)" stroke="#a9c9ea" stroke-width="1"/><rect x="71.3" y="36.8" width="6.8" height="3.2" fill="#e8303a"/><rect x="72.3" y="37.8" width="4.8" height="1" fill="#ff9a9a"/><g fill="#58aa58"><path d="M87,33.5 L88.5,32 L91,34.5 L91,32.5 L93,32.5 L93,38 L87.5,38 L87.5,36 L89.5,36 Z"/><path d="M103,33.5 L101.5,32 L99,34.5 L99,32.5 L97,32.5 L97,38 L102.5,38 L102.5,36 L100.5,36 Z"/><path d="M87,46.5 L88.5,48 L91,45.5 L91,47.5 L93,47.5 L93,42 L87.5,42 L87.5,44 L89.5,44 Z"/><path d="M103,46.5 L101.5,48 L99,45.5 L99,47.5 L97,47.5 L97,42 L102.5,42 L102.5,44 L100.5,44 Z"/></g><path d="M119.5,41.5 L122.5,45" stroke="#b07a40" stroke-width="2.8" stroke-linecap="round"/><circle cx="115.5" cy="37.5" r="5.2" fill="url(#lens)" stroke="#a9c9ea" stroke-width="1"/><path d="M119,35 h2.6 v2.6 h2.6 v2.6 h-2.6 v2.6 h-2.6 v-2.6 h-2.6 v-2.6 h2.6 z" fill="#3f9a3f" stroke="#2f7f2f" stroke-width="0.5"/><path d="M140,40 L144.5,35.5 L144.5,38 L154,38 L154,42.5 L144.5,42.5 L144.5,44.5 Z" fill="url(#gg)" stroke="#3e8e3e" stroke-width="0.6"/><path d="M177,40 L172.5,35.5 L172.5,38 L163,38 L163,42.5 L172.5,42.5 L172.5,44.5 Z" fill="#c8c8c8" stroke="#b4b4b4" stroke-width="0.6"/><circle cx="555" cy="38" r="5.2" fill="#d4e6f4" stroke="#9ab8cf" stroke-width="1"/><rect x="552.5" y="42.5" width="5" height="4" fill="#909090"/><rect x="569" y="30" width="1" height="21" fill="#808080"/><path d="M528,38 L531.5,41.5 L535,38" fill="none" stroke="#404040" stroke-width="1.6"/><path d="M852,38 L855.5,41.5 L859,38" fill="none" stroke="#404040" stroke-width="1.6"/></svg><div class="abs tab" style="left:2px;top:61px;width:59px;height:20px"></div><div class="abs lbl" style="left:8px;top:66px">Главная</div><div class="abs" style="left:0;top:81px;width:1574px;height:1px;background:#b0b0b0"></div><div class="abs" style="left:0;top:82px;width:1574px;height:908px;background:#fff;border-right:1px solid #b4b4b4;border-bottom:1px solid #b4b4b4;box-sizing:border-box"></div><div class="abs" style="left:0;top:82px;width:1px;height:908px;background:#b4b4b4"></div><div class="abs tabsel" style="left:61px;top:59px;width:158px;height:23px"></div><svg class="abs" style="left:4px;top:83px;background:#000" width="1568" height="904" viewBox="4 83 1568 904"><path d="M149.0,300.0 L149.0,131.5 Q149.0,127.5 153.0,127.5 L259.0,127.5 Q263.0,127.5 263.0,123.5 L263.0,99.3 Q263.0,95.3 267.0,95.3 L298.1,95.3 Q300.0,95.3 301.5,94.1 L301.5,94.1 Q303.0,92.9 304.9,92.9 L312.0,92.9 Q316.0,92.9 316.0,96.9 L316.0,123.3 Q316.0,127.3 320.0,127.3 L382.8,127.3 Q386.8,127.3 386.8,123.3 L386.8,96.9 Q386.8,92.9 390.8,92.9 L397.7,92.9 Q401.7,92.9 401.7,96.9 L401.7,98.8 Q401.7,102.8 405.7,102.8 L413.5,102.8 Q417.5,102.8 417.5,106.8 L417.5,143.5 Q417.5,147.5 421.5,147.5 L474.5,147.5 Q478.5,147.5 478.5,143.5 L478.5,107.5 Q478.5,103.5 482.5,103.5 L493.5,103.5 Q497.5,103.5 497.5,99.5 L497.5,99.5 Q497.5,95.5 501.5,95.4 L515.8,95.1 Q519.0,95.0 519.0,91.8 L519.0,91.8 Q519.0,88.6 522.2,88.6 L527.5,88.6 Q531.5,88.6 531.5,92.6 L531.5,108.9 Q531.5,112.9 535.5,112.9 L570.0,112.9 Q574.0,112.9 574.0,108.9 L574.0,92.6 Q574.0,88.6 578.0,88.6 L581.8,88.6 Q585.0,88.6 585.0,91.8 L585.0,91.8 Q585.0,95.0 588.2,95.1 L596.8,95.3 Q600.8,95.4 600.8,99.4 L600.8,141.5 Q600.8,145.5 604.8,145.5 L667.8,145.5 Q671.8,145.5 671.8,141.5 L671.8,100.0 Q671.8,96.0 675.8,96.0 L711.0,96.0 Q715.0,96.0 715.0,100.0 L715.0,132.0 Q715.0,136.0 719.0,136.0 L871.0,136.0 Q875.0,136.0 875.0,140.0 L875.0,440.0  A186,190 0 0 0 1060,630.5 L1060.0,630.5 L1263.0,630.5 Q1267.0,630.5 1267.0,626.5 L1267.0,608.5 Q1267.0,604.5 1271.0,604.5 L1311.0,604.5 Q1315.0,604.5 1315.0,608.5 L1315.0,636.0 Q1315.0,640.0 1311.7,642.2 L1309.3,643.8 Q1306.0,646.0 1302.0,646.0 L1266.0,646.0 Q1262.0,646.0 1262.0,650.0 L1262.0,705.0 Q1262.0,709.0 1266.0,709.0 L1302.0,709.0 Q1306.0,709.0 1309.0,711.6 L1311.0,713.4 Q1314.0,716.0 1314.0,720.0 L1314.0,722.0 Q1314.0,726.0 1310.3,727.4 L1309.7,727.6 Q1306.0,729.0 1306.0,733.0 L1306.0,748.0 Q1306.0,752.0 1309.9,753.0 L1310.1,753.0 Q1314.0,754.0 1314.0,758.0 L1314.0,761.0 Q1314.0,765.0 1310.0,765.0 L1271.4,765.0 Q1268.0,765.0 1265.0,766.5 L1265.0,766.5 Q1262.0,768.0 1262.0,771.4 L1262.0,792.0 Q1262.0,796.0 1265.9,796.7 L1275.1,798.3 Q1279.0,799.0 1283.0,799.0 L1310.0,799.0 Q1314.0,799.0 1314.0,803.0 L1314.0,810.5 Q1314.0,814.5 1310.0,814.5 L1237.0,814.5 Q1233.0,814.5 1233.0,818.5 L1233.0,846.5 Q1233.0,850.5 1229.0,850.5 L1138.0,850.5 Q1134.0,850.5 1134.0,846.5 L1134.0,826.3 Q1134.0,822.3 1130.0,822.3 L1047.0,822.3 Q1043.0,822.3 1042.1,826.2 L1041.9,827.1 Q1041.0,831.0 1037.0,831.0 L1026.9,831.0 Q1023.0,831.0 1022.0,834.8 L1022.0,834.8 Q1021.0,838.5 1017.1,838.5 L859.0,838.5 Q855.0,838.5 855.0,842.5 L855.0,846.5 Q855.0,850.5 851.0,850.5 L382.0,850.5 Q378.0,850.5 378.0,846.5 L378.0,833.5 Q378.0,829.5 374.0,829.5 L296.6,829.5 Q292.6,829.5 292.6,833.5 L292.6,846.5 Q292.6,850.5 288.6,850.5 L124.0,850.5 Q120.0,850.5 120.0,846.5 L120.0,835.6 Q120.0,831.6 116.0,831.6 L74.0,831.6 Q70.0,831.6 70.0,835.6 L70.0,846.5 Q70.0,850.5 66.0,850.5 L18.6,850.5 Q14.6,850.5 14.6,846.5 L14.6,622.0  C90,595 128,545 139.4,495 L149,491 Z" fill="none" stroke="#008000" stroke-width="2" transform="translate(1332.6 7.8) scale(-1 1)"/><g transform="translate(1332.6 7.8) scale(-1 1)"><path d="M27,615.5 Q36,624 47,606.5" fill="none" stroke="#008000" stroke-width="1.5"/><path d="M923,570 Q924,582 935,580" fill="none" stroke="#008000" stroke-width="1.5"/></g><path d="M768.5,535H807.5M787.5,516V555" stroke="#b08080" stroke-width="1"/><rect x="783.5" y="228.9" width="24" height="26" fill="none" stroke="#cfcfcf" stroke-width="1"/><text x="795.5" y="245.2" font-size="9.1" fill="#8e8e8e" stroke="#000" stroke-width="0.29" text-anchor="middle" textLength="17" lengthAdjust="spacingAndGlyphs">SW1</text><circle cx="785.5" cy="231" r="1" fill="none" stroke="#aaa" stroke-width="0.8"/><circle cx="805.5" cy="231" r="1" fill="none" stroke="#aaa" stroke-width="0.8"/><circle cx="785.5" cy="253" r="1" fill="none" stroke="#aaa" stroke-width="0.8"/><circle cx="805.5" cy="253" r="1" fill="none" stroke="#aaa" stroke-width="0.8"/><rect x="754.5" y="759.9" width="74.4" height="73.6" fill="none" stroke="#cfcfcf" stroke-width="1"/><path d="M760,765 V828 M823,765 V828 M763,762 H820 M763,831.5 H820" stroke="#9a9a9a" stroke-width="2" stroke-dasharray="1 0.6"/><text x="791.8" y="803.6" font-size="17.3" fill="#8e8e8e" stroke="#000" stroke-width="0.55" text-anchor="middle" textLength="47.3" lengthAdjust="spacingAndGlyphs">U5801</text><rect x="121.9" y="716" width="30" height="30" fill="none" stroke="#cfcfcf" stroke-width="1"/><circle cx="137" cy="731" r="11" fill="none" stroke="#8a8a8a"/><text x="137" y="735.2" font-size="11.9" fill="#8a8a8a" stroke="#000" stroke-width="0.38" text-anchor="middle" textLength="19" lengthAdjust="spacingAndGlyphs">UA1</text><path d="M124,719v24M149.5,719v24M125,718.5h24M125,744h24" stroke="#a0a0a0" stroke-width="1.4" stroke-dasharray="1 0.7"/><rect x="813.2" y="594" width="41" height="12.1" fill="none" stroke="#cfcfcf" stroke-width="1"/><text x="833.7" y="602.5" font-size="7.0" fill="#8e8e8e" stroke="#000" stroke-width="0.22" text-anchor="middle" textLength="26" lengthAdjust="spacingAndGlyphs">CD2410</text><circle cx="821" cy="600" r="4.5" fill="none" stroke="#999" stroke-width="0.8"/><circle cx="846" cy="600" r="4.5" fill="none" stroke="#999" stroke-width="0.8"/><circle cx="934.7" cy="146.8" r="3.3" fill="none" stroke="#00a0b0" stroke-width="1"/><circle cx="139" cy="832.3" r="3.3" fill="none" stroke="#00a0b0" stroke-width="1"/><rect x="654.5" y="397.9" width="11.4" height="41" fill="none" stroke="#cfcfcf" stroke-width="1"/><text x="660.2" y="421.1" font-size="7.7" fill="#8e8e8e" stroke="#000" stroke-width="0.25" text-anchor="middle" textLength="26" lengthAdjust="spacingAndGlyphs" transform="rotate(-90 660.2 418.4)">PCZ220</text><circle cx="660.2" cy="403.5" r="5" fill="none" stroke="#999" stroke-width="0.8"/><circle cx="660.2" cy="433" r="5" fill="none" stroke="#999" stroke-width="0.8"/><rect x="672.2" y="422.8" width="41" height="11.4" fill="none" stroke="#cfcfcf" stroke-width="1"/><text x="692.7" y="431.2" font-size="7.7" fill="#8e8e8e" stroke="#000" stroke-width="0.25" text-anchor="middle" textLength="26" lengthAdjust="spacingAndGlyphs">PCZ111</text><rect x="724.5" y="422.8" width="41" height="11.4" fill="none" stroke="#cfcfcf" stroke-width="1"/><text x="745" y="431.2" font-size="7.7" fill="#8e8e8e" stroke="#000" stroke-width="0.25" text-anchor="middle" textLength="26" lengthAdjust="spacingAndGlyphs">PCZ115</text><circle cx="678" cy="428.5" r="5" fill="none" stroke="#999" stroke-width="0.8"/><circle cx="707" cy="428.5" r="5" fill="none" stroke="#999" stroke-width="0.8"/><circle cx="730" cy="428.5" r="5" fill="none" stroke="#999" stroke-width="0.8"/><circle cx="759" cy="428.5" r="5" fill="none" stroke="#999" stroke-width="0.8"/><rect x="906.5" y="331" width="11.5" height="13" fill="none" stroke="#cfcfcf" stroke-width="1"/><rect x="909" y="333.5" width="6.5" height="8" fill="none" stroke="#a0a0a0" stroke-width="1.2" stroke-dasharray="1 0.8"/><circle cx="912.2" cy="337.5" r="1" fill="#aaa"/><path d="M687.5,396.5h9v4h-9zM697.5,396.5h9v4h-9zM708.5,396.5h9v4h-9zM718.5,396.5h9v4h-9zM729.5,396.5h9v4h-9zM739.5,396.5h9v4h-9zM750.5,396.5h9v4h-9zM687.5,401.5h9v4h-9zM697.5,401.5h9v4h-9zM708.5,401.5h9v4h-9zM718.5,401.5h9v4h-9zM729.5,401.5h9v4h-9zM739.5,401.5h9v4h-9zM750.5,401.5h9v4h-9zM687.5,407.5h9v4h-9zM697.5,407.5h9v4h-9zM708.5,407.5h9v4h-9zM718.5,407.5h9v4h-9zM729.5,407.5h9v4h-9zM739.5,407.5h9v4h-9zM750.5,407.5h9v4h-9zM687.5,412.5h9v4h-9zM697.5,412.5h9v4h-9zM708.5,412.5h9v4h-9zM718.5,412.5h9v4h-9zM729.5,412.5h9v4h-9zM739.5,412.5h9v4h-9zM750.5,412.5h9v4h-9zM520.5,184.5h13v15h-13zM560.5,195.5h12v13h-12zM719.5,186.5h11v13h-11zM742.5,114.5h10v19h-10zM803.5,162.5h16v11h-16zM786.5,292.5h15v11h-15zM846.5,292.5h11v11h-11zM816.5,366.5h9v13h-9zM780.5,290.5h21v15h-21zM515.5,522.5h11v13h-11zM96.5,678.5h17v13h-17zM213.5,769.5h9v10h-9zM236.5,769.5h9v10h-9zM123.5,796.5h13v11h-13zM145.5,800.5h11v9h-11zM1231.5,783.5h9v12h-9zM213.5,720.5h6v19h-6zM215.5,723.5h2v13h-2zM984.5,580.5h6v23h-6zM986.5,583.5h2v17h-2zM1023.5,580.5h6v23h-6zM1025.5,583.5h2v17h-2zM1062.5,580.5h6v23h-6zM1064.5,583.5h2v17h-2zM1138.5,577.5h6v22h-6zM1140.5,580.5h2v16h-2zM562.5,275.5h6v18h-6zM564.5,278.5h2v12h-2zM596.5,275.5h6v18h-6zM598.5,278.5h2v12h-2zM631.5,275.5h6v18h-6zM633.5,278.5h2v12h-2zM672.5,275.5h6v18h-6zM674.5,278.5h2v12h-2zM714.5,286.5h6v22h-6zM716.5,289.5h2v16h-2zM751.5,286.5h6v22h-6zM753.5,289.5h2v16h-2zM580.5,239.5h9v4h-9zM582.5,245.5h8v3h-8zM582.5,252.5h4v8h-4zM594.5,239.5h4v9h-4zM620.5,239.5h9v4h-9zM621.5,245.5h8v3h-8zM622.5,252.5h4v8h-4zM634.5,239.5h4v9h-4zM659.5,239.5h9v4h-9zM660.5,245.5h8v3h-8zM661.5,252.5h4v8h-4zM673.5,239.5h4v9h-4zM698.5,239.5h9v4h-9zM699.5,245.5h8v3h-8zM700.5,252.5h4v8h-4zM712.5,239.5h4v9h-4zM556.5,239.5h4v9h-4zM562.5,296.5h7v3h-7zM597.5,296.5h7v3h-7zM632.5,296.5h7v3h-7zM673.5,296.5h7v3h-7zM1048.5,508.5h10v4h-10zM1048.5,514.5h10v4h-10zM1048.5,519.5h10v4h-10zM1048.5,525.5h10v4h-10zM1048.5,530.5h10v4h-10zM945.5,541.5h10v4h-10zM945.5,546.5h10v4h-10zM945.5,552.5h10v4h-10zM945.5,557.5h10v4h-10zM1073.5,542.5h10v4h-10zM1073.5,548.5h10v4h-10zM1073.5,553.5h10v4h-10zM884.5,631.5h10v4h-10zM884.5,637.5h10v4h-10zM884.5,642.5h10v4h-10zM1285.5,704.5h10v4h-10zM1285.5,710.5h10v4h-10zM1285.5,715.5h10v4h-10zM1285.5,721.5h10v4h-10zM1285.5,726.5h10v4h-10zM929.5,355.5h10v4h-10zM929.5,361.5h10v4h-10zM929.5,367.5h10v4h-10zM929.5,372.5h10v4h-10zM490.5,388.5h10v4h-10zM490.5,394.5h10v4h-10zM490.5,399.5h10v4h-10zM759.5,743.5h4v7h-4zM765.5,743.5h4v7h-4zM771.5,743.5h4v7h-4zM777.5,743.5h4v7h-4zM783.5,743.5h4v7h-4zM788.5,743.5h4v7h-4zM794.5,743.5h4v7h-4zM800.5,743.5h4v7h-4zM806.5,743.5h4v7h-4zM812.5,743.5h4v7h-4zM817.5,743.5h4v7h-4zM823.5,743.5h4v7h-4zM535.5,197.5h9v4h-9zM494.5,198.5h9v4h-9zM531.5,169.5h9v4h-9zM517.5,202.5h7v3h-7zM548.5,199.5h4v9h-4zM487.5,173.5h3v7h-3zM532.5,179.5h7v3h-7zM512.5,177.5h7v3h-7zM484.5,188.5h8v4h-8zM483.5,182.5h8v4h-8zM499.5,169.5h4v7h-4zM537.5,205.5h8v4h-8zM497.5,180.5h3v7h-3zM546.5,183.5h4v7h-4zM633.5,176.5h4v9h-4zM641.5,189.5h4v7h-4zM635.5,187.5h4v7h-4zM646.5,177.5h4v7h-4zM650.5,187.5h4v9h-4zM639.5,173.5h4v8h-4zM733.5,190.5h8v4h-8zM735.5,178.5h6v3h-6zM689.5,180.5h7v3h-7zM702.5,171.5h4v9h-4zM687.5,197.5h7v3h-7zM685.5,168.5h9v4h-9zM694.5,189.5h6v3h-6zM700.5,202.5h6v3h-6zM705.5,189.5h4v7h-4zM732.5,168.5h7v3h-7zM719.5,201.5h6v3h-6zM711.5,170.5h6v3h-6zM774.5,150.5h3v7h-3zM770.5,141.5h9v4h-9zM782.5,144.5h4v7h-4zM767.5,151.5h4v7h-4zM780.5,157.5h3v7h-3zM770.5,160.5h6v3h-6zM786.5,153.5h4v9h-4zM765.5,142.5h3v7h-3zM788.5,145.5h3v6h-3zM789.5,175.5h8v4h-8zM789.5,184.5h4v7h-4zM796.5,188.5h3v6h-3zM516.5,278.5h4v8h-4zM488.5,255.5h4v9h-4zM496.5,263.5h8v4h-8zM536.5,254.5h4v8h-4zM524.5,259.5h8v4h-8zM530.5,282.5h7v7h-7zM545.5,248.5h3v7h-3zM489.5,283.5h7v4h-7zM502.5,250.5h4v7h-4zM505.5,284.5h7v3h-7zM510.5,250.5h7v3h-7zM509.5,259.5h8v4h-8zM499.5,269.5h9v4h-9zM517.5,270.5h8v4h-8zM546.5,269.5h3v7h-3zM489.5,240.5h7v7h-7zM528.5,245.5h7v4h-7zM488.5,274.5h7v4h-7zM538.5,273.5h6v3h-6zM504.5,275.5h3v6h-3zM507.5,241.5h7v4h-7zM543.5,279.5h4v7h-4zM755.5,257.5h9v4h-9zM718.5,261.5h3v6h-3zM747.5,265.5h7v3h-7zM733.5,268.5h7v3h-7zM730.5,259.5h7v4h-7zM718.5,255.5h9v4h-9zM793.5,162.5h8v4h-8zM795.5,157.5h6v3h-6zM829.5,152.5h7v3h-7zM820.5,187.5h3v7h-3zM811.5,189.5h4v9h-4zM805.5,201.5h8v4h-8zM827.5,181.5h3v7h-3zM797.5,145.5h6v3h-6zM811.5,184.5h6v3h-6zM810.5,146.5h8v4h-8zM827.5,170.5h3v6h-3zM820.5,153.5h3v6h-3zM830.5,157.5h4v9h-4zM782.5,182.5h4v7h-4zM857.5,206.5h6v3h-6zM858.5,198.5h6v3h-6zM848.5,183.5h6v3h-6zM846.5,204.5h7v3h-7zM846.5,194.5h8v4h-8zM867.5,189.5h3v7h-3zM861.5,183.5h9v4h-9zM891.5,195.5h8v4h-8zM893.5,190.5h7v3h-7zM929.5,190.5h3v6h-3zM934.5,188.5h4v7h-4zM953.5,189.5h3v6h-3zM1040.5,156.5h7v4h-7zM1040.5,150.5h7v4h-7zM1043.5,176.5h7v3h-7zM1109.5,195.5h7v3h-7zM1059.5,213.5h4v8h-4zM989.5,223.5h6v3h-6zM890.5,236.5h8v4h-8zM887.5,229.5h9v4h-9zM817.5,237.5h7v4h-7zM826.5,237.5h4v8h-4zM1072.5,258.5h9v4h-9zM993.5,273.5h3v7h-3zM1039.5,275.5h7v4h-7zM1020.5,274.5h3v6h-3zM1045.5,258.5h3v6h-3zM991.5,285.5h6v3h-6zM983.5,264.5h4v7h-4zM1056.5,267.5h4v9h-4zM1072.5,274.5h4v9h-4zM1014.5,267.5h3v7h-3zM961.5,263.5h7v4h-7zM1023.5,269.5h7v3h-7zM1028.5,264.5h6v3h-6zM970.5,260.5h4v9h-4zM944.5,283.5h7v3h-7zM956.5,283.5h7v3h-7zM965.5,273.5h9v4h-9zM1056.5,258.5h6v3h-6zM1063.5,264.5h7v4h-7zM997.5,261.5h4v9h-4zM860.5,272.5h4v8h-4zM852.5,270.5h4v9h-4zM852.5,281.5h6v3h-6zM860.5,267.5h6v3h-6zM499.5,291.5h8v4h-8zM488.5,290.5h4v9h-4zM539.5,295.5h8v4h-8zM500.5,297.5h6v3h-6zM528.5,293.5h6v3h-6zM524.5,299.5h7v4h-7zM543.5,301.5h4v7h-4zM489.5,301.5h6v3h-6zM517.5,298.5h4v8h-4zM518.5,291.5h7v4h-7zM534.5,305.5h7v3h-7zM499.5,303.5h8v4h-8zM840.5,294.5h3v6h-3zM532.5,349.5h4v9h-4zM496.5,355.5h4v8h-4zM514.5,361.5h7v4h-7zM507.5,350.5h4v9h-4zM513.5,380.5h8v4h-8zM539.5,357.5h4v9h-4zM537.5,368.5h4v7h-4zM483.5,360.5h9v4h-9zM502.5,365.5h7v3h-7zM523.5,347.5h3v6h-3zM490.5,377.5h9v4h-9zM527.5,376.5h4v8h-4zM505.5,374.5h4v9h-4zM533.5,381.5h7v3h-7zM614.5,425.5h9v4h-9zM638.5,411.5h3v6h-3zM593.5,371.5h9v4h-9zM642.5,380.5h3v6h-3zM627.5,390.5h9v4h-9zM597.5,434.5h8v4h-8zM622.5,439.5h9v4h-9zM627.5,417.5h7v3h-7zM620.5,362.5h4v8h-4zM601.5,390.5h4v7h-4zM746.5,371.5h7v4h-7zM719.5,362.5h7v7h-7zM673.5,362.5h4v7h-4zM680.5,387.5h3v6h-3zM728.5,368.5h7v3h-7zM703.5,367.5h3v7h-3zM733.5,382.5h4v9h-4zM720.5,372.5h4v9h-4zM752.5,381.5h7v3h-7zM752.5,356.5h9v4h-9zM663.5,441.5h7v3h-7zM713.5,440.5h3v7h-3zM682.5,441.5h8v4h-8zM673.5,440.5h4v7h-4zM704.5,444.5h6v3h-6zM693.5,443.5h6v3h-6zM749.5,440.5h4v9h-4zM743.5,440.5h4v9h-4zM763.5,455.5h4v9h-4zM807.5,427.5h4v7h-4zM801.5,486.5h7v4h-7zM803.5,468.5h3v7h-3zM794.5,472.5h7v3h-7zM787.5,404.5h3v6h-3zM782.5,440.5h7v7h-7zM806.5,478.5h8v4h-8zM782.5,398.5h3v7h-3zM811.5,444.5h7v3h-7zM789.5,478.5h4v8h-4zM777.5,409.5h4v9h-4zM799.5,450.5h4v9h-4zM802.5,402.5h3v7h-3zM786.5,420.5h4v7h-4zM758.5,441.5h4v8h-4zM771.5,417.5h4v8h-4zM779.5,461.5h11v11h-11zM757.5,456.5h3v7h-3zM767.5,394.5h7v7h-7zM810.5,408.5h11v11h-11zM801.5,397.5h6v3h-6zM769.5,430.5h6v3h-6zM792.5,431.5h7v3h-7zM772.5,404.5h6v3h-6zM792.5,416.5h9v4h-9zM796.5,462.5h4v7h-4zM764.5,470.5h9v4h-9zM803.5,412.5h3v6h-3zM760.5,490.5h7v4h-7zM767.5,478.5h4v8h-4zM809.5,459.5h8v4h-8zM780.5,430.5h7v4h-7zM792.5,438.5h3v6h-3zM806.5,392.5h7v3h-7zM783.5,491.5h6v3h-6zM759.5,481.5h6v3h-6zM792.5,422.5h7v4h-7zM763.5,405.5h3v7h-3zM772.5,441.5h4v8h-4zM793.5,407.5h6v3h-6zM769.5,489.5h7v4h-7zM795.5,481.5h4v7h-4zM777.5,484.5h7v3h-7zM800.5,440.5h4v7h-4zM811.5,487.5h4v8h-4zM776.5,390.5h7v3h-7zM809.5,398.5h3v7h-3zM834.5,425.5h6v3h-6zM834.5,442.5h3v7h-3zM826.5,434.5h4v8h-4zM847.5,440.5h8v4h-8zM844.5,432.5h8v4h-8zM848.5,419.5h7v3h-7zM827.5,424.5h3v6h-3zM854.5,447.5h7v4h-7zM856.5,454.5h6v3h-6zM839.5,432.5h3v6h-3zM857.5,434.5h6v3h-6zM864.5,423.5h3v7h-3zM896.5,327.5h6v3h-6zM894.5,341.5h7v3h-7zM923.5,328.5h4v8h-4zM892.5,333.5h8v4h-8zM920.5,343.5h6v3h-6zM894.5,346.5h7v4h-7zM1023.5,320.5h8v4h-8zM1009.5,317.5h7v3h-7zM1067.5,297.5h4v7h-4zM1040.5,312.5h3v7h-3zM1066.5,324.5h7v4h-7zM1017.5,299.5h3v7h-3zM1001.5,307.5h7v4h-7zM1050.5,325.5h7v3h-7zM1026.5,296.5h4v9h-4zM1075.5,299.5h7v4h-7zM1001.5,326.5h7v3h-7zM949.5,303.5h4v9h-4zM958.5,298.5h4v9h-4zM976.5,304.5h4v8h-4zM1048.5,310.5h4v8h-4zM982.5,319.5h7v7h-7zM1045.5,300.5h6v3h-6zM1067.5,308.5h9v4h-9zM994.5,318.5h4v8h-4zM1010.5,293.5h4v9h-4zM1075.5,324.5h6v3h-6zM1070.5,316.5h9v4h-9zM984.5,301.5h6v3h-6zM1035.5,303.5h3v7h-3zM951.5,319.5h4v8h-4zM968.5,297.5h4v7h-4zM986.5,312.5h9v4h-9zM959.5,321.5h8v4h-8zM1002.5,373.5h7v4h-7zM961.5,371.5h4v7h-4zM1025.5,353.5h7v3h-7zM1045.5,431.5h3v7h-3zM1033.5,384.5h4v7h-4zM1008.5,346.5h7v4h-7zM1029.5,436.5h9v9h-9zM1057.5,376.5h4v8h-4zM1019.5,426.5h8v4h-8zM989.5,440.5h7v4h-7zM971.5,407.5h3v6h-3zM1022.5,380.5h7v4h-7zM985.5,389.5h7v3h-7zM997.5,466.5h6v3h-6zM969.5,436.5h6v3h-6zM982.5,445.5h4v9h-4zM969.5,378.5h4v7h-4zM1043.5,443.5h7v7h-7zM1004.5,352.5h3v6h-3zM983.5,469.5h3v6h-3zM1025.5,488.5h3v6h-3zM1044.5,397.5h4v7h-4zM1060.5,478.5h7v3h-7zM1027.5,460.5h8v8h-8zM1024.5,397.5h8v4h-8zM987.5,398.5h8v4h-8zM966.5,391.5h7v3h-7zM994.5,420.5h6v3h-6zM950.5,419.5h6v3h-6zM959.5,476.5h6v3h-6zM946.5,351.5h6v3h-6zM1035.5,372.5h3v7h-3zM958.5,398.5h7v7h-7zM1057.5,370.5h6v3h-6zM1036.5,479.5h8v4h-8zM1008.5,483.5h9v4h-9zM1036.5,407.5h6v3h-6zM971.5,469.5h6v3h-6zM1047.5,476.5h4v9h-4zM986.5,457.5h8v4h-8zM948.5,368.5h8v4h-8zM983.5,362.5h8v4h-8zM1060.5,348.5h3v7h-3zM957.5,447.5h3v6h-3zM974.5,488.5h7v3h-7zM1057.5,411.5h7v4h-7zM987.5,370.5h8v4h-8zM1009.5,424.5h8v4h-8zM977.5,458.5h7v4h-7zM993.5,484.5h6v3h-6zM1050.5,437.5h7v4h-7zM961.5,347.5h11v11h-11zM980.5,412.5h3v7h-3zM1034.5,347.5h4v9h-4zM986.5,339.5h9v4h-9zM1061.5,486.5h3v6h-3zM1005.5,404.5h9v4h-9zM1010.5,442.5h8v4h-8zM1040.5,368.5h8v4h-8zM1000.5,450.5h7v4h-7zM953.5,477.5h4v9h-4zM988.5,345.5h7v3h-7zM1020.5,445.5h4v9h-4zM1045.5,383.5h6v3h-6zM1013.5,336.5h8v4h-8zM967.5,482.5h7v4h-7zM1013.5,473.5h8v4h-8zM1022.5,408.5h7v3h-7zM953.5,492.5h7v3h-7zM1026.5,343.5h3v7h-3zM1054.5,343.5h3v7h-3zM1043.5,463.5h6v3h-6zM1041.5,417.5h4v8h-4zM1003.5,480.5h3v6h-3zM1065.5,346.5h3v6h-3zM1061.5,446.5h7v4h-7zM981.5,383.5h8v4h-8zM1002.5,430.5h7v3h-7zM959.5,462.5h6v3h-6zM1055.5,480.5h3v7h-3zM1023.5,386.5h6v3h-6zM947.5,387.5h6v3h-6zM981.5,351.5h7v3h-7zM1016.5,462.5h4v8h-4zM1019.5,421.5h7v3h-7zM1022.5,460.5h3v6h-3zM946.5,395.5h7v4h-7zM1006.5,390.5h7v4h-7zM1032.5,367.5h6v3h-6zM959.5,382.5h4v9h-4zM1050.5,403.5h7v3h-7zM1053.5,469.5h4v7h-4zM962.5,363.5h3v6h-3zM972.5,427.5h4v7h-4zM1025.5,481.5h7v3h-7zM953.5,467.5h9v4h-9zM1040.5,341.5h7v3h-7zM1063.5,392.5h3v7h-3zM946.5,446.5h3v7h-3zM1053.5,422.5h7v4h-7zM1111.5,441.5h9v4h-9zM1105.5,468.5h7v4h-7zM1136.5,374.5h4v9h-4zM1107.5,404.5h7v3h-7zM1146.5,427.5h7v3h-7zM1112.5,358.5h8v4h-8zM1118.5,458.5h3v6h-3zM1144.5,413.5h3v6h-3zM1100.5,414.5h8v4h-8zM1105.5,426.5h3v6h-3zM1150.5,353.5h4v8h-4zM1119.5,388.5h9v4h-9zM1146.5,453.5h8v4h-8zM1130.5,355.5h7v3h-7zM1100.5,353.5h4v8h-4zM1090.5,450.5h4v7h-4zM1143.5,469.5h3v7h-3zM1136.5,361.5h3v6h-3zM1136.5,340.5h4v8h-4zM1112.5,344.5h9v4h-9zM1110.5,393.5h3v6h-3zM1133.5,468.5h3v7h-3zM1132.5,407.5h8v4h-8zM1121.5,433.5h8v4h-8zM1110.5,436.5h6v3h-6zM1090.5,355.5h8v4h-8zM1136.5,443.5h7v4h-7zM1151.5,392.5h6v3h-6zM1093.5,428.5h9v4h-9zM1134.5,391.5h6v3h-6zM1105.5,448.5h3v7h-3zM1121.5,467.5h9v4h-9zM1098.5,441.5h3v6h-3zM1123.5,364.5h9v4h-9zM1095.5,464.5h4v9h-4zM1127.5,373.5h7v3h-7zM1125.5,397.5h8v4h-8zM1123.5,445.5h4v7h-4zM1112.5,475.5h9v4h-9zM1137.5,450.5h7v3h-7zM929.5,491.5h7v4h-7zM938.5,464.5h8v4h-8zM965.5,443.5h4v7h-4zM919.5,483.5h4v9h-4zM930.5,481.5h6v3h-6zM920.5,451.5h3v6h-3zM945.5,474.5h6v3h-6zM921.5,437.5h4v9h-4zM964.5,453.5h4v7h-4zM945.5,482.5h4v8h-4zM921.5,466.5h3v6h-3zM932.5,453.5h7v4h-7zM927.5,450.5h3v7h-3zM933.5,474.5h6v3h-6zM937.5,436.5h9v4h-9zM949.5,440.5h9v4h-9zM947.5,456.5h3v6h-3zM919.5,475.5h6v3h-6zM842.5,379.5h8v4h-8zM823.5,468.5h9v4h-9zM787.5,367.5h8v4h-8zM809.5,363.5h4v9h-4zM781.5,453.5h3v6h-3zM865.5,375.5h3v7h-3zM843.5,374.5h6v3h-6zM836.5,413.5h6v3h-6zM801.5,371.5h3v6h-3zM858.5,377.5h4v8h-4zM852.5,373.5h3v7h-3zM806.5,450.5h9v4h-9zM839.5,464.5h7v4h-7zM854.5,389.5h8v4h-8zM859.5,414.5h4v7h-4zM831.5,391.5h9v9h-9zM806.5,379.5h4v8h-4zM816.5,398.5h3v6h-3zM845.5,473.5h6v3h-6zM783.5,382.5h7v4h-7zM844.5,356.5h3v6h-3zM792.5,382.5h7v4h-7zM856.5,459.5h7v3h-7zM829.5,475.5h7v4h-7zM845.5,365.5h9v4h-9zM830.5,356.5h8v4h-8zM858.5,469.5h3v7h-3zM833.5,406.5h9v4h-9zM788.5,450.5h9v4h-9zM852.5,404.5h7v3h-7zM854.5,352.5h9v4h-9zM804.5,357.5h6v3h-6zM822.5,395.5h6v3h-6zM865.5,457.5h3v6h-3zM827.5,404.5h4v8h-4zM852.5,425.5h6v3h-6zM925.5,482.5h3v7h-3zM928.5,470.5h3v6h-3zM517.5,542.5h7v7h-7zM516.5,551.5h7v3h-7zM517.5,537.5h7v3h-7zM564.5,612.5h4v7h-4zM611.5,611.5h3v6h-3zM640.5,611.5h4v7h-4zM713.5,613.5h4v9h-4zM703.5,614.5h4v7h-4zM676.5,614.5h6v3h-6zM684.5,613.5h4v9h-4zM664.5,614.5h3v7h-3zM690.5,612.5h4v8h-4zM656.5,613.5h3v7h-3zM670.5,611.5h4v9h-4zM764.5,611.5h3v6h-3zM666.5,633.5h7v3h-7zM718.5,633.5h9v4h-9zM584.5,644.5h8v4h-8zM579.5,693.5h6v3h-6zM633.5,690.5h4v8h-4zM645.5,654.5h9v4h-9zM712.5,660.5h4v9h-4zM690.5,666.5h4v8h-4zM650.5,676.5h9v4h-9zM728.5,695.5h8v4h-8zM719.5,654.5h7v4h-7zM684.5,693.5h6v3h-6zM671.5,679.5h4v8h-4zM611.5,675.5h4v8h-4zM575.5,656.5h4v9h-4zM573.5,673.5h4v8h-4zM699.5,682.5h7v4h-7zM564.5,691.5h7v3h-7zM599.5,667.5h7v4h-7zM697.5,667.5h3v7h-3zM625.5,679.5h7v4h-7zM717.5,689.5h7v4h-7zM552.5,669.5h8v4h-8zM720.5,660.5h3v7h-3zM585.5,654.5h4v8h-4zM778.5,510.5h4v9h-4zM786.5,504.5h7v3h-7zM791.5,516.5h3v7h-3zM776.5,499.5h4v8h-4zM780.5,525.5h7v3h-7zM641.5,506.5h4v7h-4zM667.5,501.5h3v6h-3zM697.5,497.5h4v7h-4zM725.5,497.5h4v7h-4zM752.5,497.5h3v7h-3zM785.5,509.5h9v4h-9zM789.5,527.5h6v3h-6zM784.5,516.5h3v7h-3zM785.5,498.5h9v4h-9zM821.5,509.5h8v4h-8zM816.5,613.5h3v6h-3zM840.5,615.5h4v7h-4zM846.5,614.5h3v7h-3zM837.5,624.5h6v3h-6zM1087.5,625.5h6v3h-6zM1098.5,625.5h7v4h-7zM968.5,624.5h7v4h-7zM1076.5,617.5h3v7h-3zM1107.5,624.5h4v7h-4zM1056.5,626.5h8v4h-8zM996.5,618.5h7v4h-7zM1042.5,623.5h3v7h-3zM1012.5,627.5h7v3h-7zM1056.5,618.5h7v3h-7zM1028.5,624.5h4v7h-4zM971.5,616.5h9v4h-9zM985.5,616.5h8v4h-8zM1014.5,618.5h3v7h-3zM1099.5,615.5h3v7h-3zM978.5,623.5h4v7h-4zM1067.5,626.5h7v3h-7zM952.5,625.5h3v6h-3zM793.5,652.5h3v7h-3zM822.5,651.5h4v8h-4zM843.5,670.5h6v3h-6zM841.5,676.5h7v4h-7zM841.5,664.5h8v4h-8zM917.5,672.5h4v7h-4zM911.5,670.5h4v8h-4zM906.5,671.5h3v6h-3zM839.5,689.5h6v3h-6zM939.5,697.5h7v4h-7zM1185.5,655.5h8v4h-8zM1220.5,641.5h3v6h-3zM1200.5,641.5h8v4h-8zM1201.5,654.5h4v9h-4zM1219.5,672.5h9v4h-9zM1220.5,663.5h4v7h-4zM1229.5,655.5h3v7h-3zM1191.5,647.5h6v3h-6zM1194.5,668.5h4v9h-4zM1211.5,644.5h4v9h-4zM1231.5,638.5h8v4h-8zM1230.5,673.5h7v3h-7zM1273.5,651.5h7v4h-7zM1126.5,687.5h4v8h-4zM1132.5,685.5h8v8h-8zM161.5,732.5h9v9h-9zM157.5,720.5h4v7h-4zM130.5,755.5h7v3h-7zM171.5,743.5h3v6h-3zM106.5,720.5h3v7h-3zM101.5,707.5h3v7h-3zM172.5,705.5h4v7h-4zM156.5,757.5h7v4h-7zM173.5,723.5h4v7h-4zM112.5,734.5h4v9h-4zM139.5,763.5h4v8h-4zM116.5,757.5h8v4h-8zM108.5,763.5h7v4h-7zM178.5,714.5h3v7h-3zM159.5,711.5h3v7h-3zM145.5,756.5h8v4h-8zM100.5,746.5h3v7h-3zM105.5,757.5h6v3h-6zM108.5,747.5h7v4h-7zM111.5,708.5h7v3h-7zM167.5,762.5h4v8h-4zM167.5,754.5h3v6h-3zM104.5,735.5h4v7h-4zM134.5,766.5h3v6h-3zM111.5,720.5h8v4h-8zM150.5,765.5h3v7h-3zM132.5,705.5h4v7h-4zM139.5,706.5h9v4h-9zM124.5,707.5h3v6h-3zM163.5,722.5h8v4h-8zM131.5,749.5h7v4h-7zM178.5,737.5h3v7h-3zM213.5,741.5h6v3h-6zM248.5,743.5h7v3h-7zM304.5,770.5h6v3h-6zM240.5,787.5h4v8h-4zM220.5,784.5h3v6h-3zM227.5,783.5h3v7h-3zM213.5,793.5h6v3h-6zM240.5,781.5h7v3h-7zM221.5,792.5h7v4h-7zM97.5,793.5h7v3h-7zM117.5,812.5h7v3h-7zM133.5,809.5h7v3h-7zM115.5,796.5h4v9h-4zM142.5,811.5h7v4h-7zM126.5,809.5h4v8h-4zM139.5,797.5h4v9h-4zM119.5,832.5h6v3h-6zM174.5,832.5h7v3h-7zM706.5,708.5h9v4h-9zM735.5,705.5h4v9h-4zM670.5,706.5h6v3h-6zM725.5,717.5h3v6h-3zM670.5,716.5h8v4h-8zM698.5,715.5h7v7h-7zM657.5,712.5h4v8h-4zM688.5,706.5h7v4h-7zM725.5,705.5h8v4h-8zM734.5,724.5h7v4h-7zM648.5,705.5h4v9h-4zM717.5,708.5h3v6h-3zM726.5,787.5h3v6h-3zM739.5,774.5h4v9h-4zM729.5,800.5h3v6h-3zM730.5,830.5h9v4h-9zM728.5,775.5h4v9h-4zM732.5,793.5h9v4h-9zM730.5,810.5h6v3h-6zM740.5,817.5h3v7h-3zM732.5,818.5h6v3h-6zM738.5,802.5h4v7h-4zM724.5,811.5h3v6h-3zM736.5,836.5h8v4h-8zM736.5,767.5h7v3h-7zM727.5,823.5h7v3h-7zM795.5,704.5h4v8h-4zM681.5,704.5h3v7h-3zM707.5,723.5h7v4h-7zM733.5,716.5h6v3h-6zM724.5,712.5h7v3h-7zM725.5,725.5h6v3h-6zM802.5,736.5h7v4h-7zM791.5,736.5h8v4h-8zM851.5,721.5h7v4h-7zM844.5,719.5h4v8h-4zM861.5,721.5h3v7h-3zM846.5,816.5h4v9h-4zM848.5,799.5h6v3h-6zM841.5,771.5h7v4h-7zM848.5,828.5h4v8h-4zM837.5,796.5h3v6h-3zM837.5,807.5h4v9h-4zM853.5,818.5h4v8h-4zM850.5,770.5h4v9h-4zM850.5,807.5h6v3h-6zM843.5,805.5h4v7h-4zM842.5,786.5h9v4h-9zM851.5,763.5h8v4h-8zM837.5,832.5h8v4h-8zM844.5,759.5h4v9h-4zM899.5,727.5h7v3h-7zM933.5,734.5h4v7h-4zM936.5,744.5h4v7h-4zM927.5,736.5h3v7h-3zM927.5,746.5h3v7h-3zM935.5,704.5h4v7h-4zM1242.5,799.5h8v4h-8zM1270.5,709.5h6v3h-6zM1278.5,705.5h3v7h-3zM1264.5,704.5h4v8h-4z" fill="none" stroke="#dadada" stroke-width="1"/><path d="M689,398h2v1h-2zM693,398h2v1h-2zM699,398h2v1h-2zM703,398h2v1h-2zM710,398h2v1h-2zM714,398h2v1h-2zM720,398h2v1h-2zM724,398h2v1h-2zM731,398h2v1h-2zM735,398h2v1h-2zM741,398h2v1h-2zM745,398h2v1h-2zM752,398h2v1h-2zM756,398h2v1h-2zM689,403h2v1h-2zM693,403h2v1h-2zM699,403h2v1h-2zM703,403h2v1h-2zM710,403h2v1h-2zM714,403h2v1h-2zM720,403h2v1h-2zM724,403h2v1h-2zM731,403h2v1h-2zM735,403h2v1h-2zM741,403h2v1h-2zM745,403h2v1h-2zM752,403h2v1h-2zM756,403h2v1h-2zM689,409h2v1h-2zM693,409h2v1h-2zM699,409h2v1h-2zM703,409h2v1h-2zM710,409h2v1h-2zM714,409h2v1h-2zM720,409h2v1h-2zM724,409h2v1h-2zM731,409h2v1h-2zM735,409h2v1h-2zM741,409h2v1h-2zM745,409h2v1h-2zM752,409h2v1h-2zM756,409h2v1h-2zM689,414h2v1h-2zM693,414h2v1h-2zM699,414h2v1h-2zM703,414h2v1h-2zM710,414h2v1h-2zM714,414h2v1h-2zM720,414h2v1h-2zM724,414h2v1h-2zM731,414h2v1h-2zM735,414h2v1h-2zM741,414h2v1h-2zM745,414h2v1h-2zM752,414h2v1h-2zM756,414h2v1h-2zM522,185.5h2v2h-2zM530,185.5h2v2h-2zM522,196.5h2v2h-2zM530,196.5h2v2h-2zM562,196.5h2v2h-2zM569,196.5h2v2h-2zM562,205.5h2v2h-2zM569,205.5h2v2h-2zM721,187.5h2v2h-2zM727,187.5h2v2h-2zM721,196.5h2v2h-2zM727,196.5h2v2h-2zM744,115.5h2v2h-2zM749,115.5h2v2h-2zM744,130.5h2v2h-2zM749,130.5h2v2h-2zM805,163.5h2v2h-2zM816,163.5h2v2h-2zM805,170.5h2v2h-2zM816,170.5h2v2h-2zM788,293.5h2v2h-2zM798,293.5h2v2h-2zM788,300.5h2v2h-2zM798,300.5h2v2h-2zM848,293.5h2v2h-2zM854,293.5h2v2h-2zM848,300.5h2v2h-2zM854,300.5h2v2h-2zM818,367.5h2v2h-2zM822,367.5h2v2h-2zM818,376.5h2v2h-2zM822,376.5h2v2h-2zM782,291.5h2v2h-2zM798,291.5h2v2h-2zM782,302.5h2v2h-2zM798,302.5h2v2h-2zM517,523.5h2v2h-2zM523,523.5h2v2h-2zM517,532.5h2v2h-2zM523,532.5h2v2h-2zM98,679.5h2v2h-2zM110,679.5h2v2h-2zM98,688.5h2v2h-2zM110,688.5h2v2h-2zM215,770.5h2v2h-2zM219,770.5h2v2h-2zM215,776.5h2v2h-2zM219,776.5h2v2h-2zM238,770.5h2v2h-2zM242,770.5h2v2h-2zM238,776.5h2v2h-2zM242,776.5h2v2h-2zM125,797.5h2v2h-2zM133,797.5h2v2h-2zM125,804.5h2v2h-2zM133,804.5h2v2h-2zM147,801.5h2v2h-2zM153,801.5h2v2h-2zM147,806.5h2v2h-2zM153,806.5h2v2h-2zM1233,784.5h2v2h-2zM1237,784.5h2v2h-2zM1233,792.5h2v2h-2zM1237,792.5h2v2h-2zM214,721h5v2h-5zM214,737h5v2h-5zM985,581h5v2h-5zM985,601h5v2h-5zM1024,581h5v2h-5zM1024,601h5v2h-5zM1063,581h5v2h-5zM1063,601h5v2h-5zM1139,578h5v2h-5zM1139,597h5v2h-5zM563,276h5v2h-5zM563,291h5v2h-5zM597,276h5v2h-5zM597,291h5v2h-5zM632,276h5v2h-5zM632,291h5v2h-5zM673,276h5v2h-5zM673,291h5v2h-5zM715,287h5v2h-5zM715,306h5v2h-5zM752,287h5v2h-5zM752,306h5v2h-5zM582,241h2v1h-2zM586,241h2v1h-2zM584,247h2v0h-2zM587,247h2v0h-2zM584,254h1v2h-1zM584,257h1v2h-1zM596,241h1v2h-1zM596,245h1v2h-1zM622,241h2v1h-2zM626,241h2v1h-2zM623,247h2v0h-2zM626,247h2v0h-2zM624,254h1v2h-1zM624,257h1v2h-1zM636,241h1v2h-1zM636,245h1v2h-1zM661,241h2v1h-2zM665,241h2v1h-2zM662,247h2v0h-2zM665,247h2v0h-2zM663,254h1v2h-1zM663,257h1v2h-1zM675,241h1v2h-1zM675,245h1v2h-1zM700,241h2v1h-2zM704,241h2v1h-2zM701,247h2v0h-2zM704,247h2v0h-2zM702,254h1v2h-1zM702,257h1v2h-1zM714,241h1v2h-1zM714,245h1v2h-1zM558,241h1v2h-1zM558,245h1v2h-1zM564,298h2v0h-2zM566,298h2v0h-2zM599,298h2v0h-2zM601,298h2v0h-2zM634,298h2v0h-2zM636,298h2v0h-2zM675,298h2v0h-2zM677,298h2v0h-2zM1050,510h3v1h-3zM1054,510h3v1h-3zM1050,516h3v1h-3zM1054,516h3v1h-3zM1050,521h3v1h-3zM1054,521h3v1h-3zM1050,527h3v1h-3zM1054,527h3v1h-3zM1050,532h3v1h-3zM1054,532h3v1h-3zM947,543h3v1h-3zM951,543h3v1h-3zM947,548h3v1h-3zM951,548h3v1h-3zM947,554h3v1h-3zM951,554h3v1h-3zM947,559h3v1h-3zM951,559h3v1h-3zM1075,544h3v1h-3zM1079,544h3v1h-3zM1075,550h3v1h-3zM1079,550h3v1h-3zM1075,555h3v1h-3zM1079,555h3v1h-3zM886,633h3v1h-3zM890,633h3v1h-3zM886,639h3v1h-3zM890,639h3v1h-3zM886,644h3v1h-3zM890,644h3v1h-3zM1287,706h3v1h-3zM1291,706h3v1h-3zM1287,712h3v1h-3zM1291,712h3v1h-3zM1287,717h3v1h-3zM1291,717h3v1h-3zM1287,723h3v1h-3zM1291,723h3v1h-3zM1287,728h3v1h-3zM1291,728h3v1h-3zM931,357h3v1h-3zM935,357h3v1h-3zM931,363h3v1h-3zM935,363h3v1h-3zM931,369h3v1h-3zM935,369h3v1h-3zM931,374h3v1h-3zM935,374h3v1h-3zM492,390h3v1h-3zM496,390h3v1h-3zM492,396h3v1h-3zM496,396h3v1h-3zM492,401h3v1h-3zM496,401h3v1h-3zM761,745h1v2h-1zM761,747h1v2h-1zM767,745h1v2h-1zM767,747h1v2h-1zM773,745h1v2h-1zM773,747h1v2h-1zM779,745h1v2h-1zM779,747h1v2h-1zM785,745h1v2h-1zM785,747h1v2h-1zM790,745h1v2h-1zM790,747h1v2h-1zM796,745h1v2h-1zM796,747h1v2h-1zM802,745h1v2h-1zM802,747h1v2h-1zM808,745h1v2h-1zM808,747h1v2h-1zM814,745h1v2h-1zM814,747h1v2h-1zM819,745h1v2h-1zM819,747h1v2h-1zM825,745h1v2h-1zM825,747h1v2h-1zM537,199h2v1h-2zM541,199h2v1h-2zM496,200h2v1h-2zM500,200h2v1h-2zM533,171h2v1h-2zM537,171h2v1h-2zM519,204h2v0h-2zM521,204h2v0h-2zM550,201h1v2h-1zM550,205h1v2h-1zM489,175h0v2h0zM489,177h0v2h0zM534,181h2v0h-2zM536,181h2v0h-2zM514,179h2v0h-2zM516,179h2v0h-2zM486,190h2v1h-2zM489,190h2v1h-2zM485,184h2v1h-2zM488,184h2v1h-2zM501,171h1v2h-1zM501,173h1v2h-1zM539,207h2v1h-2zM542,207h2v1h-2zM499,182h0v2h0zM499,184h0v2h0zM548,185h1v2h-1zM548,187h1v2h-1zM635,178h1v2h-1zM635,182h1v2h-1zM643,191h1v2h-1zM643,193h1v2h-1zM637,189h1v2h-1zM637,191h1v2h-1zM648,179h1v2h-1zM648,181h1v2h-1zM652,189h1v2h-1zM652,193h1v2h-1zM641,175h1v2h-1zM641,178h1v2h-1zM735,192h2v1h-2zM738,192h2v1h-2zM737,180h2v0h-2zM738,180h2v0h-2zM691,182h2v0h-2zM693,182h2v0h-2zM704,173h1v2h-1zM704,177h1v2h-1zM689,199h2v0h-2zM691,199h2v0h-2zM687,170h2v1h-2zM691,170h2v1h-2zM696,191h2v0h-2zM697,191h2v0h-2zM702,204h2v0h-2zM703,204h2v0h-2zM707,191h1v2h-1zM707,193h1v2h-1zM734,170h2v0h-2zM736,170h2v0h-2zM721,203h2v0h-2zM722,203h2v0h-2zM713,172h2v0h-2zM714,172h2v0h-2zM776,152h0v2h0zM776,154h0v2h0zM772,143h2v1h-2zM776,143h2v1h-2zM784,146h1v2h-1zM784,148h1v2h-1zM769,153h1v2h-1zM769,155h1v2h-1zM782,159h0v2h0zM782,161h0v2h0zM772,162h2v0h-2zM773,162h2v0h-2zM788,155h1v2h-1zM788,159h1v2h-1zM767,144h0v2h0zM767,146h0v2h0zM790,147h0v2h0zM790,148h0v2h0zM791,177h2v1h-2zM794,177h2v1h-2zM791,186h1v2h-1zM791,188h1v2h-1zM798,190h0v2h0zM798,191h0v2h0zM518,280h1v2h-1zM518,283h1v2h-1zM490,257h1v2h-1zM490,261h1v2h-1zM498,265h2v1h-2zM501,265h2v1h-2zM538,256h1v2h-1zM538,259h1v2h-1zM526,261h2v1h-2zM529,261h2v1h-2zM532,283.5h2v2h-2zM534,283.5h2v2h-2zM532,286.5h2v2h-2zM534,286.5h2v2h-2zM547,250h0v2h0zM547,252h0v2h0zM491,285h2v1h-2zM493,285h2v1h-2zM504,252h1v2h-1zM504,254h1v2h-1zM507,286h2v0h-2zM509,286h2v0h-2zM512,252h2v0h-2zM514,252h2v0h-2zM511,261h2v1h-2zM514,261h2v1h-2zM501,271h2v1h-2zM505,271h2v1h-2zM519,272h2v1h-2zM522,272h2v1h-2zM548,271h0v2h0zM548,273h0v2h0zM491,241.5h2v2h-2zM493,241.5h2v2h-2zM491,244.5h2v2h-2zM493,244.5h2v2h-2zM530,247h2v1h-2zM532,247h2v1h-2zM490,276h2v1h-2zM492,276h2v1h-2zM540,275h2v0h-2zM541,275h2v0h-2zM506,277h0v2h0zM506,278h0v2h0zM509,243h2v1h-2zM511,243h2v1h-2zM545,281h1v2h-1zM545,283h1v2h-1zM757,259h2v1h-2zM761,259h2v1h-2zM720,263h0v2h0zM720,264h0v2h0zM749,267h2v0h-2zM751,267h2v0h-2zM735,270h2v0h-2zM737,270h2v0h-2zM732,261h2v1h-2zM734,261h2v1h-2zM720,257h2v1h-2zM724,257h2v1h-2zM795,164h2v1h-2zM798,164h2v1h-2zM797,159h2v0h-2zM798,159h2v0h-2zM831,154h2v0h-2zM833,154h2v0h-2zM822,189h0v2h0zM822,191h0v2h0zM813,191h1v2h-1zM813,195h1v2h-1zM807,203h2v1h-2zM810,203h2v1h-2zM829,183h0v2h0zM829,185h0v2h0zM799,147h2v0h-2zM800,147h2v0h-2zM813,186h2v0h-2zM814,186h2v0h-2zM812,148h2v1h-2zM815,148h2v1h-2zM829,172h0v2h0zM829,173h0v2h0zM822,155h0v2h0zM822,156h0v2h0zM832,159h1v2h-1zM832,163h1v2h-1zM784,184h1v2h-1zM784,186h1v2h-1zM859,208h2v0h-2zM860,208h2v0h-2zM860,200h2v0h-2zM861,200h2v0h-2zM850,185h2v0h-2zM851,185h2v0h-2zM848,206h2v0h-2zM850,206h2v0h-2zM848,196h2v1h-2zM851,196h2v1h-2zM869,191h0v2h0zM869,193h0v2h0zM863,185h2v1h-2zM867,185h2v1h-2zM893,197h2v1h-2zM896,197h2v1h-2zM895,192h2v0h-2zM897,192h2v0h-2zM931,192h0v2h0zM931,193h0v2h0zM936,190h1v2h-1zM936,192h1v2h-1zM955,191h0v2h0zM955,192h0v2h0zM1042,158h2v1h-2zM1044,158h2v1h-2zM1042,152h2v1h-2zM1044,152h2v1h-2zM1045,178h2v0h-2zM1047,178h2v0h-2zM1111,197h2v0h-2zM1113,197h2v0h-2zM1061,215h1v2h-1zM1061,218h1v2h-1zM991,225h2v0h-2zM992,225h2v0h-2zM892,238h2v1h-2zM895,238h2v1h-2zM889,231h2v1h-2zM893,231h2v1h-2zM819,239h2v1h-2zM821,239h2v1h-2zM828,239h1v2h-1zM828,242h1v2h-1zM1074,260h2v1h-2zM1078,260h2v1h-2zM995,275h0v2h0zM995,277h0v2h0zM1041,277h2v1h-2zM1043,277h2v1h-2zM1022,276h0v2h0zM1022,277h0v2h0zM1047,260h0v2h0zM1047,261h0v2h0zM993,287h2v0h-2zM994,287h2v0h-2zM985,266h1v2h-1zM985,268h1v2h-1zM1058,269h1v2h-1zM1058,273h1v2h-1zM1074,276h1v2h-1zM1074,280h1v2h-1zM1016,269h0v2h0zM1016,271h0v2h0zM963,265h2v1h-2zM965,265h2v1h-2zM1025,271h2v0h-2zM1027,271h2v0h-2zM1030,266h2v0h-2zM1031,266h2v0h-2zM972,262h1v2h-1zM972,266h1v2h-1zM946,285h2v0h-2zM948,285h2v0h-2zM958,285h2v0h-2zM960,285h2v0h-2zM967,275h2v1h-2zM971,275h2v1h-2zM1058,260h2v0h-2zM1059,260h2v0h-2zM1065,266h2v1h-2zM1067,266h2v1h-2zM999,263h1v2h-1zM999,267h1v2h-1zM862,274h1v2h-1zM862,277h1v2h-1zM854,272h1v2h-1zM854,276h1v2h-1zM854,283h2v0h-2zM855,283h2v0h-2zM862,269h2v0h-2zM863,269h2v0h-2zM501,293h2v1h-2zM504,293h2v1h-2zM490,292h1v2h-1zM490,296h1v2h-1zM541,297h2v1h-2zM544,297h2v1h-2zM502,299h2v0h-2zM503,299h2v0h-2zM530,295h2v0h-2zM531,295h2v0h-2zM526,301h2v1h-2zM528,301h2v1h-2zM545,303h1v2h-1zM545,305h1v2h-1zM491,303h2v0h-2zM492,303h2v0h-2zM519,300h1v2h-1zM519,303h1v2h-1zM520,293h2v1h-2zM522,293h2v1h-2zM536,307h2v0h-2zM538,307h2v0h-2zM501,305h2v1h-2zM504,305h2v1h-2zM842,296h0v2h0zM842,297h0v2h0zM534,351h1v2h-1zM534,355h1v2h-1zM498,357h1v2h-1zM498,360h1v2h-1zM516,363h2v1h-2zM518,363h2v1h-2zM509,352h1v2h-1zM509,356h1v2h-1zM515,382h2v1h-2zM518,382h2v1h-2zM541,359h1v2h-1zM541,363h1v2h-1zM539,370h1v2h-1zM539,372h1v2h-1zM485,362h2v1h-2zM489,362h2v1h-2zM504,367h2v0h-2zM506,367h2v0h-2zM525,349h0v2h0zM525,350h0v2h0zM492,379h2v1h-2zM496,379h2v1h-2zM529,378h1v2h-1zM529,381h1v2h-1zM507,376h1v2h-1zM507,380h1v2h-1zM535,383h2v0h-2zM537,383h2v0h-2zM616,427h2v1h-2zM620,427h2v1h-2zM640,413h0v2h0zM640,414h0v2h0zM595,373h2v1h-2zM599,373h2v1h-2zM644,382h0v2h0zM644,383h0v2h0zM629,392h2v1h-2zM633,392h2v1h-2zM599,436h2v1h-2zM602,436h2v1h-2zM624,441h2v1h-2zM628,441h2v1h-2zM629,419h2v0h-2zM631,419h2v0h-2zM622,364h1v2h-1zM622,367h1v2h-1zM603,392h1v2h-1zM603,394h1v2h-1zM748,373h2v1h-2zM750,373h2v1h-2zM721,363.5h2v2h-2zM723,363.5h2v2h-2zM721,366.5h2v2h-2zM723,366.5h2v2h-2zM675,364h1v2h-1zM675,366h1v2h-1zM682,389h0v2h0zM682,390h0v2h0zM730,370h2v0h-2zM732,370h2v0h-2zM705,369h0v2h0zM705,371h0v2h0zM735,384h1v2h-1zM735,388h1v2h-1zM722,374h1v2h-1zM722,378h1v2h-1zM754,383h2v0h-2zM756,383h2v0h-2zM754,358h2v1h-2zM758,358h2v1h-2zM665,443h2v0h-2zM667,443h2v0h-2zM715,442h0v2h0zM715,444h0v2h0zM684,443h2v1h-2zM687,443h2v1h-2zM675,442h1v2h-1zM675,444h1v2h-1zM706,446h2v0h-2zM707,446h2v0h-2zM695,445h2v0h-2zM696,445h2v0h-2zM751,442h1v2h-1zM751,446h1v2h-1zM745,442h1v2h-1zM745,446h1v2h-1zM765,457h1v2h-1zM765,461h1v2h-1zM809,429h1v2h-1zM809,431h1v2h-1zM803,488h2v1h-2zM805,488h2v1h-2zM805,470h0v2h0zM805,472h0v2h0zM796,474h2v0h-2zM798,474h2v0h-2zM789,406h0v2h0zM789,407h0v2h0zM784,441.5h2v2h-2zM786,441.5h2v2h-2zM784,444.5h2v2h-2zM786,444.5h2v2h-2zM808,480h2v1h-2zM811,480h2v1h-2zM784,400h0v2h0zM784,402h0v2h0zM813,446h2v0h-2zM815,446h2v0h-2zM791,480h1v2h-1zM791,483h1v2h-1zM779,411h1v2h-1zM779,415h1v2h-1zM801,452h1v2h-1zM801,456h1v2h-1zM804,404h0v2h0zM804,406h0v2h0zM788,422h1v2h-1zM788,424h1v2h-1zM760,443h1v2h-1zM760,446h1v2h-1zM773,419h1v2h-1zM773,422h1v2h-1zM781,462.5h2v2h-2zM787,462.5h2v2h-2zM781,469.5h2v2h-2zM787,469.5h2v2h-2zM759,458h0v2h0zM759,460h0v2h0zM769,395.5h2v2h-2zM771,395.5h2v2h-2zM769,398.5h2v2h-2zM771,398.5h2v2h-2zM812,409.5h2v2h-2zM818,409.5h2v2h-2zM812,416.5h2v2h-2zM818,416.5h2v2h-2zM803,399h2v0h-2zM804,399h2v0h-2zM771,432h2v0h-2zM772,432h2v0h-2zM794,433h2v0h-2zM796,433h2v0h-2zM774,406h2v0h-2zM775,406h2v0h-2zM794,418h2v1h-2zM798,418h2v1h-2zM798,464h1v2h-1zM798,466h1v2h-1zM766,472h2v1h-2zM770,472h2v1h-2zM805,414h0v2h0zM805,415h0v2h0zM762,492h2v1h-2zM764,492h2v1h-2zM769,480h1v2h-1zM769,483h1v2h-1zM811,461h2v1h-2zM814,461h2v1h-2zM782,432h2v1h-2zM784,432h2v1h-2zM794,440h0v2h0zM794,441h0v2h0zM808,394h2v0h-2zM810,394h2v0h-2zM785,493h2v0h-2zM786,493h2v0h-2zM761,483h2v0h-2zM762,483h2v0h-2zM794,424h2v1h-2zM796,424h2v1h-2zM765,407h0v2h0zM765,409h0v2h0zM774,443h1v2h-1zM774,446h1v2h-1zM795,409h2v0h-2zM796,409h2v0h-2zM771,491h2v1h-2zM773,491h2v1h-2zM797,483h1v2h-1zM797,485h1v2h-1zM779,486h2v0h-2zM781,486h2v0h-2zM802,442h1v2h-1zM802,444h1v2h-1zM813,489h1v2h-1zM813,492h1v2h-1zM778,392h2v0h-2zM780,392h2v0h-2zM811,400h0v2h0zM811,402h0v2h0zM836,427h2v0h-2zM837,427h2v0h-2zM836,444h0v2h0zM836,446h0v2h0zM828,436h1v2h-1zM828,439h1v2h-1zM849,442h2v1h-2zM852,442h2v1h-2zM846,434h2v1h-2zM849,434h2v1h-2zM850,421h2v0h-2zM852,421h2v0h-2zM829,426h0v2h0zM829,427h0v2h0zM856,449h2v1h-2zM858,449h2v1h-2zM858,456h2v0h-2zM859,456h2v0h-2zM841,434h0v2h0zM841,435h0v2h0zM859,436h2v0h-2zM860,436h2v0h-2zM866,425h0v2h0zM866,427h0v2h0zM898,329h2v0h-2zM899,329h2v0h-2zM896,343h2v0h-2zM898,343h2v0h-2zM925,330h1v2h-1zM925,333h1v2h-1zM894,335h2v1h-2zM897,335h2v1h-2zM922,345h2v0h-2zM923,345h2v0h-2zM896,348h2v1h-2zM898,348h2v1h-2zM1025,322h2v1h-2zM1028,322h2v1h-2zM1011,319h2v0h-2zM1013,319h2v0h-2zM1069,299h1v2h-1zM1069,301h1v2h-1zM1042,314h0v2h0zM1042,316h0v2h0zM1068,326h2v1h-2zM1070,326h2v1h-2zM1019,301h0v2h0zM1019,303h0v2h0zM1003,309h2v1h-2zM1005,309h2v1h-2zM1052,327h2v0h-2zM1054,327h2v0h-2zM1028,298h1v2h-1zM1028,302h1v2h-1zM1077,301h2v1h-2zM1079,301h2v1h-2zM1003,328h2v0h-2zM1005,328h2v0h-2zM951,305h1v2h-1zM951,309h1v2h-1zM960,300h1v2h-1zM960,304h1v2h-1zM978,306h1v2h-1zM978,309h1v2h-1zM1050,312h1v2h-1zM1050,315h1v2h-1zM984,320.5h2v2h-2zM986,320.5h2v2h-2zM984,323.5h2v2h-2zM986,323.5h2v2h-2zM1047,302h2v0h-2zM1048,302h2v0h-2zM1069,310h2v1h-2zM1073,310h2v1h-2zM996,320h1v2h-1zM996,323h1v2h-1zM1012,295h1v2h-1zM1012,299h1v2h-1zM1077,326h2v0h-2zM1078,326h2v0h-2zM1072,318h2v1h-2zM1076,318h2v1h-2zM986,303h2v0h-2zM987,303h2v0h-2zM1037,305h0v2h0zM1037,307h0v2h0zM953,321h1v2h-1zM953,324h1v2h-1zM970,299h1v2h-1zM970,301h1v2h-1zM988,314h2v1h-2zM992,314h2v1h-2zM961,323h2v1h-2zM964,323h2v1h-2zM1004,375h2v1h-2zM1006,375h2v1h-2zM963,373h1v2h-1zM963,375h1v2h-1zM1027,355h2v0h-2zM1029,355h2v0h-2zM1047,433h0v2h0zM1047,435h0v2h0zM1035,386h1v2h-1zM1035,388h1v2h-1zM1010,348h2v1h-2zM1012,348h2v1h-2zM1031,437.5h2v2h-2zM1035,437.5h2v2h-2zM1031,442.5h2v2h-2zM1035,442.5h2v2h-2zM1059,378h1v2h-1zM1059,381h1v2h-1zM1021,428h2v1h-2zM1024,428h2v1h-2zM991,442h2v1h-2zM993,442h2v1h-2zM973,409h0v2h0zM973,410h0v2h0zM1024,382h2v1h-2zM1026,382h2v1h-2zM987,391h2v0h-2zM989,391h2v0h-2zM999,468h2v0h-2zM1000,468h2v0h-2zM971,438h2v0h-2zM972,438h2v0h-2zM984,447h1v2h-1zM984,451h1v2h-1zM971,380h1v2h-1zM971,382h1v2h-1zM1045,444.5h2v2h-2zM1047,444.5h2v2h-2zM1045,447.5h2v2h-2zM1047,447.5h2v2h-2zM1006,354h0v2h0zM1006,355h0v2h0zM985,471h0v2h0zM985,472h0v2h0zM1027,490h0v2h0zM1027,491h0v2h0zM1046,399h1v2h-1zM1046,401h1v2h-1zM1062,480h2v0h-2zM1064,480h2v0h-2zM1029,461.5h2v2h-2zM1032,461.5h2v2h-2zM1029,465.5h2v2h-2zM1032,465.5h2v2h-2zM1026,399h2v1h-2zM1029,399h2v1h-2zM989,400h2v1h-2zM992,400h2v1h-2zM968,393h2v0h-2zM970,393h2v0h-2zM996,422h2v0h-2zM997,422h2v0h-2zM952,421h2v0h-2zM953,421h2v0h-2zM961,478h2v0h-2zM962,478h2v0h-2zM948,353h2v0h-2zM949,353h2v0h-2zM1037,374h0v2h0zM1037,376h0v2h0zM960,399.5h2v2h-2zM962,399.5h2v2h-2zM960,402.5h2v2h-2zM962,402.5h2v2h-2zM1059,372h2v0h-2zM1060,372h2v0h-2zM1038,481h2v1h-2zM1041,481h2v1h-2zM1010,485h2v1h-2zM1014,485h2v1h-2zM1038,409h2v0h-2zM1039,409h2v0h-2zM973,471h2v0h-2zM974,471h2v0h-2zM1049,478h1v2h-1zM1049,482h1v2h-1zM988,459h2v1h-2zM991,459h2v1h-2zM950,370h2v1h-2zM953,370h2v1h-2zM985,364h2v1h-2zM988,364h2v1h-2zM1062,350h0v2h0zM1062,352h0v2h0zM959,449h0v2h0zM959,450h0v2h0zM976,490h2v0h-2zM978,490h2v0h-2zM1059,413h2v1h-2zM1061,413h2v1h-2zM989,372h2v1h-2zM992,372h2v1h-2zM1011,426h2v1h-2zM1014,426h2v1h-2zM979,460h2v1h-2zM981,460h2v1h-2zM995,486h2v0h-2zM996,486h2v0h-2zM1052,439h2v1h-2zM1054,439h2v1h-2zM963,348.5h2v2h-2zM969,348.5h2v2h-2zM963,355.5h2v2h-2zM969,355.5h2v2h-2zM982,414h0v2h0zM982,416h0v2h0zM1036,349h1v2h-1zM1036,353h1v2h-1zM988,341h2v1h-2zM992,341h2v1h-2zM1063,488h0v2h0zM1063,489h0v2h0zM1007,406h2v1h-2zM1011,406h2v1h-2zM1012,444h2v1h-2zM1015,444h2v1h-2zM1042,370h2v1h-2zM1045,370h2v1h-2zM1002,452h2v1h-2zM1004,452h2v1h-2zM955,479h1v2h-1zM955,483h1v2h-1zM990,347h2v0h-2zM992,347h2v0h-2zM1022,447h1v2h-1zM1022,451h1v2h-1zM1047,385h2v0h-2zM1048,385h2v0h-2zM1015,338h2v1h-2zM1018,338h2v1h-2zM969,484h2v1h-2zM971,484h2v1h-2zM1015,475h2v1h-2zM1018,475h2v1h-2zM1024,410h2v0h-2zM1026,410h2v0h-2zM955,494h2v0h-2zM957,494h2v0h-2zM1028,345h0v2h0zM1028,347h0v2h0zM1056,345h0v2h0zM1056,347h0v2h0zM1045,465h2v0h-2zM1046,465h2v0h-2zM1043,419h1v2h-1zM1043,422h1v2h-1zM1005,482h0v2h0zM1005,483h0v2h0zM1067,348h0v2h0zM1067,349h0v2h0zM1063,448h2v1h-2zM1065,448h2v1h-2zM983,385h2v1h-2zM986,385h2v1h-2zM1004,432h2v0h-2zM1006,432h2v0h-2zM961,464h2v0h-2zM962,464h2v0h-2zM1057,482h0v2h0zM1057,484h0v2h0zM1025,388h2v0h-2zM1026,388h2v0h-2zM949,389h2v0h-2zM950,389h2v0h-2zM983,353h2v0h-2zM985,353h2v0h-2zM1018,464h1v2h-1zM1018,467h1v2h-1zM1021,423h2v0h-2zM1023,423h2v0h-2zM1024,462h0v2h0zM1024,463h0v2h0zM948,397h2v1h-2zM950,397h2v1h-2zM1008,392h2v1h-2zM1010,392h2v1h-2zM1034,369h2v0h-2zM1035,369h2v0h-2zM961,384h1v2h-1zM961,388h1v2h-1zM1052,405h2v0h-2zM1054,405h2v0h-2zM1055,471h1v2h-1zM1055,473h1v2h-1zM964,365h0v2h0zM964,366h0v2h0zM974,429h1v2h-1zM974,431h1v2h-1zM1027,483h2v0h-2zM1029,483h2v0h-2zM955,469h2v1h-2zM959,469h2v1h-2zM1042,343h2v0h-2zM1044,343h2v0h-2zM1065,394h0v2h0zM1065,396h0v2h0zM948,448h0v2h0zM948,450h0v2h0zM1055,424h2v1h-2zM1057,424h2v1h-2zM1113,443h2v1h-2zM1117,443h2v1h-2zM1107,470h2v1h-2zM1109,470h2v1h-2zM1138,376h1v2h-1zM1138,380h1v2h-1zM1109,406h2v0h-2zM1111,406h2v0h-2zM1148,429h2v0h-2zM1150,429h2v0h-2zM1114,360h2v1h-2zM1117,360h2v1h-2zM1120,460h0v2h0zM1120,461h0v2h0zM1146,415h0v2h0zM1146,416h0v2h0zM1102,416h2v1h-2zM1105,416h2v1h-2zM1107,428h0v2h0zM1107,429h0v2h0zM1152,355h1v2h-1zM1152,358h1v2h-1zM1121,390h2v1h-2zM1125,390h2v1h-2zM1148,455h2v1h-2zM1151,455h2v1h-2zM1132,357h2v0h-2zM1134,357h2v0h-2zM1102,355h1v2h-1zM1102,358h1v2h-1zM1092,452h1v2h-1zM1092,454h1v2h-1zM1145,471h0v2h0zM1145,473h0v2h0zM1138,363h0v2h0zM1138,364h0v2h0zM1138,342h1v2h-1zM1138,345h1v2h-1zM1114,346h2v1h-2zM1118,346h2v1h-2zM1112,395h0v2h0zM1112,396h0v2h0zM1135,470h0v2h0zM1135,472h0v2h0zM1134,409h2v1h-2zM1137,409h2v1h-2zM1123,435h2v1h-2zM1126,435h2v1h-2zM1112,438h2v0h-2zM1113,438h2v0h-2zM1092,357h2v1h-2zM1095,357h2v1h-2zM1138,445h2v1h-2zM1140,445h2v1h-2zM1153,394h2v0h-2zM1154,394h2v0h-2zM1095,430h2v1h-2zM1099,430h2v1h-2zM1136,393h2v0h-2zM1137,393h2v0h-2zM1107,450h0v2h0zM1107,452h0v2h0zM1123,469h2v1h-2zM1127,469h2v1h-2zM1100,443h0v2h0zM1100,444h0v2h0zM1125,366h2v1h-2zM1129,366h2v1h-2zM1097,466h1v2h-1zM1097,470h1v2h-1zM1129,375h2v0h-2zM1131,375h2v0h-2zM1127,399h2v1h-2zM1130,399h2v1h-2zM1125,447h1v2h-1zM1125,449h1v2h-1zM1114,477h2v1h-2zM1118,477h2v1h-2zM1139,452h2v0h-2zM1141,452h2v0h-2zM931,493h2v1h-2zM933,493h2v1h-2zM940,466h2v1h-2zM943,466h2v1h-2zM967,445h1v2h-1zM967,447h1v2h-1zM921,485h1v2h-1zM921,489h1v2h-1zM932,483h2v0h-2zM933,483h2v0h-2zM922,453h0v2h0zM922,454h0v2h0zM947,476h2v0h-2zM948,476h2v0h-2zM923,439h1v2h-1zM923,443h1v2h-1zM966,455h1v2h-1zM966,457h1v2h-1zM947,484h1v2h-1zM947,487h1v2h-1zM923,468h0v2h0zM923,469h0v2h0zM934,455h2v1h-2zM936,455h2v1h-2zM929,452h0v2h0zM929,454h0v2h0zM935,476h2v0h-2zM936,476h2v0h-2zM939,438h2v1h-2zM943,438h2v1h-2zM951,442h2v1h-2zM955,442h2v1h-2zM949,458h0v2h0zM949,459h0v2h0zM921,477h2v0h-2zM922,477h2v0h-2zM844,381h2v1h-2zM847,381h2v1h-2zM825,470h2v1h-2zM829,470h2v1h-2zM789,369h2v1h-2zM792,369h2v1h-2zM811,365h1v2h-1zM811,369h1v2h-1zM783,455h0v2h0zM783,456h0v2h0zM867,377h0v2h0zM867,379h0v2h0zM845,376h2v0h-2zM846,376h2v0h-2zM838,415h2v0h-2zM839,415h2v0h-2zM803,373h0v2h0zM803,374h0v2h0zM860,379h1v2h-1zM860,382h1v2h-1zM854,375h0v2h0zM854,377h0v2h0zM808,452h2v1h-2zM812,452h2v1h-2zM841,466h2v1h-2zM843,466h2v1h-2zM856,391h2v1h-2zM859,391h2v1h-2zM861,416h1v2h-1zM861,418h1v2h-1zM833,392.5h2v2h-2zM837,392.5h2v2h-2zM833,397.5h2v2h-2zM837,397.5h2v2h-2zM808,381h1v2h-1zM808,384h1v2h-1zM818,400h0v2h0zM818,401h0v2h0zM847,475h2v0h-2zM848,475h2v0h-2zM785,384h2v1h-2zM787,384h2v1h-2zM846,358h0v2h0zM846,359h0v2h0zM794,384h2v1h-2zM796,384h2v1h-2zM858,461h2v0h-2zM860,461h2v0h-2zM831,477h2v1h-2zM833,477h2v1h-2zM847,367h2v1h-2zM851,367h2v1h-2zM832,358h2v1h-2zM835,358h2v1h-2zM860,471h0v2h0zM860,473h0v2h0zM835,408h2v1h-2zM839,408h2v1h-2zM790,452h2v1h-2zM794,452h2v1h-2zM854,406h2v0h-2zM856,406h2v0h-2zM856,354h2v1h-2zM860,354h2v1h-2zM806,359h2v0h-2zM807,359h2v0h-2zM824,397h2v0h-2zM825,397h2v0h-2zM867,459h0v2h0zM867,460h0v2h0zM829,406h1v2h-1zM829,409h1v2h-1zM854,427h2v0h-2zM855,427h2v0h-2zM927,484h0v2h0zM927,486h0v2h0zM930,472h0v2h0zM930,473h0v2h0zM519,543.5h2v2h-2zM521,543.5h2v2h-2zM519,546.5h2v2h-2zM521,546.5h2v2h-2zM518,553h2v0h-2zM520,553h2v0h-2zM519,539h2v0h-2zM521,539h2v0h-2zM566,614h1v2h-1zM566,616h1v2h-1zM613,613h0v2h0zM613,614h0v2h0zM642,613h1v2h-1zM642,615h1v2h-1zM715,615h1v2h-1zM715,619h1v2h-1zM705,616h1v2h-1zM705,618h1v2h-1zM678,616h2v0h-2zM679,616h2v0h-2zM686,615h1v2h-1zM686,619h1v2h-1zM666,616h0v2h0zM666,618h0v2h0zM692,614h1v2h-1zM692,617h1v2h-1zM658,615h0v2h0zM658,617h0v2h0zM672,613h1v2h-1zM672,617h1v2h-1zM766,613h0v2h0zM766,614h0v2h0zM668,635h2v0h-2zM670,635h2v0h-2zM720,635h2v1h-2zM724,635h2v1h-2zM586,646h2v1h-2zM589,646h2v1h-2zM581,695h2v0h-2zM582,695h2v0h-2zM635,692h1v2h-1zM635,695h1v2h-1zM647,656h2v1h-2zM651,656h2v1h-2zM714,662h1v2h-1zM714,666h1v2h-1zM692,668h1v2h-1zM692,671h1v2h-1zM652,678h2v1h-2zM656,678h2v1h-2zM730,697h2v1h-2zM733,697h2v1h-2zM721,656h2v1h-2zM723,656h2v1h-2zM686,695h2v0h-2zM687,695h2v0h-2zM673,681h1v2h-1zM673,684h1v2h-1zM613,677h1v2h-1zM613,680h1v2h-1zM577,658h1v2h-1zM577,662h1v2h-1zM575,675h1v2h-1zM575,678h1v2h-1zM701,684h2v1h-2zM703,684h2v1h-2zM566,693h2v0h-2zM568,693h2v0h-2zM601,669h2v1h-2zM603,669h2v1h-2zM699,669h0v2h0zM699,671h0v2h0zM627,681h2v1h-2zM629,681h2v1h-2zM719,691h2v1h-2zM721,691h2v1h-2zM554,671h2v1h-2zM557,671h2v1h-2zM722,662h0v2h0zM722,664h0v2h0zM587,656h1v2h-1zM587,659h1v2h-1zM780,512h1v2h-1zM780,516h1v2h-1zM788,506h2v0h-2zM790,506h2v0h-2zM793,518h0v2h0zM793,520h0v2h0zM778,501h1v2h-1zM778,504h1v2h-1zM782,527h2v0h-2zM784,527h2v0h-2zM643,508h1v2h-1zM643,510h1v2h-1zM669,503h0v2h0zM669,504h0v2h0zM699,499h1v2h-1zM699,501h1v2h-1zM727,499h1v2h-1zM727,501h1v2h-1zM754,499h0v2h0zM754,501h0v2h0zM787,511h2v1h-2zM791,511h2v1h-2zM791,529h2v0h-2zM792,529h2v0h-2zM786,518h0v2h0zM786,520h0v2h0zM787,500h2v1h-2zM791,500h2v1h-2zM823,511h2v1h-2zM826,511h2v1h-2zM818,615h0v2h0zM818,616h0v2h0zM842,617h1v2h-1zM842,619h1v2h-1zM848,616h0v2h0zM848,618h0v2h0zM839,626h2v0h-2zM840,626h2v0h-2zM1089,627h2v0h-2zM1090,627h2v0h-2zM1100,627h2v1h-2zM1102,627h2v1h-2zM970,626h2v1h-2zM972,626h2v1h-2zM1078,619h0v2h0zM1078,621h0v2h0zM1109,626h1v2h-1zM1109,628h1v2h-1zM1058,628h2v1h-2zM1061,628h2v1h-2zM998,620h2v1h-2zM1000,620h2v1h-2zM1044,625h0v2h0zM1044,627h0v2h0zM1014,629h2v0h-2zM1016,629h2v0h-2zM1058,620h2v0h-2zM1060,620h2v0h-2zM1030,626h1v2h-1zM1030,628h1v2h-1zM973,618h2v1h-2zM977,618h2v1h-2zM987,618h2v1h-2zM990,618h2v1h-2zM1016,620h0v2h0zM1016,622h0v2h0zM1101,617h0v2h0zM1101,619h0v2h0zM980,625h1v2h-1zM980,627h1v2h-1zM1069,628h2v0h-2zM1071,628h2v0h-2zM954,627h0v2h0zM954,628h0v2h0zM795,654h0v2h0zM795,656h0v2h0zM824,653h1v2h-1zM824,656h1v2h-1zM845,672h2v0h-2zM846,672h2v0h-2zM843,678h2v1h-2zM845,678h2v1h-2zM843,666h2v1h-2zM846,666h2v1h-2zM919,674h1v2h-1zM919,676h1v2h-1zM913,672h1v2h-1zM913,675h1v2h-1zM908,673h0v2h0zM908,674h0v2h0zM841,691h2v0h-2zM842,691h2v0h-2zM941,699h2v1h-2zM943,699h2v1h-2zM1187,657h2v1h-2zM1190,657h2v1h-2zM1222,643h0v2h0zM1222,644h0v2h0zM1202,643h2v1h-2zM1205,643h2v1h-2zM1203,656h1v2h-1zM1203,660h1v2h-1zM1221,674h2v1h-2zM1225,674h2v1h-2zM1222,665h1v2h-1zM1222,667h1v2h-1zM1231,657h0v2h0zM1231,659h0v2h0zM1193,649h2v0h-2zM1194,649h2v0h-2zM1196,670h1v2h-1zM1196,674h1v2h-1zM1213,646h1v2h-1zM1213,650h1v2h-1zM1233,640h2v1h-2zM1236,640h2v1h-2zM1232,675h2v0h-2zM1234,675h2v0h-2zM1275,653h2v1h-2zM1277,653h2v1h-2zM1128,689h1v2h-1zM1128,692h1v2h-1zM1134,686.5h2v2h-2zM1137,686.5h2v2h-2zM1134,690.5h2v2h-2zM1137,690.5h2v2h-2zM163,733.5h2v2h-2zM167,733.5h2v2h-2zM163,738.5h2v2h-2zM167,738.5h2v2h-2zM159,722h1v2h-1zM159,724h1v2h-1zM132,757h2v0h-2zM134,757h2v0h-2zM173,745h0v2h0zM173,746h0v2h0zM108,722h0v2h0zM108,724h0v2h0zM103,709h0v2h0zM103,711h0v2h0zM174,707h1v2h-1zM174,709h1v2h-1zM158,759h2v1h-2zM160,759h2v1h-2zM175,725h1v2h-1zM175,727h1v2h-1zM114,736h1v2h-1zM114,740h1v2h-1zM141,765h1v2h-1zM141,768h1v2h-1zM118,759h2v1h-2zM121,759h2v1h-2zM110,765h2v1h-2zM112,765h2v1h-2zM180,716h0v2h0zM180,718h0v2h0zM161,713h0v2h0zM161,715h0v2h0zM147,758h2v1h-2zM150,758h2v1h-2zM102,748h0v2h0zM102,750h0v2h0zM107,759h2v0h-2zM108,759h2v0h-2zM110,749h2v1h-2zM112,749h2v1h-2zM113,710h2v0h-2zM115,710h2v0h-2zM169,764h1v2h-1zM169,767h1v2h-1zM169,756h0v2h0zM169,757h0v2h0zM106,737h1v2h-1zM106,739h1v2h-1zM136,768h0v2h0zM136,769h0v2h0zM113,722h2v1h-2zM116,722h2v1h-2zM152,767h0v2h0zM152,769h0v2h0zM134,707h1v2h-1zM134,709h1v2h-1zM141,708h2v1h-2zM145,708h2v1h-2zM126,709h0v2h0zM126,710h0v2h0zM165,724h2v1h-2zM168,724h2v1h-2zM133,751h2v1h-2zM135,751h2v1h-2zM180,739h0v2h0zM180,741h0v2h0zM215,743h2v0h-2zM216,743h2v0h-2zM250,745h2v0h-2zM252,745h2v0h-2zM306,772h2v0h-2zM307,772h2v0h-2zM242,789h1v2h-1zM242,792h1v2h-1zM222,786h0v2h0zM222,787h0v2h0zM229,785h0v2h0zM229,787h0v2h0zM215,795h2v0h-2zM216,795h2v0h-2zM242,783h2v0h-2zM244,783h2v0h-2zM223,794h2v1h-2zM225,794h2v1h-2zM99,795h2v0h-2zM101,795h2v0h-2zM119,814h2v0h-2zM121,814h2v0h-2zM135,811h2v0h-2zM137,811h2v0h-2zM117,798h1v2h-1zM117,802h1v2h-1zM144,813h2v1h-2zM146,813h2v1h-2zM128,811h1v2h-1zM128,814h1v2h-1zM141,799h1v2h-1zM141,803h1v2h-1zM121,834h2v0h-2zM122,834h2v0h-2zM176,834h2v0h-2zM178,834h2v0h-2zM708,710h2v1h-2zM712,710h2v1h-2zM737,707h1v2h-1zM737,711h1v2h-1zM672,708h2v0h-2zM673,708h2v0h-2zM727,719h0v2h0zM727,720h0v2h0zM672,718h2v1h-2zM675,718h2v1h-2zM700,716.5h2v2h-2zM702,716.5h2v2h-2zM700,719.5h2v2h-2zM702,719.5h2v2h-2zM659,714h1v2h-1zM659,717h1v2h-1zM690,708h2v1h-2zM692,708h2v1h-2zM727,707h2v1h-2zM730,707h2v1h-2zM736,726h2v1h-2zM738,726h2v1h-2zM650,707h1v2h-1zM650,711h1v2h-1zM719,710h0v2h0zM719,711h0v2h0zM728,789h0v2h0zM728,790h0v2h0zM741,776h1v2h-1zM741,780h1v2h-1zM731,802h0v2h0zM731,803h0v2h0zM732,832h2v1h-2zM736,832h2v1h-2zM730,777h1v2h-1zM730,781h1v2h-1zM734,795h2v1h-2zM738,795h2v1h-2zM732,812h2v0h-2zM733,812h2v0h-2zM742,819h0v2h0zM742,821h0v2h0zM734,820h2v0h-2zM735,820h2v0h-2zM740,804h1v2h-1zM740,806h1v2h-1zM726,813h0v2h0zM726,814h0v2h0zM738,838h2v1h-2zM741,838h2v1h-2zM738,769h2v0h-2zM740,769h2v0h-2zM729,825h2v0h-2zM731,825h2v0h-2zM797,706h1v2h-1zM797,709h1v2h-1zM683,706h0v2h0zM683,708h0v2h0zM709,725h2v1h-2zM711,725h2v1h-2zM735,718h2v0h-2zM736,718h2v0h-2zM726,714h2v0h-2zM728,714h2v0h-2zM727,727h2v0h-2zM728,727h2v0h-2zM804,738h2v1h-2zM806,738h2v1h-2zM793,738h2v1h-2zM796,738h2v1h-2zM853,723h2v1h-2zM855,723h2v1h-2zM846,721h1v2h-1zM846,724h1v2h-1zM863,723h0v2h0zM863,725h0v2h0zM848,818h1v2h-1zM848,822h1v2h-1zM850,801h2v0h-2zM851,801h2v0h-2zM843,773h2v1h-2zM845,773h2v1h-2zM850,830h1v2h-1zM850,833h1v2h-1zM839,798h0v2h0zM839,799h0v2h0zM839,809h1v2h-1zM839,813h1v2h-1zM855,820h1v2h-1zM855,823h1v2h-1zM852,772h1v2h-1zM852,776h1v2h-1zM852,809h2v0h-2zM853,809h2v0h-2zM845,807h1v2h-1zM845,809h1v2h-1zM844,788h2v1h-2zM848,788h2v1h-2zM853,765h2v1h-2zM856,765h2v1h-2zM839,834h2v1h-2zM842,834h2v1h-2zM846,761h1v2h-1zM846,765h1v2h-1zM901,729h2v0h-2zM903,729h2v0h-2zM935,736h1v2h-1zM935,738h1v2h-1zM938,746h1v2h-1zM938,748h1v2h-1zM929,738h0v2h0zM929,740h0v2h0zM929,748h0v2h0zM929,750h0v2h0zM937,706h1v2h-1zM937,708h1v2h-1zM1244,801h2v1h-2zM1247,801h2v1h-2zM1272,711h2v0h-2zM1273,711h2v0h-2zM1280,707h0v2h0zM1280,709h0v2h0zM1266,706h1v2h-1zM1266,709h1v2h-1z" fill="#a8a8a8"/><circle cx="729.8" cy="811.4" r="1.3" fill="#00a0b0"/><circle cx="731.4" cy="836.3" r="1.3" fill="#00a0b0"/><circle cx="733.5" cy="744.8" r="1.3" fill="#00a0b0"/><circle cx="1298.8" cy="740.7" r="1.3" fill="#00a0b0"/><circle cx="670" cy="421" r="1.3" fill="#00a0b0"/><circle cx="690" cy="432" r="1.3" fill="#00a0b0"/><circle cx="700" cy="440" r="1.3" fill="#00a0b0"/><circle cx="940" cy="403" r="1.3" fill="#00a0b0"/><circle cx="946" cy="410" r="1.3" fill="#00a0b0"/><circle cx="960" cy="405" r="1.3" fill="#00a0b0"/></svg><div class="abs tab" style="left:1627px;top:63px;width:38px;height:20px"></div><div class="abs lbl" style="left:1633px;top:67px">Net</div><div class="abs panel" style="left:1582px;top:83px;width:333px;height:907px"></div><div class="abs tabsel2" style="left:1582px;top:61px;width:45px;height:23px"></div><div class="abs lbl" style="left:1590px;top:65px">Part</div><div class="abs pbtn" style="left:1595px;top:94px;width:54px;height:24px"></div><div class="abs" style="left:1602px;top:99px;color:#ff0000;font-weight:bold;font-size:14.8px;top:98px">PUZ4</div><div class="abs lbl" style="left:1598px;top:131px">AOZ5516QI_QFN31_5X5</div><div class="abs tbl" style="left:1594px;top:153px;width:311px;height:828px"></div><div class="abs thead" style="left:1595px;top:154px;width:309px;height:24px"></div><div class="abs" style="left:1655px;top:154px;width:1px;height:24px;background:#e5e5e5"></div><div class="abs lbl" style="left:1608px;top:160px">Pin</div><svg class="abs" style="left:1637px;top:160px" width="12" height="6"><path d="M0.5,5.5 L6,0.5 L11.5,5.5 Z" fill="#8896a4"/></svg><div class="abs lbl" style="left:1662px;top:160px">NetName</div><div class="abs lbl num" style="left:1595px;top:182px;width:61px">1</div><div class="abs lbl" style="left:1660px;top:182px">PWM2C</div><div class="abs" style="left:1595px;top:197px;width:309px;height:19px;background:#f3f6fb"></div><div class="abs lbl num" style="left:1595px;top:201px;width:61px">2</div><div class="abs lbl" style="left:1660px;top:201px">DRVEN2C</div><div class="abs lbl num" style="left:1595px;top:220px;width:61px">3</div><div class="abs lbl" style="left:1660px;top:220px">VCC2C</div><div class="abs" style="left:1595px;top:235px;width:309px;height:19px;background:#f3f6fb"></div><div class="abs lbl num" style="left:1595px;top:239px;width:61px">4</div><div class="abs lbl num" style="left:1595px;top:258px;width:61px">5</div><div class="abs lbl" style="left:1660px;top:258px">BOOT2C</div><div class="abs" style="left:1595px;top:273px;width:309px;height:19px;background:#f3f6fb"></div><div class="abs lbl num" style="left:1595px;top:277px;width:61px">6</div><div class="abs lbl num" style="left:1595px;top:296px;width:61px">7</div><div class="abs lbl" style="left:1660px;top:296px">PHASE2C</div><div class="abs" style="left:1595px;top:311px;width:309px;height:19px;background:#f3f6fb"></div><div class="abs lbl num" style="left:1595px;top:315px;width:61px">8</div><div class="abs lbl" style="left:1660px;top:315px">+19VB_CPU</div><div class="abs lbl num" style="left:1595px;top:334px;width:61px">9</div><div class="abs lbl" style="left:1660px;top:334px">+19VB_CPU</div><div class="abs" style="left:1595px;top:349px;width:309px;height:19px;background:#f3f6fb"></div><div class="abs lbl num" style="left:1595px;top:353px;width:61px">10</div><div class="abs lbl" style="left:1660px;top:353px">GND</div><div class="abs lbl num" style="left:1595px;top:372px;width:61px">11</div><div class="abs lbl" style="left:1660px;top:372px">SW_PHASE2C</div><div class="abs" style="left:1595px;top:387px;width:309px;height:19px;background:#f3f6fb"></div><div class="abs lbl num" style="left:1595px;top:391px;width:61px">12</div><div class="abs lbl" style="left:1660px;top:391px">SW_PHASE2C</div><div class="abs lbl num" style="left:1595px;top:410px;width:61px">13</div><div class="abs" style="left:1595px;top:425px;width:309px;height:19px;background:#f3f6fb"></div><div class="abs lbl num" style="left:1595px;top:429px;width:61px">14</div><div class="abs lbl" style="left:1660px;top:429px">GND</div><div class="abs lbl num" style="left:1595px;top:448px;width:61px">15</div><div class="abs lbl" style="left:1660px;top:448px">PVCC2C</div><div class="abs" style="left:1595px;top:463px;width:309px;height:19px;background:#f3f6fb"></div><div class="abs lbl num" style="left:1595px;top:467px;width:61px">16</div><div class="abs lbl num" style="left:1595px;top:486px;width:61px">17</div><div class="abs" style="left:1595px;top:501px;width:309px;height:19px;background:#f3f6fb"></div><div class="abs lbl num" style="left:1595px;top:505px;width:61px">18</div><div class="abs lbl" style="left:1660px;top:505px">GND</div><div class="abs" style="left:1596px;top:538px;width:307px;height:1px;background:#f0f0f0"></div><div class="abs" style="left:1596px;top:557px;width:307px;height:1px;background:#f0f0f0"></div><div class="abs" style="left:1596px;top:576px;width:307px;height:1px;background:#f0f0f0"></div><div class="abs" style="left:1596px;top:595px;width:307px;height:1px;background:#f0f0f0"></div><div class="abs" style="left:1596px;top:614px;width:307px;height:1px;background:#f0f0f0"></div><div class="abs" style="left:1596px;top:633px;width:307px;height:1px;background:#f0f0f0"></div><div class="abs" style="left:1596px;top:652px;width:307px;height:1px;background:#f0f0f0"></div><div class="abs" style="left:1596px;top:671px;width:307px;height:1px;background:#f0f0f0"></div><div class="abs" style="left:1596px;top:690px;width:307px;height:1px;background:#f0f0f0"></div><div class="abs" style="left:1596px;top:709px;width:307px;height:1px;background:#f0f0f0"></div><div class="abs" style="left:1596px;top:728px;width:307px;height:1px;background:#f0f0f0"></div><div class="abs" style="left:1596px;top:747px;width:307px;height:1px;background:#f0f0f0"></div><div class="abs" style="left:1596px;top:766px;width:307px;height:1px;background:#f0f0f0"></div><div class="abs" style="left:1596px;top:785px;width:307px;height:1px;background:#f0f0f0"></div><div class="abs" style="left:1596px;top:804px;width:307px;height:1px;background:#f0f0f0"></div><div class="abs" style="left:1596px;top:823px;width:307px;height:1px;background:#f0f0f0"></div><div class="abs" style="left:1596px;top:842px;width:307px;height:1px;background:#f0f0f0"></div><div class="abs" style="left:1596px;top:861px;width:307px;height:1px;background:#f0f0f0"></div><div class="abs" style="left:1596px;top:880px;width:307px;height:1px;background:#f0f0f0"></div><div class="abs" style="left:1596px;top:899px;width:307px;height:1px;background:#f0f0f0"></div><div class="abs" style="left:1596px;top:918px;width:307px;height:1px;background:#f0f0f0"></div><div class="abs" style="left:1596px;top:937px;width:307px;height:1px;background:#f0f0f0"></div><div class="abs" style="left:1596px;top:956px;width:307px;height:1px;background:#f0f0f0"></div><div class="abs" style="left:1596px;top:975px;width:307px;height:1px;background:#f0f0f0"></div><div class="abs" style="left:1656px;top:520px;width:1px;height:459px;background:#f0f0f0"></div></div></body></html>
